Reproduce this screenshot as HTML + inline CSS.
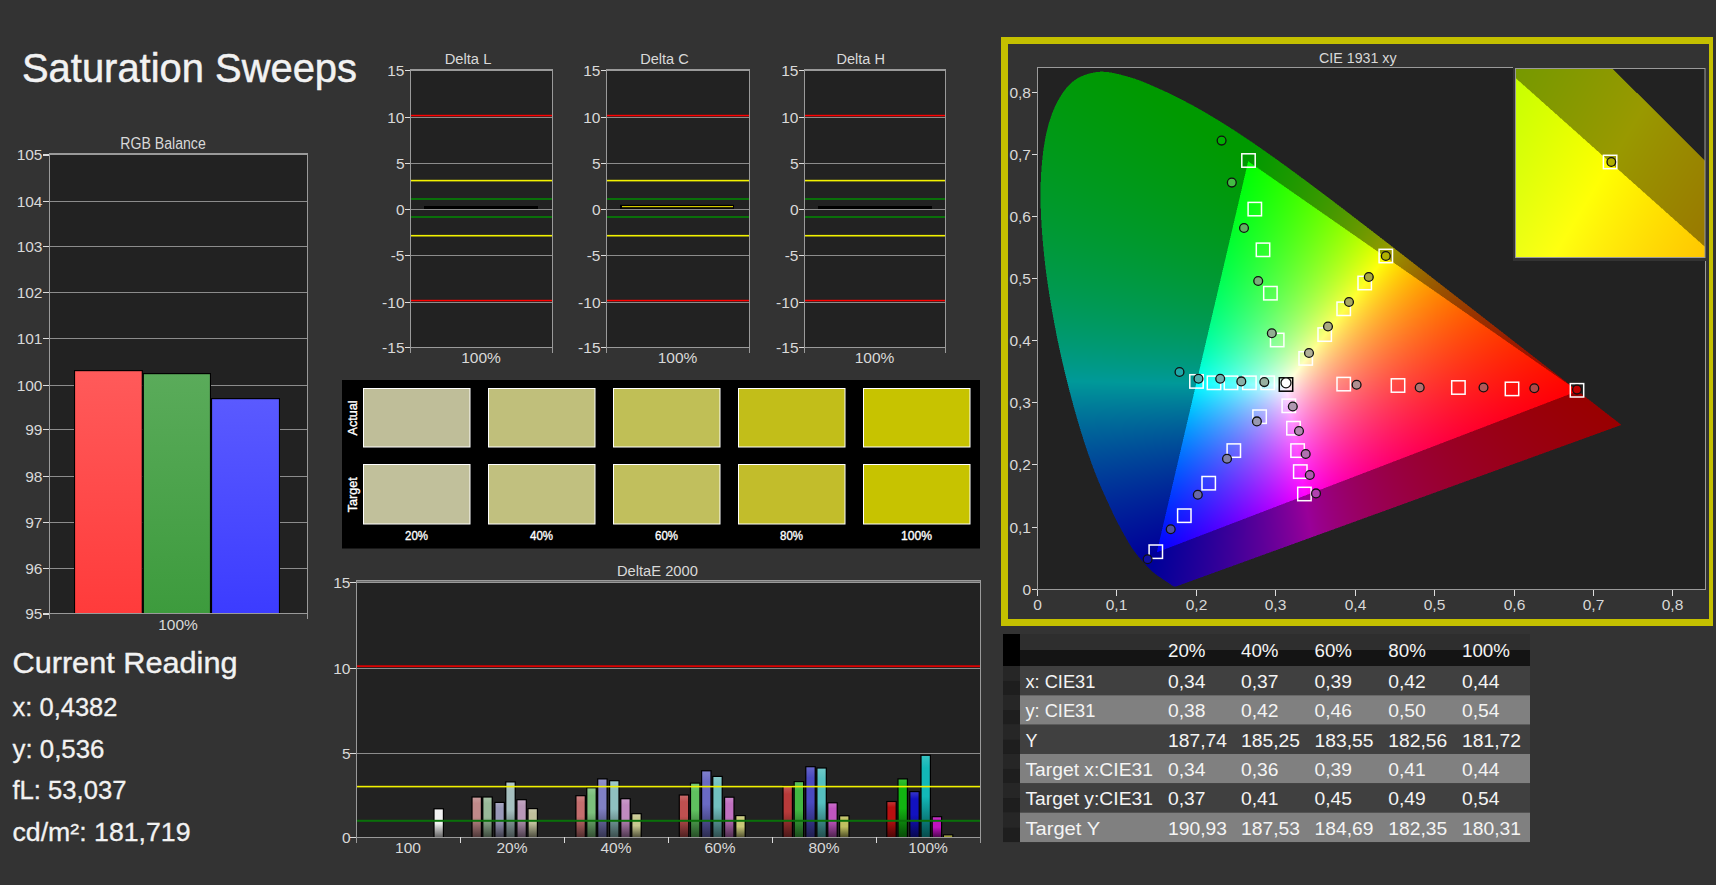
<!DOCTYPE html>
<html><head><meta charset="utf-8"><title>Saturation Sweeps</title>
<style>
html,body{margin:0;padding:0;background:#333333;}
#wrap{position:relative;width:1716px;height:885px;overflow:hidden;background:#333333;font-family:"Liberation Sans",sans-serif;}
svg{position:absolute;left:0;top:0;font-family:"Liberation Sans",sans-serif;}
#cie{position:absolute;left:1038px;top:68px;}
</style></head><body><div id="wrap">
<svg width="1716" height="885" viewBox="0 0 1716 885">
<text x="22" y="82" font-size="41" fill="#f2f2f2" text-anchor="start" textLength="335" lengthAdjust="spacingAndGlyphs" stroke="#f2f2f2" stroke-width="0.5">Saturation Sweeps</text>
<text x="163" y="148.5" font-size="16" fill="#d9d9d9" text-anchor="middle" textLength="85.5" lengthAdjust="spacingAndGlyphs" >RGB Balance</text>
<rect x="49" y="154" width="258" height="459" fill="#222222" />
<rect x="49" y="568" width="258" height="1" fill="#8c8c8c"/>
<rect x="49" y="522" width="258" height="1" fill="#8c8c8c"/>
<rect x="49" y="476" width="258" height="1" fill="#8c8c8c"/>
<rect x="49" y="429" width="258" height="1" fill="#8c8c8c"/>
<rect x="49" y="385" width="258" height="1" fill="#8c8c8c"/>
<rect x="49" y="338" width="258" height="1" fill="#8c8c8c"/>
<rect x="49" y="292" width="258" height="1" fill="#8c8c8c"/>
<rect x="49" y="246" width="258" height="1" fill="#8c8c8c"/>
<rect x="49" y="201" width="258" height="1" fill="#8c8c8c"/>
<defs>
<linearGradient id="gr" x1="0" y1="0" x2="0" y2="1"><stop offset="0" stop-color="#ff5a5a"/><stop offset="1" stop-color="#ff3b3b"/></linearGradient>
<linearGradient id="gg" x1="0" y1="0" x2="0" y2="1"><stop offset="0" stop-color="#5aab5a"/><stop offset="1" stop-color="#3d9b3d"/></linearGradient>
<linearGradient id="gb" x1="0" y1="0" x2="0" y2="1"><stop offset="0" stop-color="#5a5aff"/><stop offset="1" stop-color="#3c3cff"/></linearGradient>
</defs>
<rect x="74" y="370" width="68.80000000000001" height="243" fill="#000" />
<rect x="75.1" y="371.2" width="66.60000000000001" height="241.8" fill="url(#gr)" />
<rect x="142.8" y="373" width="68.19999999999999" height="240" fill="#000" />
<rect x="143.9" y="374.2" width="65.99999999999999" height="238.8" fill="url(#gg)" />
<rect x="211" y="398" width="69" height="215" fill="#000" />
<rect x="212.1" y="399.2" width="66.8" height="213.8" fill="url(#gb)" />
<rect x="49" y="154" width="1" height="465" fill="#9a9a9a"/>
<rect x="307" y="154" width="1" height="465" fill="#9a9a9a"/>
<rect x="49" y="153" width="259" height="2" fill="#9a9a9a"/>
<rect x="49" y="613" width="259" height="1" fill="#9a9a9a"/>
<rect x="43" y="613" width="6" height="2" fill="#dddddd"/>
<text x="42.5" y="618.5" font-size="15.5" fill="#d9d9d9" text-anchor="end" >95</text>
<rect x="43" y="568" width="6" height="1" fill="#dddddd"/>
<text x="42.5" y="573.5" font-size="15.5" fill="#d9d9d9" text-anchor="end" >96</text>
<rect x="43" y="522" width="6" height="1" fill="#dddddd"/>
<text x="42.5" y="527.5" font-size="15.5" fill="#d9d9d9" text-anchor="end" >97</text>
<rect x="43" y="476" width="6" height="1" fill="#dddddd"/>
<text x="42.5" y="481.5" font-size="15.5" fill="#d9d9d9" text-anchor="end" >98</text>
<rect x="43" y="429" width="6" height="1" fill="#dddddd"/>
<text x="42.5" y="434.5" font-size="15.5" fill="#d9d9d9" text-anchor="end" >99</text>
<rect x="43" y="385" width="6" height="1" fill="#dddddd"/>
<text x="42.5" y="390.5" font-size="15.5" fill="#d9d9d9" text-anchor="end" >100</text>
<rect x="43" y="338" width="6" height="1" fill="#dddddd"/>
<text x="42.5" y="343.5" font-size="15.5" fill="#d9d9d9" text-anchor="end" >101</text>
<rect x="43" y="292" width="6" height="1" fill="#dddddd"/>
<text x="42.5" y="297.5" font-size="15.5" fill="#d9d9d9" text-anchor="end" >102</text>
<rect x="43" y="246" width="6" height="1" fill="#dddddd"/>
<text x="42.5" y="251.5" font-size="15.5" fill="#d9d9d9" text-anchor="end" >103</text>
<rect x="43" y="201" width="6" height="1" fill="#dddddd"/>
<text x="42.5" y="206.5" font-size="15.5" fill="#d9d9d9" text-anchor="end" >104</text>
<rect x="43" y="154" width="6" height="2" fill="#dddddd"/>
<text x="42.5" y="159.5" font-size="15.5" fill="#d9d9d9" text-anchor="end" >105</text>
<text x="178" y="630" font-size="15.5" fill="#d9d9d9" text-anchor="middle" >100%</text>
<text x="12.5" y="673.2" font-size="30" fill="#f2f2f2" text-anchor="start" textLength="225" lengthAdjust="spacingAndGlyphs" stroke="#f2f2f2" stroke-width="0.4">Current Reading</text>
<text x="12.5" y="715.8" font-size="25" fill="#f2f2f2" text-anchor="start" textLength="105" lengthAdjust="spacingAndGlyphs" stroke="#f2f2f2" stroke-width="0.3">x: 0,4382</text>
<text x="12.5" y="757.5999999999999" font-size="25" fill="#f2f2f2" text-anchor="start" textLength="92" lengthAdjust="spacingAndGlyphs" stroke="#f2f2f2" stroke-width="0.3">y: 0,536</text>
<text x="12.5" y="799.4" font-size="25" fill="#f2f2f2" text-anchor="start" textLength="114" lengthAdjust="spacingAndGlyphs" stroke="#f2f2f2" stroke-width="0.3">fL: 53,037</text>
<text x="12.5" y="841.1999999999999" font-size="25" fill="#f2f2f2" text-anchor="start" textLength="178" lengthAdjust="spacingAndGlyphs" stroke="#f2f2f2" stroke-width="0.3">cd/m²: 181,719</text>
<rect x="410" y="70" width="142" height="277" fill="#222222" />
<text x="468" y="64" font-size="15.5" fill="#d9d9d9" text-anchor="middle" textLength="46.7" lengthAdjust="spacingAndGlyphs" >Delta L</text>
<rect x="410" y="117" width="142" height="1" fill="#8c8c8c"/>
<rect x="410" y="163" width="142" height="1" fill="#8c8c8c"/>
<rect x="410" y="209" width="142" height="1" fill="#8c8c8c"/>
<rect x="410" y="255" width="142" height="1" fill="#8c8c8c"/>
<rect x="410" y="302" width="142" height="1" fill="#8c8c8c"/>
<rect x="410" y="114.8" width="143" height="1.5" fill="#ff0000"/>
<rect x="410" y="299.8" width="143" height="1.5" fill="#ff0000"/>
<rect x="410" y="179.8" width="143" height="1.6" fill="#f2f200"/>
<rect x="410" y="234.9" width="143" height="1.6" fill="#f2f200"/>
<rect x="410" y="198" width="143" height="2" fill="#0a700a"/>
<rect x="410" y="216" width="143" height="2" fill="#0a700a"/>
<rect x="424" y="206" width="114" height="3" fill="#000" />
<rect x="410" y="70" width="1" height="283" fill="#9a9a9a"/>
<rect x="552" y="70" width="1" height="283" fill="#9a9a9a"/>
<rect x="410" y="69" width="143" height="2" fill="#9a9a9a"/>
<rect x="410" y="347" width="143" height="1" fill="#9a9a9a"/>
<rect x="405" y="70" width="5" height="1" fill="#dddddd"/>
<text x="404.5" y="75.5" font-size="15.5" fill="#d9d9d9" text-anchor="end" >15</text>
<rect x="405" y="117" width="5" height="1" fill="#dddddd"/>
<text x="404.5" y="122.5" font-size="15.5" fill="#d9d9d9" text-anchor="end" >10</text>
<rect x="405" y="163" width="5" height="1" fill="#dddddd"/>
<text x="404.5" y="168.5" font-size="15.5" fill="#d9d9d9" text-anchor="end" >5</text>
<rect x="405" y="209" width="5" height="1" fill="#dddddd"/>
<text x="404.5" y="214.5" font-size="15.5" fill="#d9d9d9" text-anchor="end" >0</text>
<rect x="405" y="255" width="5" height="1" fill="#dddddd"/>
<text x="404.5" y="260.5" font-size="15.5" fill="#d9d9d9" text-anchor="end" >-5</text>
<rect x="405" y="302" width="5" height="1" fill="#dddddd"/>
<text x="404.5" y="307.5" font-size="15.5" fill="#d9d9d9" text-anchor="end" >-10</text>
<rect x="405" y="347" width="5" height="1" fill="#dddddd"/>
<text x="404.5" y="352.5" font-size="15.5" fill="#d9d9d9" text-anchor="end" >-15</text>
<text x="481.0" y="363" font-size="15.5" fill="#d9d9d9" text-anchor="middle" >100%</text>
<rect x="606" y="70" width="143" height="277" fill="#222222" />
<text x="664.5" y="64" font-size="15.5" fill="#d9d9d9" text-anchor="middle" textLength="48.5" lengthAdjust="spacingAndGlyphs" >Delta C</text>
<rect x="606" y="117" width="143" height="1" fill="#8c8c8c"/>
<rect x="606" y="163" width="143" height="1" fill="#8c8c8c"/>
<rect x="606" y="209" width="143" height="1" fill="#8c8c8c"/>
<rect x="606" y="255" width="143" height="1" fill="#8c8c8c"/>
<rect x="606" y="302" width="143" height="1" fill="#8c8c8c"/>
<rect x="606" y="114.8" width="144" height="1.5" fill="#ff0000"/>
<rect x="606" y="299.8" width="144" height="1.5" fill="#ff0000"/>
<rect x="606" y="179.8" width="144" height="1.6" fill="#f2f200"/>
<rect x="606" y="234.9" width="144" height="1.6" fill="#f2f200"/>
<rect x="606" y="198" width="144" height="2" fill="#0a700a"/>
<rect x="606" y="216" width="144" height="2" fill="#0a700a"/>
<rect x="620" y="204.8" width="114" height="4" fill="#000" />
<rect x="622" y="206" width="111" height="1.2" fill="#d2c800" />
<rect x="606" y="70" width="1" height="283" fill="#9a9a9a"/>
<rect x="749" y="70" width="1" height="283" fill="#9a9a9a"/>
<rect x="606" y="69" width="144" height="2" fill="#9a9a9a"/>
<rect x="606" y="347" width="144" height="1" fill="#9a9a9a"/>
<rect x="601" y="70" width="5" height="1" fill="#dddddd"/>
<text x="600.5" y="75.5" font-size="15.5" fill="#d9d9d9" text-anchor="end" >15</text>
<rect x="601" y="117" width="5" height="1" fill="#dddddd"/>
<text x="600.5" y="122.5" font-size="15.5" fill="#d9d9d9" text-anchor="end" >10</text>
<rect x="601" y="163" width="5" height="1" fill="#dddddd"/>
<text x="600.5" y="168.5" font-size="15.5" fill="#d9d9d9" text-anchor="end" >5</text>
<rect x="601" y="209" width="5" height="1" fill="#dddddd"/>
<text x="600.5" y="214.5" font-size="15.5" fill="#d9d9d9" text-anchor="end" >0</text>
<rect x="601" y="255" width="5" height="1" fill="#dddddd"/>
<text x="600.5" y="260.5" font-size="15.5" fill="#d9d9d9" text-anchor="end" >-5</text>
<rect x="601" y="302" width="5" height="1" fill="#dddddd"/>
<text x="600.5" y="307.5" font-size="15.5" fill="#d9d9d9" text-anchor="end" >-10</text>
<rect x="601" y="347" width="5" height="1" fill="#dddddd"/>
<text x="600.5" y="352.5" font-size="15.5" fill="#d9d9d9" text-anchor="end" >-15</text>
<text x="677.5" y="363" font-size="15.5" fill="#d9d9d9" text-anchor="middle" >100%</text>
<rect x="804" y="70" width="141" height="277" fill="#222222" />
<text x="860.7" y="64" font-size="15.5" fill="#d9d9d9" text-anchor="middle" textLength="48.5" lengthAdjust="spacingAndGlyphs" >Delta H</text>
<rect x="804" y="117" width="141" height="1" fill="#8c8c8c"/>
<rect x="804" y="163" width="141" height="1" fill="#8c8c8c"/>
<rect x="804" y="209" width="141" height="1" fill="#8c8c8c"/>
<rect x="804" y="255" width="141" height="1" fill="#8c8c8c"/>
<rect x="804" y="302" width="141" height="1" fill="#8c8c8c"/>
<rect x="804" y="114.8" width="142" height="1.5" fill="#ff0000"/>
<rect x="804" y="299.8" width="142" height="1.5" fill="#ff0000"/>
<rect x="804" y="179.8" width="142" height="1.6" fill="#f2f200"/>
<rect x="804" y="234.9" width="142" height="1.6" fill="#f2f200"/>
<rect x="804" y="198" width="142" height="2" fill="#0a700a"/>
<rect x="804" y="216" width="142" height="2" fill="#0a700a"/>
<rect x="818" y="206" width="114" height="3" fill="#000" />
<rect x="804" y="70" width="1" height="283" fill="#9a9a9a"/>
<rect x="945" y="70" width="1" height="283" fill="#9a9a9a"/>
<rect x="804" y="69" width="142" height="2" fill="#9a9a9a"/>
<rect x="804" y="347" width="142" height="1" fill="#9a9a9a"/>
<rect x="799" y="70" width="5" height="1" fill="#dddddd"/>
<text x="798.5" y="75.5" font-size="15.5" fill="#d9d9d9" text-anchor="end" >15</text>
<rect x="799" y="117" width="5" height="1" fill="#dddddd"/>
<text x="798.5" y="122.5" font-size="15.5" fill="#d9d9d9" text-anchor="end" >10</text>
<rect x="799" y="163" width="5" height="1" fill="#dddddd"/>
<text x="798.5" y="168.5" font-size="15.5" fill="#d9d9d9" text-anchor="end" >5</text>
<rect x="799" y="209" width="5" height="1" fill="#dddddd"/>
<text x="798.5" y="214.5" font-size="15.5" fill="#d9d9d9" text-anchor="end" >0</text>
<rect x="799" y="255" width="5" height="1" fill="#dddddd"/>
<text x="798.5" y="260.5" font-size="15.5" fill="#d9d9d9" text-anchor="end" >-5</text>
<rect x="799" y="302" width="5" height="1" fill="#dddddd"/>
<text x="798.5" y="307.5" font-size="15.5" fill="#d9d9d9" text-anchor="end" >-10</text>
<rect x="799" y="347" width="5" height="1" fill="#dddddd"/>
<text x="798.5" y="352.5" font-size="15.5" fill="#d9d9d9" text-anchor="end" >-15</text>
<text x="874.5" y="363" font-size="15.5" fill="#d9d9d9" text-anchor="middle" >100%</text>
<rect x="342" y="380" width="638" height="168.5" fill="#000" />
<rect x="363.5" y="388.5" width="106.5" height="58.5" fill="#bfbe99" stroke="#ffffff" stroke-width="1"/>
<rect x="363.5" y="464.5" width="106.5" height="59.5" fill="#c1c09b" stroke="#ffffff" stroke-width="1"/>
<text x="416.5" y="539.8" font-size="12.5" fill="#ffffff" text-anchor="middle" textLength="23" lengthAdjust="spacingAndGlyphs" stroke="#ffffff" stroke-width="0.35">20%</text>
<rect x="488.5" y="388.5" width="106.5" height="58.5" fill="#c0bf7b" stroke="#ffffff" stroke-width="1"/>
<rect x="488.5" y="464.5" width="106.5" height="59.5" fill="#c1c07f" stroke="#ffffff" stroke-width="1"/>
<text x="541.5" y="539.8" font-size="12.5" fill="#ffffff" text-anchor="middle" textLength="23" lengthAdjust="spacingAndGlyphs" stroke="#ffffff" stroke-width="0.35">40%</text>
<rect x="613.5" y="388.5" width="106.5" height="58.5" fill="#c0bf56" stroke="#ffffff" stroke-width="1"/>
<rect x="613.5" y="464.5" width="106.5" height="59.5" fill="#c1bf5d" stroke="#ffffff" stroke-width="1"/>
<text x="666.5" y="539.8" font-size="12.5" fill="#ffffff" text-anchor="middle" textLength="23" lengthAdjust="spacingAndGlyphs" stroke="#ffffff" stroke-width="0.35">60%</text>
<rect x="738.5" y="388.5" width="106.5" height="58.5" fill="#c2be19" stroke="#ffffff" stroke-width="1"/>
<rect x="738.5" y="464.5" width="106.5" height="59.5" fill="#c2bd2b" stroke="#ffffff" stroke-width="1"/>
<text x="791.5" y="539.8" font-size="12.5" fill="#ffffff" text-anchor="middle" textLength="23" lengthAdjust="spacingAndGlyphs" stroke="#ffffff" stroke-width="0.35">80%</text>
<rect x="863.5" y="388.5" width="106.5" height="58.5" fill="#c7c300" stroke="#ffffff" stroke-width="1"/>
<rect x="863.5" y="464.5" width="106.5" height="59.5" fill="#c7c300" stroke="#ffffff" stroke-width="1"/>
<text x="916.5" y="539.8" font-size="12.5" fill="#ffffff" text-anchor="middle" textLength="31" lengthAdjust="spacingAndGlyphs" stroke="#ffffff" stroke-width="0.35">100%</text>
<text x="0" y="0" font-size="13" fill="#fff" stroke="#fff" stroke-width="0.35" text-anchor="middle" textLength="35" lengthAdjust="spacingAndGlyphs" transform="translate(356.5,418) rotate(-90)">Actual</text>
<text x="0" y="0" font-size="13" fill="#fff" stroke="#fff" stroke-width="0.35" text-anchor="middle" textLength="35" lengthAdjust="spacingAndGlyphs" transform="translate(356.5,494.8) rotate(-90)">Target</text>
<rect x="356" y="581" width="624" height="256" fill="#222222" />
<text x="657.4" y="576" font-size="15.5" fill="#d9d9d9" text-anchor="middle" textLength="81" lengthAdjust="spacingAndGlyphs" >DeltaE 2000</text>
<rect x="356" y="753" width="624" height="1" fill="#8c8c8c"/>
<rect x="356" y="668" width="624" height="1" fill="#8c8c8c"/>
<defs>
<linearGradient id="de0" x1="0" y1="0" x2="0" y2="1"><stop offset="0" stop-color="#f3f3f3"/><stop offset="0.15" stop-color="#f2f2f2"/><stop offset="0.5" stop-color="#f2f2f2"/><stop offset="1" stop-color="#656565"/></linearGradient>
<linearGradient id="de1" x1="0" y1="0" x2="0" y2="1"><stop offset="0" stop-color="#c99b9b"/><stop offset="0.15" stop-color="#c08a8a"/><stop offset="0.5" stop-color="#c08a8a"/><stop offset="1" stop-color="#503939"/></linearGradient>
<linearGradient id="de2" x1="0" y1="0" x2="0" y2="1"><stop offset="0" stop-color="#a7c2a7"/><stop offset="0.15" stop-color="#98b898"/><stop offset="0.5" stop-color="#98b898"/><stop offset="1" stop-color="#3f4d3f"/></linearGradient>
<linearGradient id="de3" x1="0" y1="0" x2="0" y2="1"><stop offset="0" stop-color="#a7a7c2"/><stop offset="0.15" stop-color="#9898b8"/><stop offset="0.5" stop-color="#9898b8"/><stop offset="1" stop-color="#3f3f4d"/></linearGradient>
<linearGradient id="de4" x1="0" y1="0" x2="0" y2="1"><stop offset="0" stop-color="#b3c9c9"/><stop offset="0.15" stop-color="#a6c0c0"/><stop offset="0.5" stop-color="#a6c0c0"/><stop offset="1" stop-color="#455050"/></linearGradient>
<linearGradient id="de5" x1="0" y1="0" x2="0" y2="1"><stop offset="0" stop-color="#c2a7c2"/><stop offset="0.15" stop-color="#b898b8"/><stop offset="0.5" stop-color="#b898b8"/><stop offset="1" stop-color="#4d3f4d"/></linearGradient>
<linearGradient id="de6" x1="0" y1="0" x2="0" y2="1"><stop offset="0" stop-color="#c9c9aa"/><stop offset="0.15" stop-color="#c0c09c"/><stop offset="0.5" stop-color="#c0c09c"/><stop offset="1" stop-color="#505041"/></linearGradient>
<linearGradient id="de7" x1="0" y1="0" x2="0" y2="1"><stop offset="0" stop-color="#cc8383"/><stop offset="0.15" stop-color="#c46e6e"/><stop offset="0.5" stop-color="#c46e6e"/><stop offset="1" stop-color="#522e2e"/></linearGradient>
<linearGradient id="de8" x1="0" y1="0" x2="0" y2="1"><stop offset="0" stop-color="#8fc98f"/><stop offset="0.15" stop-color="#7cc07c"/><stop offset="0.5" stop-color="#7cc07c"/><stop offset="1" stop-color="#345034"/></linearGradient>
<linearGradient id="de9" x1="0" y1="0" x2="0" y2="1"><stop offset="0" stop-color="#9393cc"/><stop offset="0.15" stop-color="#8080c4"/><stop offset="0.5" stop-color="#8080c4"/><stop offset="1" stop-color="#353552"/></linearGradient>
<linearGradient id="de10" x1="0" y1="0" x2="0" y2="1"><stop offset="0" stop-color="#9fc9c9"/><stop offset="0.15" stop-color="#8fc0c0"/><stop offset="0.5" stop-color="#8fc0c0"/><stop offset="1" stop-color="#3c5050"/></linearGradient>
<linearGradient id="de11" x1="0" y1="0" x2="0" y2="1"><stop offset="0" stop-color="#c99bc9"/><stop offset="0.15" stop-color="#c08ac0"/><stop offset="0.5" stop-color="#c08ac0"/><stop offset="1" stop-color="#503950"/></linearGradient>
<linearGradient id="de12" x1="0" y1="0" x2="0" y2="1"><stop offset="0" stop-color="#d0d0a0"/><stop offset="0.15" stop-color="#c8c890"/><stop offset="0.5" stop-color="#c8c890"/><stop offset="1" stop-color="#54543c"/></linearGradient>
<linearGradient id="de13" x1="0" y1="0" x2="0" y2="1"><stop offset="0" stop-color="#c86a6a"/><stop offset="0.15" stop-color="#bf5050"/><stop offset="0.5" stop-color="#bf5050"/><stop offset="1" stop-color="#502121"/></linearGradient>
<linearGradient id="de14" x1="0" y1="0" x2="0" y2="1"><stop offset="0" stop-color="#76c976"/><stop offset="0.15" stop-color="#5fc05f"/><stop offset="0.5" stop-color="#5fc05f"/><stop offset="1" stop-color="#275027"/></linearGradient>
<linearGradient id="de15" x1="0" y1="0" x2="0" y2="1"><stop offset="0" stop-color="#8080cc"/><stop offset="0.15" stop-color="#6a6ac4"/><stop offset="0.5" stop-color="#6a6ac4"/><stop offset="1" stop-color="#2c2c52"/></linearGradient>
<linearGradient id="de16" x1="0" y1="0" x2="0" y2="1"><stop offset="0" stop-color="#87c9c9"/><stop offset="0.15" stop-color="#72c0c0"/><stop offset="0.5" stop-color="#72c0c0"/><stop offset="1" stop-color="#2f5050"/></linearGradient>
<linearGradient id="de17" x1="0" y1="0" x2="0" y2="1"><stop offset="0" stop-color="#c985c9"/><stop offset="0.15" stop-color="#c070c0"/><stop offset="0.5" stop-color="#c070c0"/><stop offset="1" stop-color="#502f50"/></linearGradient>
<linearGradient id="de18" x1="0" y1="0" x2="0" y2="1"><stop offset="0" stop-color="#d0d08c"/><stop offset="0.15" stop-color="#c8c878"/><stop offset="0.5" stop-color="#c8c878"/><stop offset="1" stop-color="#545432"/></linearGradient>
<linearGradient id="de19" x1="0" y1="0" x2="0" y2="1"><stop offset="0" stop-color="#c25757"/><stop offset="0.15" stop-color="#b83a3a"/><stop offset="0.5" stop-color="#b83a3a"/><stop offset="1" stop-color="#4d1818"/></linearGradient>
<linearGradient id="de20" x1="0" y1="0" x2="0" y2="1"><stop offset="0" stop-color="#5ec25e"/><stop offset="0.15" stop-color="#42b842"/><stop offset="0.5" stop-color="#42b842"/><stop offset="1" stop-color="#1b4d1b"/></linearGradient>
<linearGradient id="de21" x1="0" y1="0" x2="0" y2="1"><stop offset="0" stop-color="#6565c9"/><stop offset="0.15" stop-color="#4a4ac0"/><stop offset="0.5" stop-color="#4a4ac0"/><stop offset="1" stop-color="#1f1f50"/></linearGradient>
<linearGradient id="de22" x1="0" y1="0" x2="0" y2="1"><stop offset="0" stop-color="#6ec9c9"/><stop offset="0.15" stop-color="#55c0c0"/><stop offset="0.5" stop-color="#55c0c0"/><stop offset="1" stop-color="#235050"/></linearGradient>
<linearGradient id="de23" x1="0" y1="0" x2="0" y2="1"><stop offset="0" stop-color="#c96ec9"/><stop offset="0.15" stop-color="#c055c0"/><stop offset="0.5" stop-color="#c055c0"/><stop offset="1" stop-color="#502350"/></linearGradient>
<linearGradient id="de24" x1="0" y1="0" x2="0" y2="1"><stop offset="0" stop-color="#c9c977"/><stop offset="0.15" stop-color="#c0c060"/><stop offset="0.5" stop-color="#c0c060"/><stop offset="1" stop-color="#505028"/></linearGradient>
<linearGradient id="de25" x1="0" y1="0" x2="0" y2="1"><stop offset="0" stop-color="#c23333"/><stop offset="0.15" stop-color="#b81010"/><stop offset="0.5" stop-color="#b81010"/><stop offset="1" stop-color="#4d0606"/></linearGradient>
<linearGradient id="de26" x1="0" y1="0" x2="0" y2="1"><stop offset="0" stop-color="#35bf35"/><stop offset="0.15" stop-color="#12b412"/><stop offset="0.5" stop-color="#12b412"/><stop offset="1" stop-color="#074b07"/></linearGradient>
<linearGradient id="de27" x1="0" y1="0" x2="0" y2="1"><stop offset="0" stop-color="#3535c9"/><stop offset="0.15" stop-color="#1212c0"/><stop offset="0.5" stop-color="#1212c0"/><stop offset="1" stop-color="#070750"/></linearGradient>
<linearGradient id="de28" x1="0" y1="0" x2="0" y2="1"><stop offset="0" stop-color="#35c2c2"/><stop offset="0.15" stop-color="#12b8b8"/><stop offset="0.5" stop-color="#12b8b8"/><stop offset="1" stop-color="#074d4d"/></linearGradient>
<linearGradient id="de29" x1="0" y1="0" x2="0" y2="1"><stop offset="0" stop-color="#c935c9"/><stop offset="0.15" stop-color="#c012c0"/><stop offset="0.5" stop-color="#c012c0"/><stop offset="1" stop-color="#500750"/></linearGradient>
<linearGradient id="de30" x1="0" y1="0" x2="0" y2="1"><stop offset="0" stop-color="#c9c95c"/><stop offset="0.15" stop-color="#c0c040"/><stop offset="0.5" stop-color="#c0c040"/><stop offset="1" stop-color="#50501a"/></linearGradient>
</defs>
<rect x="433.4" y="808.2" width="10.6" height="28.799999999999955" fill="#000" />
<rect x="434.59999999999997" y="809.4000000000001" width="8.2" height="27.599999999999955" fill="url(#de0)" />
<rect x="471.4" y="796.4" width="10.6" height="40.60000000000002" fill="#000" />
<rect x="472.59999999999997" y="797.6" width="8.2" height="39.40000000000002" fill="url(#de1)" />
<rect x="482.2" y="796.4" width="10.6" height="40.60000000000002" fill="#000" />
<rect x="483.4" y="797.6" width="8.2" height="39.40000000000002" fill="url(#de2)" />
<rect x="494.3" y="801.8" width="10.6" height="35.200000000000045" fill="#000" />
<rect x="495.5" y="803.0" width="8.2" height="34.00000000000004" fill="url(#de3)" />
<rect x="505.2" y="781.3" width="10.6" height="55.700000000000045" fill="#000" />
<rect x="506.4" y="782.5" width="8.2" height="54.50000000000004" fill="url(#de4)" />
<rect x="516.3" y="799.1" width="10.6" height="37.89999999999998" fill="#000" />
<rect x="517.5" y="800.3000000000001" width="8.2" height="36.699999999999974" fill="url(#de5)" />
<rect x="527.4" y="808" width="10.6" height="29" fill="#000" />
<rect x="528.6" y="809.2" width="8.2" height="27.8" fill="url(#de6)" />
<rect x="575.3" y="795.1" width="10.6" height="41.89999999999998" fill="#000" />
<rect x="576.5" y="796.3000000000001" width="8.2" height="40.699999999999974" fill="url(#de7)" />
<rect x="586.2" y="787.2" width="10.6" height="49.799999999999955" fill="#000" />
<rect x="587.4000000000001" y="788.4000000000001" width="8.2" height="48.59999999999995" fill="url(#de8)" />
<rect x="597.1" y="778.3" width="10.6" height="58.700000000000045" fill="#000" />
<rect x="598.3000000000001" y="779.5" width="8.2" height="57.50000000000004" fill="url(#de9)" />
<rect x="609" y="780.1" width="10.6" height="56.89999999999998" fill="#000" />
<rect x="610.2" y="781.3000000000001" width="8.2" height="55.699999999999974" fill="url(#de10)" />
<rect x="620.2" y="798.1" width="10.6" height="38.89999999999998" fill="#000" />
<rect x="621.4000000000001" y="799.3000000000001" width="8.2" height="37.699999999999974" fill="url(#de11)" />
<rect x="631.2" y="813.1" width="10.6" height="23.899999999999977" fill="#000" />
<rect x="632.4000000000001" y="814.3000000000001" width="8.2" height="22.699999999999978" fill="url(#de12)" />
<rect x="678.7" y="794.4" width="10.6" height="42.60000000000002" fill="#000" />
<rect x="679.9000000000001" y="795.6" width="8.2" height="41.40000000000002" fill="url(#de13)" />
<rect x="689.9" y="782.5" width="10.6" height="54.5" fill="#000" />
<rect x="691.1" y="783.7" width="8.2" height="53.3" fill="url(#de14)" />
<rect x="701" y="770.2" width="10.6" height="66.79999999999995" fill="#000" />
<rect x="702.2" y="771.4000000000001" width="8.2" height="65.59999999999995" fill="url(#de15)" />
<rect x="712.2" y="775.8" width="10.6" height="61.200000000000045" fill="#000" />
<rect x="713.4000000000001" y="777.0" width="8.2" height="60.00000000000004" fill="url(#de16)" />
<rect x="724" y="796.6" width="10.6" height="40.39999999999998" fill="#000" />
<rect x="725.2" y="797.8000000000001" width="8.2" height="39.199999999999974" fill="url(#de17)" />
<rect x="735.2" y="815" width="10.6" height="22" fill="#000" />
<rect x="736.4000000000001" y="816.2" width="8.2" height="20.8" fill="url(#de18)" />
<rect x="782.4" y="785.4" width="10.6" height="51.60000000000002" fill="#000" />
<rect x="783.6" y="786.6" width="8.2" height="50.40000000000002" fill="url(#de19)" />
<rect x="793.6" y="781" width="10.6" height="56" fill="#000" />
<rect x="794.8000000000001" y="782.2" width="8.2" height="54.8" fill="url(#de20)" />
<rect x="805.2" y="766.1" width="10.6" height="70.89999999999998" fill="#000" />
<rect x="806.4000000000001" y="767.3000000000001" width="8.2" height="69.69999999999997" fill="url(#de21)" />
<rect x="816.3" y="767.4" width="10.6" height="69.60000000000002" fill="#000" />
<rect x="817.5" y="768.6" width="8.2" height="68.40000000000002" fill="url(#de22)" />
<rect x="827.2" y="802.2" width="10.6" height="34.799999999999955" fill="#000" />
<rect x="828.4000000000001" y="803.4000000000001" width="8.2" height="33.59999999999995" fill="url(#de23)" />
<rect x="839" y="815.2" width="10.6" height="21.799999999999955" fill="#000" />
<rect x="840.2" y="816.4000000000001" width="8.2" height="20.599999999999955" fill="url(#de24)" />
<rect x="886.2" y="800.9" width="10.6" height="36.10000000000002" fill="#000" />
<rect x="887.4000000000001" y="802.1" width="8.2" height="34.90000000000002" fill="url(#de25)" />
<rect x="897.4" y="778.3" width="10.6" height="58.700000000000045" fill="#000" />
<rect x="898.6" y="779.5" width="8.2" height="57.50000000000004" fill="url(#de26)" />
<rect x="909.2" y="791" width="10.6" height="46" fill="#000" />
<rect x="910.4000000000001" y="792.2" width="8.2" height="44.8" fill="url(#de27)" />
<rect x="920.4" y="754.7" width="10.6" height="82.29999999999995" fill="#000" />
<rect x="921.6" y="755.9000000000001" width="8.2" height="81.09999999999995" fill="url(#de28)" />
<rect x="931.6" y="816.1" width="10.6" height="20.899999999999977" fill="#000" />
<rect x="932.8000000000001" y="817.3000000000001" width="8.2" height="19.699999999999978" fill="url(#de29)" />
<rect x="942.8" y="834.3" width="10.6" height="2.7000000000000455" fill="#000" />
<rect x="944.0" y="835.5" width="8.2" height="1.5000000000000455" fill="url(#de30)" />
<rect x="356" y="665.3" width="625" height="1.8" fill="#e00000"/>
<rect x="356" y="785.8" width="625" height="1.6" fill="#f2f200"/>
<rect x="356" y="819.8" width="625" height="2" fill="#0a700a"/>
<rect x="356" y="580" width="1" height="263" fill="#9a9a9a"/>
<rect x="980" y="580" width="1" height="263" fill="#9a9a9a"/>
<rect x="356" y="580" width="625" height="3" fill="#9a9a9a"/>
<rect x="357" y="581" width="623" height="1" fill="#6e6e6e"/>
<rect x="356" y="837" width="625" height="1" fill="#999999"/>
<rect x="460" y="837" width="1" height="6" fill="#dddddd"/>
<rect x="564" y="837" width="1" height="6" fill="#dddddd"/>
<rect x="668" y="837" width="1" height="6" fill="#dddddd"/>
<rect x="772" y="837" width="1" height="6" fill="#dddddd"/>
<rect x="876" y="837" width="1" height="6" fill="#dddddd"/>
<rect x="350" y="582" width="6" height="1" fill="#dddddd"/>
<text x="350.5" y="587.5" font-size="15.5" fill="#d9d9d9" text-anchor="end" >15</text>
<rect x="350" y="668" width="6" height="1" fill="#dddddd"/>
<text x="350.5" y="673.5" font-size="15.5" fill="#d9d9d9" text-anchor="end" >10</text>
<rect x="350" y="753" width="6" height="1" fill="#dddddd"/>
<text x="350.5" y="758.5" font-size="15.5" fill="#d9d9d9" text-anchor="end" >5</text>
<rect x="350" y="837" width="6" height="1" fill="#dddddd"/>
<text x="350.5" y="842.5" font-size="15.5" fill="#d9d9d9" text-anchor="end" >0</text>
<text x="408" y="853.3" font-size="15.5" fill="#d9d9d9" text-anchor="middle" >100</text>
<text x="512" y="853.3" font-size="15.5" fill="#d9d9d9" text-anchor="middle" >20%</text>
<text x="616" y="853.3" font-size="15.5" fill="#d9d9d9" text-anchor="middle" >40%</text>
<text x="720" y="853.3" font-size="15.5" fill="#d9d9d9" text-anchor="middle" >60%</text>
<text x="824" y="853.3" font-size="15.5" fill="#d9d9d9" text-anchor="middle" >80%</text>
<text x="928" y="853.3" font-size="15.5" fill="#d9d9d9" text-anchor="middle" >100%</text>
<path d="M1001,37 H1713 V626 H1001 Z M1008,44 V619 H1709 V44 Z" fill="#c4c000" fill-rule="evenodd"/>
<rect x="1038" y="68" width="667" height="521" fill="#222222" />
<text x="1357.8" y="62.6" font-size="15.5" fill="#d9d9d9" text-anchor="middle" textLength="77.6" lengthAdjust="spacingAndGlyphs" >CIE 1931 xy</text>
<rect x="1037" y="589" width="1" height="7" fill="#dddddd"/>
<text x="1037.5" y="610" font-size="15.5" fill="#d9d9d9" text-anchor="middle" >0</text>
<rect x="1032" y="589" width="6" height="1" fill="#dddddd"/>
<text x="1031" y="594.5" font-size="15.5" fill="#d9d9d9" text-anchor="end" >0</text>
<rect x="1116" y="589" width="1" height="7" fill="#dddddd"/>
<text x="1116.5" y="610" font-size="15.5" fill="#d9d9d9" text-anchor="middle" >0,1</text>
<rect x="1032" y="527" width="6" height="1" fill="#dddddd"/>
<text x="1031" y="532.5" font-size="15.5" fill="#d9d9d9" text-anchor="end" >0,1</text>
<rect x="1196" y="589" width="1" height="7" fill="#dddddd"/>
<text x="1196.5" y="610" font-size="15.5" fill="#d9d9d9" text-anchor="middle" >0,2</text>
<rect x="1032" y="464" width="6" height="1" fill="#dddddd"/>
<text x="1031" y="469.5" font-size="15.5" fill="#d9d9d9" text-anchor="end" >0,2</text>
<rect x="1275" y="589" width="1" height="7" fill="#dddddd"/>
<text x="1275.5" y="610" font-size="15.5" fill="#d9d9d9" text-anchor="middle" >0,3</text>
<rect x="1032" y="402" width="6" height="1" fill="#dddddd"/>
<text x="1031" y="407.5" font-size="15.5" fill="#d9d9d9" text-anchor="end" >0,3</text>
<rect x="1355" y="589" width="1" height="7" fill="#dddddd"/>
<text x="1355.5" y="610" font-size="15.5" fill="#d9d9d9" text-anchor="middle" >0,4</text>
<rect x="1032" y="340" width="6" height="1" fill="#dddddd"/>
<text x="1031" y="345.5" font-size="15.5" fill="#d9d9d9" text-anchor="end" >0,4</text>
<rect x="1434" y="589" width="1" height="7" fill="#dddddd"/>
<text x="1434.5" y="610" font-size="15.5" fill="#d9d9d9" text-anchor="middle" >0,5</text>
<rect x="1032" y="278" width="6" height="1" fill="#dddddd"/>
<text x="1031" y="283.5" font-size="15.5" fill="#d9d9d9" text-anchor="end" >0,5</text>
<rect x="1514" y="589" width="1" height="7" fill="#dddddd"/>
<text x="1514.5" y="610" font-size="15.5" fill="#d9d9d9" text-anchor="middle" >0,6</text>
<rect x="1032" y="216" width="6" height="1" fill="#dddddd"/>
<text x="1031" y="221.5" font-size="15.5" fill="#d9d9d9" text-anchor="end" >0,6</text>
<rect x="1593" y="589" width="1" height="7" fill="#dddddd"/>
<text x="1593.5" y="610" font-size="15.5" fill="#d9d9d9" text-anchor="middle" >0,7</text>
<rect x="1032" y="154" width="6" height="1" fill="#dddddd"/>
<text x="1031" y="159.5" font-size="15.5" fill="#d9d9d9" text-anchor="end" >0,7</text>
<rect x="1672" y="589" width="1" height="7" fill="#dddddd"/>
<text x="1672.5" y="610" font-size="15.5" fill="#d9d9d9" text-anchor="middle" >0,8</text>
<rect x="1032" y="92" width="6" height="1" fill="#dddddd"/>
<text x="1031" y="97.5" font-size="15.5" fill="#d9d9d9" text-anchor="end" >0,8</text>
<rect x="1037" y="67" width="2" height="523" fill="#9a9a9a"/>
<rect x="1037" y="67" width="476" height="1.5" fill="#9a9a9a"/>
<rect x="1704.5" y="261" width="1.5" height="329" fill="#9a9a9a"/>
<rect x="1037" y="589" width="669" height="1" fill="#9a9a9a"/>
<rect x="1003" y="634" width="527" height="16" fill="#2e2e2e" />
<rect x="1003" y="650" width="527" height="16" fill="#141414" />
<rect x="1003" y="634" width="17" height="32" fill="#000000" />
<text x="1168" y="657" font-size="17.5" fill="#f4f4f4" text-anchor="start" textLength="37.5" lengthAdjust="spacingAndGlyphs" >20%</text>
<text x="1241" y="657" font-size="17.5" fill="#f4f4f4" text-anchor="start" textLength="37.5" lengthAdjust="spacingAndGlyphs" >40%</text>
<text x="1314.5" y="657" font-size="17.5" fill="#f4f4f4" text-anchor="start" textLength="37.5" lengthAdjust="spacingAndGlyphs" >60%</text>
<text x="1388.3" y="657" font-size="17.5" fill="#f4f4f4" text-anchor="start" textLength="37.5" lengthAdjust="spacingAndGlyphs" >80%</text>
<text x="1462" y="657" font-size="17.5" fill="#f4f4f4" text-anchor="start" textLength="47.9" lengthAdjust="spacingAndGlyphs" >100%</text>
<rect x="1020" y="666.0" width="510" height="29.4" fill="#404040" />
<rect x="1003" y="666.0" width="17" height="14.7" fill="#262626" />
<rect x="1003" y="680.7" width="17" height="14.7" fill="#1e1e1e" />
<text x="1025.4" y="688.0" font-size="18" fill="#f4f4f4" text-anchor="start" textLength="70" lengthAdjust="spacingAndGlyphs" >x: CIE31</text>
<text x="1168" y="688.0" font-size="18" fill="#f4f4f4" text-anchor="start" textLength="37.5" lengthAdjust="spacingAndGlyphs" >0,34</text>
<text x="1241" y="688.0" font-size="18" fill="#f4f4f4" text-anchor="start" textLength="37.5" lengthAdjust="spacingAndGlyphs" >0,37</text>
<text x="1314.5" y="688.0" font-size="18" fill="#f4f4f4" text-anchor="start" textLength="37.5" lengthAdjust="spacingAndGlyphs" >0,39</text>
<text x="1388.3" y="688.0" font-size="18" fill="#f4f4f4" text-anchor="start" textLength="37.5" lengthAdjust="spacingAndGlyphs" >0,42</text>
<text x="1462" y="688.0" font-size="18" fill="#f4f4f4" text-anchor="start" textLength="37.5" lengthAdjust="spacingAndGlyphs" >0,44</text>
<rect x="1020" y="695.33" width="510" height="29.4" fill="#808080" />
<rect x="1003" y="695.33" width="17" height="14.7" fill="#262626" />
<rect x="1003" y="710.0300000000001" width="17" height="14.7" fill="#1e1e1e" />
<text x="1025.4" y="717.33" font-size="18" fill="#f4f4f4" text-anchor="start" textLength="70" lengthAdjust="spacingAndGlyphs" >y: CIE31</text>
<text x="1168" y="717.33" font-size="18" fill="#f4f4f4" text-anchor="start" textLength="37.5" lengthAdjust="spacingAndGlyphs" >0,38</text>
<text x="1241" y="717.33" font-size="18" fill="#f4f4f4" text-anchor="start" textLength="37.5" lengthAdjust="spacingAndGlyphs" >0,42</text>
<text x="1314.5" y="717.33" font-size="18" fill="#f4f4f4" text-anchor="start" textLength="37.5" lengthAdjust="spacingAndGlyphs" >0,46</text>
<text x="1388.3" y="717.33" font-size="18" fill="#f4f4f4" text-anchor="start" textLength="37.5" lengthAdjust="spacingAndGlyphs" >0,50</text>
<text x="1462" y="717.33" font-size="18" fill="#f4f4f4" text-anchor="start" textLength="37.5" lengthAdjust="spacingAndGlyphs" >0,54</text>
<rect x="1020" y="724.66" width="510" height="29.4" fill="#404040" />
<rect x="1003" y="724.66" width="17" height="14.7" fill="#262626" />
<rect x="1003" y="739.36" width="17" height="14.7" fill="#1e1e1e" />
<text x="1025.4" y="746.66" font-size="18" fill="#f4f4f4" text-anchor="start" textLength="12" lengthAdjust="spacingAndGlyphs" >Y</text>
<text x="1168" y="746.66" font-size="18" fill="#f4f4f4" text-anchor="start" textLength="58.9" lengthAdjust="spacingAndGlyphs" >187,74</text>
<text x="1241" y="746.66" font-size="18" fill="#f4f4f4" text-anchor="start" textLength="58.9" lengthAdjust="spacingAndGlyphs" >185,25</text>
<text x="1314.5" y="746.66" font-size="18" fill="#f4f4f4" text-anchor="start" textLength="58.9" lengthAdjust="spacingAndGlyphs" >183,55</text>
<text x="1388.3" y="746.66" font-size="18" fill="#f4f4f4" text-anchor="start" textLength="58.9" lengthAdjust="spacingAndGlyphs" >182,56</text>
<text x="1462" y="746.66" font-size="18" fill="#f4f4f4" text-anchor="start" textLength="58.9" lengthAdjust="spacingAndGlyphs" >181,72</text>
<rect x="1020" y="753.99" width="510" height="29.4" fill="#808080" />
<rect x="1003" y="753.99" width="17" height="14.7" fill="#262626" />
<rect x="1003" y="768.69" width="17" height="14.7" fill="#1e1e1e" />
<text x="1025.4" y="775.99" font-size="18" fill="#f4f4f4" text-anchor="start" textLength="127.6" lengthAdjust="spacingAndGlyphs" >Target x:CIE31</text>
<text x="1168" y="775.99" font-size="18" fill="#f4f4f4" text-anchor="start" textLength="37.5" lengthAdjust="spacingAndGlyphs" >0,34</text>
<text x="1241" y="775.99" font-size="18" fill="#f4f4f4" text-anchor="start" textLength="37.5" lengthAdjust="spacingAndGlyphs" >0,36</text>
<text x="1314.5" y="775.99" font-size="18" fill="#f4f4f4" text-anchor="start" textLength="37.5" lengthAdjust="spacingAndGlyphs" >0,39</text>
<text x="1388.3" y="775.99" font-size="18" fill="#f4f4f4" text-anchor="start" textLength="37.5" lengthAdjust="spacingAndGlyphs" >0,41</text>
<text x="1462" y="775.99" font-size="18" fill="#f4f4f4" text-anchor="start" textLength="37.5" lengthAdjust="spacingAndGlyphs" >0,44</text>
<rect x="1020" y="783.3199999999999" width="510" height="29.4" fill="#404040" />
<rect x="1003" y="783.3199999999999" width="17" height="14.7" fill="#262626" />
<rect x="1003" y="798.02" width="17" height="14.7" fill="#1e1e1e" />
<text x="1025.4" y="805.3199999999999" font-size="18" fill="#f4f4f4" text-anchor="start" textLength="127.6" lengthAdjust="spacingAndGlyphs" >Target y:CIE31</text>
<text x="1168" y="805.3199999999999" font-size="18" fill="#f4f4f4" text-anchor="start" textLength="37.5" lengthAdjust="spacingAndGlyphs" >0,37</text>
<text x="1241" y="805.3199999999999" font-size="18" fill="#f4f4f4" text-anchor="start" textLength="37.5" lengthAdjust="spacingAndGlyphs" >0,41</text>
<text x="1314.5" y="805.3199999999999" font-size="18" fill="#f4f4f4" text-anchor="start" textLength="37.5" lengthAdjust="spacingAndGlyphs" >0,45</text>
<text x="1388.3" y="805.3199999999999" font-size="18" fill="#f4f4f4" text-anchor="start" textLength="37.5" lengthAdjust="spacingAndGlyphs" >0,49</text>
<text x="1462" y="805.3199999999999" font-size="18" fill="#f4f4f4" text-anchor="start" textLength="37.5" lengthAdjust="spacingAndGlyphs" >0,54</text>
<rect x="1020" y="812.65" width="510" height="29.4" fill="#808080" />
<rect x="1003" y="812.65" width="17" height="14.7" fill="#262626" />
<rect x="1003" y="827.35" width="17" height="14.7" fill="#1e1e1e" />
<text x="1025.4" y="834.65" font-size="18" fill="#f4f4f4" text-anchor="start" textLength="74.7" lengthAdjust="spacingAndGlyphs" >Target Y</text>
<text x="1168" y="834.65" font-size="18" fill="#f4f4f4" text-anchor="start" textLength="58.9" lengthAdjust="spacingAndGlyphs" >190,93</text>
<text x="1241" y="834.65" font-size="18" fill="#f4f4f4" text-anchor="start" textLength="58.9" lengthAdjust="spacingAndGlyphs" >187,53</text>
<text x="1314.5" y="834.65" font-size="18" fill="#f4f4f4" text-anchor="start" textLength="58.9" lengthAdjust="spacingAndGlyphs" >184,69</text>
<text x="1388.3" y="834.65" font-size="18" fill="#f4f4f4" text-anchor="start" textLength="58.9" lengthAdjust="spacingAndGlyphs" >182,35</text>
<text x="1462" y="834.65" font-size="18" fill="#f4f4f4" text-anchor="start" textLength="58.9" lengthAdjust="spacingAndGlyphs" >180,31</text>
</svg>
<svg width="1716" height="885" viewBox="0 0 1716 885">
<defs><clipPath id="fbloc"><path d="M1175.9,586.5 L1175.9,586.5 L1175.8,586.5 L1175.8,586.5 L1175.7,586.6 L1175.6,586.6 L1175.5,586.6 L1175.4,586.6 L1175.3,586.6 L1175.2,586.6 L1175.1,586.6 L1174.9,586.6 L1174.7,586.6 L1174.6,586.6 L1174.4,586.6 L1174.1,586.6 L1173.8,586.4 L1173.4,586.3 L1173.0,586.0 L1172.4,585.7 L1171.8,585.3 L1171.1,584.8 L1170.3,584.3 L1169.3,583.6 L1168.2,582.8 L1167.0,582.0 L1165.5,581.0 L1163.9,579.9 L1162.0,578.6 L1159.9,577.2 L1157.6,575.7 L1155.0,573.8 L1152.0,571.2 L1148.4,567.5 L1144.2,563.1 L1140.0,558.4 L1136.2,553.7 L1133.1,549.5 L1130.4,545.4 L1127.7,541.0 L1124.7,535.7 L1121.3,529.7 L1117.8,523.0 L1114.1,515.6 L1110.1,507.2 L1105.9,498.0 L1101.4,488.0 L1096.8,477.0 L1092.2,465.0 L1087.6,451.9 L1082.9,437.7 L1078.2,422.5 L1073.7,406.5 L1069.1,389.4 L1064.6,371.2 L1060.2,352.4 L1056.3,333.4 L1052.7,314.1 L1049.3,294.4 L1046.4,274.6 L1044.1,255.4 L1042.4,236.6 L1041.2,218.1 L1040.5,200.2 L1040.7,183.2 L1041.6,167.0 L1043.2,151.4 L1045.6,137.0 L1048.6,124.0 L1052.6,112.3 L1057.3,101.9 L1062.7,92.9 L1068.5,85.6 L1074.9,80.0 L1081.8,76.1 L1089.2,73.6 L1096.6,72.1 L1104.3,71.8 L1112.2,72.8 L1120.3,74.6 L1128.3,76.8 L1136.4,79.3 L1144.5,82.4 L1152.6,85.9 L1160.5,89.4 L1168.3,92.9 L1175.9,96.6 L1183.4,100.5 L1190.9,104.5 L1198.3,108.5 L1205.6,112.7 L1212.8,117.0 L1220.0,121.4 L1227.3,125.9 L1234.5,130.5 L1241.6,135.2 L1248.8,140.0 L1255.9,144.9 L1263.1,149.8 L1270.2,154.8 L1277.3,159.9 L1284.3,165.0 L1291.4,170.2 L1298.5,175.4 L1305.6,180.6 L1312.7,185.9 L1319.8,191.2 L1327.0,196.6 L1334.1,202.0 L1341.2,207.4 L1348.2,212.8 L1355.3,218.2 L1362.4,223.6 L1369.4,229.1 L1376.5,234.5 L1383.5,239.9 L1390.5,245.3 L1397.4,250.7 L1404.4,256.1 L1411.2,261.4 L1418.1,266.7 L1424.8,272.0 L1431.6,277.2 L1438.2,282.4 L1444.8,287.6 L1451.4,292.7 L1457.8,297.7 L1464.2,302.7 L1470.5,307.6 L1476.7,312.4 L1482.8,317.1 L1488.8,321.8 L1494.7,326.3 L1500.4,330.8 L1506.0,335.1 L1511.4,339.4 L1516.7,343.5 L1521.7,347.4 L1526.6,351.2 L1531.3,354.8 L1535.8,358.4 L1540.3,361.8 L1544.6,365.2 L1548.7,368.4 L1552.7,371.5 L1556.4,374.4 L1560.0,377.1 L1563.4,379.8 L1566.6,382.3 L1569.7,384.7 L1572.6,387.0 L1575.4,389.1 L1578.0,391.2 L1580.5,393.1 L1582.8,394.9 L1585.0,396.6 L1587.1,398.2 L1589.0,399.8 L1590.9,401.2 L1592.6,402.5 L1594.3,403.8 L1595.9,405.0 L1597.3,406.2 L1598.7,407.3 L1600.1,408.4 L1601.4,409.4 L1602.6,410.3 L1603.8,411.3 L1604.9,412.1 L1606.0,412.9 L1606.9,413.7 L1607.8,414.4 L1608.9,415.2 L1610.3,416.3 L1611.7,417.4 L1613.2,418.6 L1614.5,419.5 L1615.4,420.3 L1616.2,420.9 L1616.9,421.4 L1617.7,422.0 L1618.6,422.8 L1619.7,423.6 L1620.7,424.4 L1621.4,424.9Z"/></clipPath><clipPath id="fbtri"><path d="M1577.9,391.0 L1248.2,161.3 L1156.8,552.4Z"/></clipPath><clipPath id="fbins"><rect x="1516" y="69" width="189" height="188"/></clipPath></defs>
<g clip-path="url(#fbloc)">
<path fill="#090" d="M1074 68h12v12h-12zM1086 68h12v12h-12zM1098 68h12v12h-12zM1110 68h12v12h-12zM1122 68h12v12h-12zM1134 68h12v12h-12zM1074 80h12v12h-12zM1086 80h12v12h-12zM1098 80h12v12h-12zM1110 80h12v12h-12zM1122 80h12v12h-12zM1134 80h12v12h-12zM1146 80h12v12h-12zM1158 80h12v12h-12zM1098 92h12v12h-12zM1110 92h12v12h-12zM1122 92h12v12h-12zM1134 92h12v12h-12zM1146 92h12v12h-12zM1158 92h12v12h-12zM1170 92h12v12h-12zM1182 92h12v12h-12zM1110 104h12v12h-12zM1122 104h12v12h-12zM1134 104h12v12h-12zM1146 104h12v12h-12zM1158 104h12v12h-12zM1170 104h12v12h-12zM1182 104h12v12h-12zM1194 104h12v12h-12zM1206 104h12v12h-12zM1134 116h12v12h-12zM1146 116h12v12h-12zM1158 116h12v12h-12zM1170 116h12v12h-12zM1182 116h12v12h-12zM1194 116h12v12h-12zM1206 116h12v12h-12zM1218 116h12v12h-12zM1230 116h12v12h-12zM1158 128h12v12h-12zM1170 128h12v12h-12zM1182 128h12v12h-12zM1194 128h12v12h-12zM1206 128h12v12h-12zM1218 128h12v12h-12zM1230 128h12v12h-12zM1242 128h12v12h-12zM1170 140h12v12h-12zM1182 140h12v12h-12zM1194 140h12v12h-12zM1206 140h12v12h-12zM1218 140h12v12h-12zM1230 140h12v12h-12zM1242 140h12v12h-12zM1254 140h12v12h-12zM1194 152h12v12h-12zM1206 152h12v12h-12zM1218 152h12v12h-12zM1230 152h12v12h-12zM1242 152h12v12h-12zM1254 152h12v12h-12zM1218 164h12v12h-12zM1230 164h12v12h-12zM1242 164h12v12h-12zM1254 164h12v12h-12zM1230 176h12v12h-12zM1242 176h12v12h-12z"/>
<path fill="#091" d="M1062 80h12v12h-12zM1050 92h12v12h-12zM1062 92h12v12h-12zM1074 92h12v12h-12zM1086 92h12v12h-12zM1050 104h12v12h-12zM1062 104h12v12h-12zM1074 104h12v12h-12zM1086 104h12v12h-12zM1098 104h12v12h-12zM1038 116h12v12h-12zM1050 116h12v12h-12zM1062 116h12v12h-12zM1074 116h12v12h-12zM1086 116h12v12h-12zM1098 116h12v12h-12zM1110 116h12v12h-12zM1122 116h12v12h-12zM1038 128h12v12h-12zM1050 128h12v12h-12zM1062 128h12v12h-12zM1074 128h12v12h-12zM1086 128h12v12h-12zM1098 128h12v12h-12zM1110 128h12v12h-12zM1122 128h12v12h-12zM1134 128h12v12h-12zM1146 128h12v12h-12zM1050 140h12v12h-12zM1062 140h12v12h-12zM1074 140h12v12h-12zM1086 140h12v12h-12zM1098 140h12v12h-12zM1110 140h12v12h-12zM1122 140h12v12h-12zM1134 140h12v12h-12zM1146 140h12v12h-12zM1158 140h12v12h-12zM1074 152h12v12h-12zM1086 152h12v12h-12zM1098 152h12v12h-12zM1110 152h12v12h-12zM1122 152h12v12h-12zM1134 152h12v12h-12zM1146 152h12v12h-12zM1158 152h12v12h-12zM1170 152h12v12h-12zM1182 152h12v12h-12zM1098 164h12v12h-12zM1110 164h12v12h-12zM1122 164h12v12h-12zM1134 164h12v12h-12zM1146 164h12v12h-12zM1158 164h12v12h-12zM1170 164h12v12h-12zM1182 164h12v12h-12zM1194 164h12v12h-12zM1206 164h12v12h-12zM1122 176h12v12h-12zM1134 176h12v12h-12zM1146 176h12v12h-12zM1158 176h12v12h-12zM1170 176h12v12h-12zM1182 176h12v12h-12zM1194 176h12v12h-12zM1206 176h12v12h-12zM1218 176h12v12h-12zM1146 188h12v12h-12zM1158 188h12v12h-12zM1170 188h12v12h-12zM1182 188h12v12h-12zM1194 188h12v12h-12zM1206 188h12v12h-12zM1218 188h12v12h-12zM1230 188h12v12h-12zM1242 188h12v12h-12zM1170 200h12v12h-12zM1182 200h12v12h-12zM1194 200h12v12h-12zM1206 200h12v12h-12zM1218 200h12v12h-12zM1230 200h12v12h-12zM1242 200h12v12h-12zM1206 212h12v12h-12zM1218 212h12v12h-12zM1230 212h12v12h-12zM1230 224h12v12h-12z"/>
<path fill="#092" d="M1038 140h12v12h-12zM1038 152h12v12h-12zM1050 152h12v12h-12zM1062 152h12v12h-12zM1038 164h12v12h-12zM1050 164h12v12h-12zM1062 164h12v12h-12zM1074 164h12v12h-12zM1086 164h12v12h-12zM1038 176h12v12h-12zM1050 176h12v12h-12zM1062 176h12v12h-12zM1074 176h12v12h-12zM1086 176h12v12h-12zM1098 176h12v12h-12zM1110 176h12v12h-12zM1038 188h12v12h-12zM1050 188h12v12h-12zM1062 188h12v12h-12zM1074 188h12v12h-12zM1086 188h12v12h-12zM1098 188h12v12h-12zM1110 188h12v12h-12zM1122 188h12v12h-12zM1134 188h12v12h-12zM1050 200h12v12h-12zM1062 200h12v12h-12zM1074 200h12v12h-12zM1086 200h12v12h-12zM1098 200h12v12h-12zM1110 200h12v12h-12zM1122 200h12v12h-12zM1134 200h12v12h-12zM1146 200h12v12h-12zM1158 200h12v12h-12zM1086 212h12v12h-12zM1098 212h12v12h-12zM1110 212h12v12h-12zM1122 212h12v12h-12zM1134 212h12v12h-12zM1146 212h12v12h-12zM1158 212h12v12h-12zM1170 212h12v12h-12zM1182 212h12v12h-12zM1194 212h12v12h-12zM1122 224h12v12h-12zM1134 224h12v12h-12zM1146 224h12v12h-12zM1158 224h12v12h-12zM1170 224h12v12h-12zM1182 224h12v12h-12zM1194 224h12v12h-12zM1206 224h12v12h-12zM1218 224h12v12h-12zM1158 236h12v12h-12zM1170 236h12v12h-12zM1182 236h12v12h-12zM1194 236h12v12h-12zM1206 236h12v12h-12zM1218 236h12v12h-12zM1230 236h12v12h-12zM1194 248h12v12h-12zM1206 248h12v12h-12zM1218 248h12v12h-12zM1230 248h12v12h-12zM1218 260h12v12h-12z"/>
<path fill="#190" d="M1266 140h12v12h-12zM1266 152h12v12h-12zM1278 152h12v12h-12zM1266 164h12v12h-12zM1278 164h12v12h-12zM1254 176h12v12h-12zM1266 176h12v12h-12zM1278 176h12v12h-12zM1254 188h12v12h-12zM1266 188h12v12h-12zM1266 200h12v12h-12z"/>
<path fill="#290" d="M1290 164h12v12h-12zM1290 176h12v12h-12zM1302 176h12v12h-12zM1278 188h12v12h-12zM1290 188h12v12h-12zM1278 200h12v12h-12zM1290 200h12v12h-12z"/>
<path fill="#390" d="M1314 176h12v12h-12zM1302 188h12v12h-12zM1314 188h12v12h-12zM1302 200h12v12h-12zM1314 200h12v12h-12zM1290 212h12v12h-12zM1302 212h12v12h-12z"/>
<path fill="#490" d="M1326 188h12v12h-12zM1326 200h12v12h-12zM1314 212h12v12h-12zM1326 212h12v12h-12zM1314 224h12v12h-12z"/>
<path fill="#093" d="M1038 200h12v12h-12zM1038 212h12v12h-12zM1050 212h12v12h-12zM1062 212h12v12h-12zM1074 212h12v12h-12zM1038 224h12v12h-12zM1050 224h12v12h-12zM1062 224h12v12h-12zM1074 224h12v12h-12zM1086 224h12v12h-12zM1098 224h12v12h-12zM1110 224h12v12h-12zM1038 236h12v12h-12zM1050 236h12v12h-12zM1062 236h12v12h-12zM1074 236h12v12h-12zM1086 236h12v12h-12zM1098 236h12v12h-12zM1110 236h12v12h-12zM1122 236h12v12h-12zM1134 236h12v12h-12zM1146 236h12v12h-12zM1074 248h12v12h-12zM1086 248h12v12h-12zM1098 248h12v12h-12zM1110 248h12v12h-12zM1122 248h12v12h-12zM1134 248h12v12h-12zM1146 248h12v12h-12zM1158 248h12v12h-12zM1170 248h12v12h-12zM1182 248h12v12h-12zM1110 260h12v12h-12zM1122 260h12v12h-12zM1134 260h12v12h-12zM1146 260h12v12h-12zM1158 260h12v12h-12zM1170 260h12v12h-12zM1182 260h12v12h-12zM1194 260h12v12h-12zM1206 260h12v12h-12zM1158 272h12v12h-12zM1170 272h12v12h-12zM1182 272h12v12h-12zM1194 272h12v12h-12zM1206 272h12v12h-12zM1218 272h12v12h-12zM1206 284h12v12h-12zM1218 284h12v12h-12z"/>
<path fill="#191" d="M1254 200h12v12h-12zM1242 212h12v12h-12zM1254 212h12v12h-12zM1266 212h12v12h-12zM1242 224h12v12h-12zM1254 224h12v12h-12zM1254 236h12v12h-12z"/>
<path fill="#590" d="M1338 200h12v12h-12zM1338 212h12v12h-12zM1350 212h12v12h-12zM1326 224h12v12h-12zM1338 224h12v12h-12zM1326 236h12v12h-12z"/>
<path fill="#291" d="M1278 212h12v12h-12zM1266 224h12v12h-12zM1278 224h12v12h-12zM1266 236h12v12h-12zM1278 236h12v12h-12z"/>
<path fill="#690" d="M1362 212h12v12h-12zM1350 224h12v12h-12zM1338 236h12v12h-12zM1350 236h12v12h-12z"/>
<path fill="#391" d="M1290 224h12v12h-12zM1302 224h12v12h-12zM1290 236h12v12h-12zM1278 248h12v12h-12zM1290 248h12v12h-12z"/>
<path fill="#790" d="M1362 224h12v12h-12zM1374 224h12v12h-12zM1362 236h12v12h-12zM1350 248h12v12h-12z"/>
<path fill="#192" d="M1242 236h12v12h-12zM1242 248h12v12h-12zM1230 260h12v12h-12zM1242 260h12v12h-12z"/>
<path fill="#491" d="M1302 236h12v12h-12zM1314 236h12v12h-12zM1302 248h12v12h-12zM1302 260h12v12h-12z"/>
<path fill="#890" d="M1374 236h12v12h-12zM1362 248h12v12h-12zM1374 248h12v12h-12z"/>
<path fill="#990" d="M1386 236h12v12h-12zM1386 248h12v12h-12zM1374 260h12v12h-12z"/>
<path fill="#094" d="M1038 248h12v12h-12zM1050 248h12v12h-12zM1062 248h12v12h-12zM1038 260h12v12h-12zM1050 260h12v12h-12zM1062 260h12v12h-12zM1074 260h12v12h-12zM1086 260h12v12h-12zM1098 260h12v12h-12zM1038 272h12v12h-12zM1050 272h12v12h-12zM1062 272h12v12h-12zM1074 272h12v12h-12zM1086 272h12v12h-12zM1098 272h12v12h-12zM1110 272h12v12h-12zM1122 272h12v12h-12zM1134 272h12v12h-12zM1146 272h12v12h-12zM1086 284h12v12h-12zM1098 284h12v12h-12zM1110 284h12v12h-12zM1122 284h12v12h-12zM1134 284h12v12h-12zM1146 284h12v12h-12zM1158 284h12v12h-12zM1170 284h12v12h-12zM1182 284h12v12h-12zM1194 284h12v12h-12zM1134 296h12v12h-12zM1146 296h12v12h-12zM1158 296h12v12h-12zM1170 296h12v12h-12zM1182 296h12v12h-12zM1194 296h12v12h-12zM1206 296h12v12h-12zM1218 296h12v12h-12zM1194 308h12v12h-12zM1206 308h12v12h-12z"/>
<path fill="#292" d="M1254 248h12v12h-12zM1266 248h12v12h-12zM1254 260h12v12h-12zM1266 260h12v12h-12zM1254 272h12v12h-12z"/>
<path fill="#591" d="M1314 248h12v12h-12zM1326 248h12v12h-12zM1314 260h12v12h-12z"/>
<path fill="#691" d="M1338 248h12v12h-12zM1326 260h12v12h-12z"/>
<path fill="#980" d="M1398 248h12v12h-12zM1386 260h12v12h-12z"/>
<path fill="#392" d="M1278 260h12v12h-12zM1266 272h12v12h-12zM1278 272h12v12h-12z"/>
<path fill="#492" d="M1290 260h12v12h-12zM1290 272h12v12h-12zM1290 284h12v12h-12z"/>
<path fill="#791" d="M1338 260h12v12h-12zM1350 260h12v12h-12zM1338 272h12v12h-12z"/>
<path fill="#891" d="M1362 260h12v12h-12zM1350 272h12v12h-12z"/>
<path fill="#970" d="M1398 260h12v12h-12zM1410 260h12v12h-12zM1386 272h12v12h-12zM1398 272h12v12h-12z"/>
<path fill="#960" d="M1422 260h12v12h-12zM1410 272h12v12h-12zM1422 272h12v12h-12zM1398 284h12v12h-12zM1410 284h12v12h-12z"/>
<path fill="#193" d="M1230 272h12v12h-12zM1242 272h12v12h-12zM1230 284h12v12h-12z"/>
<path fill="#592" d="M1302 272h12v12h-12zM1314 272h12v12h-12zM1302 284h12v12h-12z"/>
<path fill="#692" d="M1326 272h12v12h-12zM1314 284h12v12h-12z"/>
<path fill="#991" d="M1362 272h12v12h-12z"/>
<path fill="#981" d="M1374 272h12v12h-12zM1362 284h12v12h-12zM1374 284h12v12h-12z"/>
<path fill="#950" d="M1434 272h12v12h-12zM1422 284h12v12h-12zM1434 284h12v12h-12zM1410 296h12v12h-12zM1422 296h12v12h-12z"/>
<path fill="#095" d="M1038 284h12v12h-12zM1050 284h12v12h-12zM1062 284h12v12h-12zM1074 284h12v12h-12zM1038 296h12v12h-12zM1050 296h12v12h-12zM1062 296h12v12h-12zM1074 296h12v12h-12zM1086 296h12v12h-12zM1098 296h12v12h-12zM1110 296h12v12h-12zM1122 296h12v12h-12zM1062 308h12v12h-12zM1074 308h12v12h-12zM1086 308h12v12h-12zM1098 308h12v12h-12zM1110 308h12v12h-12zM1122 308h12v12h-12zM1134 308h12v12h-12zM1146 308h12v12h-12zM1158 308h12v12h-12zM1170 308h12v12h-12zM1182 308h12v12h-12zM1146 320h12v12h-12zM1158 320h12v12h-12zM1170 320h12v12h-12zM1182 320h12v12h-12zM1194 320h12v12h-12zM1206 320h12v12h-12z"/>
<path fill="#293" d="M1242 284h12v12h-12zM1254 284h12v12h-12zM1242 296h12v12h-12zM1254 296h12v12h-12z"/>
<path fill="#393" d="M1266 284h12v12h-12zM1266 296h12v12h-12z"/>
<path fill="#493" d="M1278 284h12v12h-12zM1278 296h12v12h-12z"/>
<path fill="#792" d="M1326 284h12v12h-12zM1326 296h12v12h-12z"/>
<path fill="#892" d="M1338 284h12v12h-12zM1338 296h12v12h-12z"/>
<path fill="#992" d="M1350 284h12v12h-12zM1350 296h12v12h-12z"/>
<path fill="#971" d="M1386 284h12v12h-12zM1374 296h12v12h-12z"/>
<path fill="#940" d="M1446 284h12v12h-12zM1434 296h12v12h-12zM1446 296h12v12h-12zM1458 296h12v12h-12zM1434 308h12v12h-12zM1446 308h12v12h-12z"/>
<path fill="#194" d="M1230 296h12v12h-12zM1218 308h12v12h-12zM1230 308h12v12h-12z"/>
<path fill="#593" d="M1290 296h12v12h-12zM1290 308h12v12h-12z"/>
<path fill="#693" d="M1302 296h12v12h-12zM1302 308h12v12h-12z"/>
<path fill="#793" d="M1314 296h12v12h-12zM1314 308h12v12h-12z"/>
<path fill="#982" d="M1362 296h12v12h-12zM1350 308h12v12h-12z"/>
<path fill="#961" d="M1386 296h12v12h-12zM1398 296h12v12h-12zM1374 308h12v12h-12zM1386 308h12v12h-12z"/>
<path fill="#930" d="M1470 296h12v12h-12zM1458 308h12v12h-12zM1470 308h12v12h-12zM1482 308h12v12h-12zM1446 320h12v12h-12zM1458 320h12v12h-12zM1470 320h12v12h-12zM1458 332h12v12h-12z"/>
<path fill="#096" d="M1050 308h12v12h-12zM1050 320h12v12h-12zM1062 320h12v12h-12zM1074 320h12v12h-12zM1086 320h12v12h-12zM1098 320h12v12h-12zM1110 320h12v12h-12zM1122 320h12v12h-12zM1134 320h12v12h-12zM1074 332h12v12h-12zM1086 332h12v12h-12zM1098 332h12v12h-12zM1110 332h12v12h-12zM1122 332h12v12h-12zM1134 332h12v12h-12zM1146 332h12v12h-12zM1158 332h12v12h-12zM1170 332h12v12h-12zM1182 332h12v12h-12zM1194 332h12v12h-12zM1206 332h12v12h-12zM1182 344h12v12h-12zM1194 344h12v12h-12z"/>
<path fill="#294" d="M1242 308h12v12h-12z"/>
<path fill="#394" d="M1254 308h12v12h-12zM1254 320h12v12h-12z"/>
<path fill="#494" d="M1266 308h12v12h-12zM1278 308h12v12h-12zM1266 320h12v12h-12z"/>
<path fill="#893" d="M1326 308h12v12h-12z"/>
<path fill="#993" d="M1338 308h12v12h-12z"/>
<path fill="#972" d="M1362 308h12v12h-12z"/>
<path fill="#951" d="M1398 308h12v12h-12zM1410 308h12v12h-12zM1386 320h12v12h-12zM1398 320h12v12h-12z"/>
<path fill="#941" d="M1422 308h12v12h-12zM1410 320h12v12h-12zM1422 320h12v12h-12zM1434 320h12v12h-12zM1398 332h12v12h-12zM1410 332h12v12h-12z"/>
<path fill="#195" d="M1218 320h12v12h-12zM1218 332h12v12h-12z"/>
<path fill="#295" d="M1230 320h12v12h-12zM1242 320h12v12h-12zM1230 332h12v12h-12z"/>
<path fill="#594" d="M1278 320h12v12h-12z"/>
<path fill="#694" d="M1290 320h12v12h-12z"/>
<path fill="#794" d="M1302 320h12v12h-12z"/>
<path fill="#894" d="M1314 320h12v12h-12z"/>
<path fill="#994" d="M1326 320h12v12h-12zM1314 332h12v12h-12z"/>
<path fill="#983" d="M1338 320h12v12h-12z"/>
<path fill="#973" d="M1350 320h12v12h-12zM1338 332h12v12h-12z"/>
<path fill="#962" d="M1362 320h12v12h-12zM1374 320h12v12h-12zM1362 332h12v12h-12z"/>
<path fill="#920" d="M1482 320h12v12h-12zM1494 320h12v12h-12zM1470 332h12v12h-12zM1482 332h12v12h-12zM1494 332h12v12h-12zM1506 332h12v12h-12zM1470 344h12v12h-12zM1482 344h12v12h-12zM1494 344h12v12h-12zM1482 356h12v12h-12z"/>
<path fill="#097" d="M1050 332h12v12h-12zM1062 332h12v12h-12zM1050 344h12v12h-12zM1062 344h12v12h-12zM1074 344h12v12h-12zM1086 344h12v12h-12zM1098 344h12v12h-12zM1110 344h12v12h-12zM1122 344h12v12h-12zM1134 344h12v12h-12zM1146 344h12v12h-12zM1158 344h12v12h-12zM1170 344h12v12h-12zM1134 356h12v12h-12zM1146 356h12v12h-12zM1158 356h12v12h-12zM1170 356h12v12h-12zM1182 356h12v12h-12zM1194 356h12v12h-12z"/>
<path fill="#395" d="M1242 332h12v12h-12z"/>
<path fill="#495" d="M1254 332h12v12h-12zM1266 332h12v12h-12z"/>
<path fill="#595" d="M1278 332h12v12h-12z"/>
<path fill="#695" d="M1290 332h12v12h-12z"/>
<path fill="#895" d="M1302 332h12v12h-12zM1302 344h12v12h-12z"/>
<path fill="#984" d="M1326 332h12v12h-12z"/>
<path fill="#963" d="M1350 332h12v12h-12zM1350 344h12v12h-12z"/>
<path fill="#952" d="M1374 332h12v12h-12zM1386 332h12v12h-12zM1374 344h12v12h-12z"/>
<path fill="#931" d="M1422 332h12v12h-12zM1434 332h12v12h-12zM1446 332h12v12h-12zM1410 344h12v12h-12zM1422 344h12v12h-12zM1434 344h12v12h-12zM1422 356h12v12h-12z"/>
<path fill="#196" d="M1206 344h12v12h-12zM1218 344h12v12h-12z"/>
<path fill="#296" d="M1230 344h12v12h-12z"/>
<path fill="#396" d="M1242 344h12v12h-12z"/>
<path fill="#496" d="M1254 344h12v12h-12z"/>
<path fill="#596" d="M1266 344h12v12h-12z"/>
<path fill="#696" d="M1278 344h12v12h-12z"/>
<path fill="#796" d="M1290 344h12v12h-12z"/>
<path fill="#985" d="M1314 344h12v12h-12z"/>
<path fill="#974" d="M1326 344h12v12h-12zM1326 356h12v12h-12z"/>
<path fill="#964" d="M1338 344h12v12h-12zM1338 356h12v12h-12z"/>
<path fill="#953" d="M1362 344h12v12h-12zM1350 356h12v12h-12zM1362 356h12v12h-12z"/>
<path fill="#942" d="M1386 344h12v12h-12zM1398 344h12v12h-12zM1386 356h12v12h-12z"/>
<path fill="#921" d="M1446 344h12v12h-12zM1458 344h12v12h-12zM1434 356h12v12h-12zM1446 356h12v12h-12zM1458 356h12v12h-12zM1470 356h12v12h-12zM1434 368h12v12h-12zM1446 368h12v12h-12zM1458 368h12v12h-12z"/>
<path fill="#910" d="M1506 344h12v12h-12zM1518 344h12v12h-12zM1530 344h12v12h-12zM1494 356h12v12h-12zM1506 356h12v12h-12zM1518 356h12v12h-12zM1530 356h12v12h-12zM1542 356h12v12h-12zM1506 368h12v12h-12zM1518 368h12v12h-12zM1530 368h12v12h-12zM1542 368h12v12h-12zM1518 380h12v12h-12z"/>
<path fill="#098" d="M1050 356h12v12h-12zM1062 356h12v12h-12zM1074 356h12v12h-12zM1086 356h12v12h-12zM1098 356h12v12h-12zM1110 356h12v12h-12zM1122 356h12v12h-12zM1074 368h12v12h-12zM1086 368h12v12h-12zM1098 368h12v12h-12zM1110 368h12v12h-12zM1122 368h12v12h-12zM1134 368h12v12h-12zM1146 368h12v12h-12zM1158 368h12v12h-12zM1170 368h12v12h-12zM1182 368h12v12h-12zM1194 368h12v12h-12z"/>
<path fill="#197" d="M1206 356h12v12h-12z"/>
<path fill="#297" d="M1218 356h12v12h-12z"/>
<path fill="#397" d="M1230 356h12v12h-12z"/>
<path fill="#497" d="M1242 356h12v12h-12z"/>
<path fill="#597" d="M1254 356h12v12h-12z"/>
<path fill="#697" d="M1266 356h12v12h-12z"/>
<path fill="#797" d="M1278 356h12v12h-12z"/>
<path fill="#897" d="M1290 356h12v12h-12z"/>
<path fill="#996" d="M1302 356h12v12h-12z"/>
<path fill="#975" d="M1314 356h12v12h-12z"/>
<path fill="#943" d="M1374 356h12v12h-12zM1362 368h12v12h-12zM1374 368h12v12h-12z"/>
<path fill="#932" d="M1398 356h12v12h-12zM1410 356h12v12h-12zM1386 368h12v12h-12zM1398 368h12v12h-12zM1410 368h12v12h-12z"/>
<path fill="#099" d="M1062 368h12v12h-12zM1062 380h12v12h-12zM1074 380h12v12h-12zM1086 380h12v12h-12zM1098 380h12v12h-12zM1110 380h12v12h-12zM1122 380h12v12h-12zM1134 380h12v12h-12zM1146 380h12v12h-12zM1158 380h12v12h-12zM1170 380h12v12h-12zM1182 380h12v12h-12zM1194 380h12v12h-12z"/>
<path fill="#198" d="M1206 368h12v12h-12z"/>
<path fill="#298" d="M1218 368h12v12h-12z"/>
<path fill="#398" d="M1230 368h12v12h-12z"/>
<path fill="#498" d="M1242 368h12v12h-12z"/>
<path fill="#598" d="M1254 368h12v12h-12z"/>
<path fill="#698" d="M1266 368h12v12h-12z"/>
<path fill="#898" d="M1278 368h12v12h-12z"/>
<path fill="#998" d="M1290 368h12v12h-12z"/>
<path fill="#986" d="M1302 368h12v12h-12z"/>
<path fill="#976" d="M1314 368h12v12h-12z"/>
<path fill="#965" d="M1326 368h12v12h-12z"/>
<path fill="#954" d="M1338 368h12v12h-12z"/>
<path fill="#944" d="M1350 368h12v12h-12zM1338 380h12v12h-12zM1350 380h12v12h-12z"/>
<path fill="#922" d="M1422 368h12v12h-12zM1398 380h12v12h-12zM1410 380h12v12h-12zM1422 380h12v12h-12zM1434 380h12v12h-12zM1398 392h12v12h-12zM1410 392h12v12h-12z"/>
<path fill="#911" d="M1470 368h12v12h-12zM1482 368h12v12h-12zM1494 368h12v12h-12zM1446 380h12v12h-12zM1458 380h12v12h-12zM1470 380h12v12h-12zM1482 380h12v12h-12zM1494 380h12v12h-12zM1506 380h12v12h-12zM1458 392h12v12h-12zM1470 392h12v12h-12zM1482 392h12v12h-12zM1494 392h12v12h-12zM1458 404h12v12h-12z"/>
<path fill="#900" d="M1554 368h12v12h-12zM1530 380h12v12h-12zM1542 380h12v12h-12zM1554 380h12v12h-12zM1566 380h12v12h-12zM1578 380h12v12h-12zM1530 392h12v12h-12zM1542 392h12v12h-12zM1554 392h12v12h-12zM1566 392h12v12h-12zM1578 392h12v12h-12zM1590 392h12v12h-12zM1542 404h12v12h-12zM1554 404h12v12h-12zM1566 404h12v12h-12zM1578 404h12v12h-12zM1590 404h12v12h-12zM1602 404h12v12h-12zM1554 416h12v12h-12zM1566 416h12v12h-12zM1578 416h12v12h-12zM1590 416h12v12h-12zM1602 416h12v12h-12zM1614 416h12v12h-12zM1578 428h12v12h-12zM1590 428h12v12h-12zM1602 428h12v12h-12z"/>
<path fill="#199" d="M1206 380h12v12h-12z"/>
<path fill="#299" d="M1218 380h12v12h-12z"/>
<path fill="#399" d="M1230 380h12v12h-12z"/>
<path fill="#599" d="M1242 380h12v12h-12z"/>
<path fill="#699" d="M1254 380h12v12h-12z"/>
<path fill="#799" d="M1266 380h12v12h-12z"/>
<path fill="#999" d="M1278 380h12v12h-12z"/>
<path fill="#988" d="M1290 380h12v12h-12z"/>
<path fill="#977" d="M1302 380h12v12h-12z"/>
<path fill="#966" d="M1314 380h12v12h-12z"/>
<path fill="#955" d="M1326 380h12v12h-12z"/>
<path fill="#933" d="M1362 380h12v12h-12zM1374 380h12v12h-12zM1386 380h12v12h-12zM1374 392h12v12h-12z"/>
<path fill="#089" d="M1062 392h12v12h-12zM1074 392h12v12h-12zM1086 392h12v12h-12zM1098 392h12v12h-12zM1110 392h12v12h-12zM1122 392h12v12h-12zM1134 392h12v12h-12zM1146 392h12v12h-12zM1158 392h12v12h-12zM1170 392h12v12h-12zM1182 392h12v12h-12z"/>
<path fill="#189" d="M1194 392h12v12h-12zM1206 392h12v12h-12z"/>
<path fill="#289" d="M1218 392h12v12h-12z"/>
<path fill="#389" d="M1230 392h12v12h-12z"/>
<path fill="#589" d="M1242 392h12v12h-12z"/>
<path fill="#689" d="M1254 392h12v12h-12z"/>
<path fill="#789" d="M1266 392h12v12h-12z"/>
<path fill="#889" d="M1278 392h12v12h-12z"/>
<path fill="#978" d="M1290 392h12v12h-12z"/>
<path fill="#967" d="M1302 392h12v12h-12z"/>
<path fill="#956" d="M1314 392h12v12h-12z"/>
<path fill="#945" d="M1326 392h12v12h-12zM1338 392h12v12h-12z"/>
<path fill="#934" d="M1350 392h12v12h-12zM1362 392h12v12h-12zM1350 404h12v12h-12z"/>
<path fill="#923" d="M1386 392h12v12h-12zM1374 404h12v12h-12zM1386 404h12v12h-12zM1398 404h12v12h-12z"/>
<path fill="#912" d="M1422 392h12v12h-12zM1434 392h12v12h-12zM1446 392h12v12h-12zM1410 404h12v12h-12zM1422 404h12v12h-12zM1434 404h12v12h-12zM1446 404h12v12h-12zM1422 416h12v12h-12zM1434 416h12v12h-12z"/>
<path fill="#901" d="M1506 392h12v12h-12zM1518 392h12v12h-12zM1470 404h12v12h-12zM1482 404h12v12h-12zM1494 404h12v12h-12zM1506 404h12v12h-12zM1518 404h12v12h-12zM1530 404h12v12h-12zM1470 416h12v12h-12zM1482 416h12v12h-12zM1494 416h12v12h-12zM1506 416h12v12h-12zM1518 416h12v12h-12zM1530 416h12v12h-12zM1542 416h12v12h-12zM1482 428h12v12h-12zM1494 428h12v12h-12zM1506 428h12v12h-12zM1518 428h12v12h-12zM1530 428h12v12h-12zM1542 428h12v12h-12zM1554 428h12v12h-12zM1566 428h12v12h-12zM1494 440h12v12h-12zM1506 440h12v12h-12zM1518 440h12v12h-12zM1530 440h12v12h-12zM1542 440h12v12h-12zM1554 440h12v12h-12zM1566 440h12v12h-12zM1578 440h12v12h-12zM1506 452h12v12h-12zM1518 452h12v12h-12zM1530 452h12v12h-12zM1542 452h12v12h-12z"/>
<path fill="#079" d="M1062 404h12v12h-12zM1074 404h12v12h-12zM1086 404h12v12h-12zM1098 404h12v12h-12zM1110 404h12v12h-12zM1122 404h12v12h-12zM1134 404h12v12h-12zM1146 404h12v12h-12zM1158 404h12v12h-12zM1170 404h12v12h-12zM1182 404h12v12h-12z"/>
<path fill="#179" d="M1194 404h12v12h-12z"/>
<path fill="#279" d="M1206 404h12v12h-12z"/>
<path fill="#379" d="M1218 404h12v12h-12z"/>
<path fill="#479" d="M1230 404h12v12h-12z"/>
<path fill="#579" d="M1242 404h12v12h-12z"/>
<path fill="#669" d="M1254 404h12v12h-12z"/>
<path fill="#769" d="M1266 404h12v12h-12z"/>
<path fill="#869" d="M1278 404h12v12h-12z"/>
<path fill="#968" d="M1290 404h12v12h-12z"/>
<path fill="#957" d="M1302 404h12v12h-12z"/>
<path fill="#946" d="M1314 404h12v12h-12zM1326 404h12v12h-12z"/>
<path fill="#935" d="M1338 404h12v12h-12zM1338 416h12v12h-12z"/>
<path fill="#924" d="M1362 404h12v12h-12zM1362 416h12v12h-12zM1374 416h12v12h-12z"/>
<path fill="#069" d="M1074 416h12v12h-12zM1086 416h12v12h-12zM1098 416h12v12h-12zM1110 416h12v12h-12zM1122 416h12v12h-12zM1134 416h12v12h-12zM1146 416h12v12h-12zM1158 416h12v12h-12zM1170 416h12v12h-12zM1182 416h12v12h-12zM1074 428h12v12h-12zM1086 428h12v12h-12zM1098 428h12v12h-12zM1110 428h12v12h-12zM1122 428h12v12h-12z"/>
<path fill="#169" d="M1194 416h12v12h-12z"/>
<path fill="#269" d="M1206 416h12v12h-12z"/>
<path fill="#369" d="M1218 416h12v12h-12z"/>
<path fill="#469" d="M1230 416h12v12h-12z"/>
<path fill="#569" d="M1242 416h12v12h-12z"/>
<path fill="#659" d="M1254 416h12v12h-12zM1254 428h12v12h-12z"/>
<path fill="#759" d="M1266 416h12v12h-12z"/>
<path fill="#859" d="M1278 416h12v12h-12z"/>
<path fill="#959" d="M1290 416h12v12h-12z"/>
<path fill="#947" d="M1302 416h12v12h-12zM1314 416h12v12h-12z"/>
<path fill="#936" d="M1326 416h12v12h-12z"/>
<path fill="#925" d="M1350 416h12v12h-12zM1338 428h12v12h-12zM1350 428h12v12h-12z"/>
<path fill="#913" d="M1386 416h12v12h-12zM1398 416h12v12h-12zM1410 416h12v12h-12zM1386 428h12v12h-12zM1398 428h12v12h-12zM1410 428h12v12h-12z"/>
<path fill="#902" d="M1446 416h12v12h-12zM1458 416h12v12h-12zM1422 428h12v12h-12zM1434 428h12v12h-12zM1446 428h12v12h-12zM1458 428h12v12h-12zM1470 428h12v12h-12zM1434 440h12v12h-12zM1446 440h12v12h-12zM1458 440h12v12h-12zM1470 440h12v12h-12zM1482 440h12v12h-12zM1446 452h12v12h-12zM1458 452h12v12h-12zM1470 452h12v12h-12zM1482 452h12v12h-12zM1494 452h12v12h-12zM1446 464h12v12h-12zM1458 464h12v12h-12zM1470 464h12v12h-12zM1482 464h12v12h-12zM1494 464h12v12h-12zM1506 464h12v12h-12zM1458 476h12v12h-12zM1470 476h12v12h-12z"/>
<path fill="#059" d="M1134 428h12v12h-12zM1146 428h12v12h-12zM1158 428h12v12h-12zM1170 428h12v12h-12zM1182 428h12v12h-12zM1074 440h12v12h-12zM1086 440h12v12h-12zM1098 440h12v12h-12zM1110 440h12v12h-12zM1122 440h12v12h-12zM1134 440h12v12h-12zM1146 440h12v12h-12zM1158 440h12v12h-12z"/>
<path fill="#159" d="M1194 428h12v12h-12z"/>
<path fill="#259" d="M1206 428h12v12h-12z"/>
<path fill="#359" d="M1218 428h12v12h-12z"/>
<path fill="#459" d="M1230 428h12v12h-12z"/>
<path fill="#559" d="M1242 428h12v12h-12z"/>
<path fill="#749" d="M1266 428h12v12h-12zM1266 440h12v12h-12z"/>
<path fill="#849" d="M1278 428h12v12h-12z"/>
<path fill="#949" d="M1290 428h12v12h-12z"/>
<path fill="#938" d="M1302 428h12v12h-12zM1302 440h12v12h-12z"/>
<path fill="#937" d="M1314 428h12v12h-12z"/>
<path fill="#926" d="M1326 428h12v12h-12zM1326 440h12v12h-12z"/>
<path fill="#914" d="M1362 428h12v12h-12zM1374 428h12v12h-12zM1362 440h12v12h-12zM1374 440h12v12h-12zM1386 440h12v12h-12z"/>
<path fill="#049" d="M1170 440h12v12h-12zM1182 440h12v12h-12zM1086 452h12v12h-12zM1098 452h12v12h-12zM1110 452h12v12h-12zM1122 452h12v12h-12zM1134 452h12v12h-12zM1146 452h12v12h-12zM1158 452h12v12h-12zM1170 452h12v12h-12zM1086 464h12v12h-12zM1098 464h12v12h-12zM1110 464h12v12h-12zM1122 464h12v12h-12zM1134 464h12v12h-12z"/>
<path fill="#149" d="M1194 440h12v12h-12zM1182 452h12v12h-12zM1194 452h12v12h-12z"/>
<path fill="#249" d="M1206 440h12v12h-12z"/>
<path fill="#349" d="M1218 440h12v12h-12z"/>
<path fill="#449" d="M1230 440h12v12h-12z"/>
<path fill="#549" d="M1242 440h12v12h-12z"/>
<path fill="#649" d="M1254 440h12v12h-12z"/>
<path fill="#839" d="M1278 440h12v12h-12zM1278 452h12v12h-12z"/>
<path fill="#939" d="M1290 440h12v12h-12z"/>
<path fill="#927" d="M1314 440h12v12h-12zM1314 452h12v12h-12z"/>
<path fill="#916" d="M1338 440h12v12h-12zM1326 452h12v12h-12zM1338 452h12v12h-12z"/>
<path fill="#915" d="M1350 440h12v12h-12zM1350 452h12v12h-12z"/>
<path fill="#903" d="M1398 440h12v12h-12zM1410 440h12v12h-12zM1422 440h12v12h-12zM1398 452h12v12h-12zM1410 452h12v12h-12zM1422 452h12v12h-12zM1434 452h12v12h-12zM1410 464h12v12h-12zM1422 464h12v12h-12zM1434 464h12v12h-12zM1410 476h12v12h-12zM1422 476h12v12h-12zM1434 476h12v12h-12zM1446 476h12v12h-12zM1422 488h12v12h-12zM1434 488h12v12h-12zM1446 488h12v12h-12z"/>
<path fill="#239" d="M1206 452h12v12h-12zM1206 464h12v12h-12z"/>
<path fill="#339" d="M1218 452h12v12h-12zM1218 464h12v12h-12z"/>
<path fill="#439" d="M1230 452h12v12h-12z"/>
<path fill="#539" d="M1242 452h12v12h-12z"/>
<path fill="#639" d="M1254 452h12v12h-12z"/>
<path fill="#739" d="M1266 452h12v12h-12z"/>
<path fill="#929" d="M1290 452h12v12h-12zM1290 464h12v12h-12z"/>
<path fill="#928" d="M1302 452h12v12h-12z"/>
<path fill="#905" d="M1362 452h12v12h-12zM1350 464h12v12h-12zM1362 464h12v12h-12zM1362 476h12v12h-12zM1374 476h12v12h-12zM1362 488h12v12h-12zM1374 488h12v12h-12zM1362 500h12v12h-12zM1374 500h12v12h-12zM1374 512h12v12h-12z"/>
<path fill="#904" d="M1374 452h12v12h-12zM1386 452h12v12h-12zM1374 464h12v12h-12zM1386 464h12v12h-12zM1398 464h12v12h-12zM1386 476h12v12h-12zM1398 476h12v12h-12zM1386 488h12v12h-12zM1398 488h12v12h-12zM1410 488h12v12h-12zM1386 500h12v12h-12zM1398 500h12v12h-12zM1410 500h12v12h-12z"/>
<path fill="#039" d="M1146 464h12v12h-12zM1158 464h12v12h-12zM1170 464h12v12h-12zM1086 476h12v12h-12zM1098 476h12v12h-12zM1110 476h12v12h-12zM1122 476h12v12h-12zM1134 476h12v12h-12zM1146 476h12v12h-12zM1158 476h12v12h-12zM1170 476h12v12h-12zM1098 488h12v12h-12zM1110 488h12v12h-12zM1122 488h12v12h-12z"/>
<path fill="#139" d="M1182 464h12v12h-12zM1194 464h12v12h-12z"/>
<path fill="#429" d="M1230 464h12v12h-12zM1230 476h12v12h-12z"/>
<path fill="#529" d="M1242 464h12v12h-12zM1242 476h12v12h-12z"/>
<path fill="#629" d="M1254 464h12v12h-12zM1266 464h12v12h-12z"/>
<path fill="#729" d="M1278 464h12v12h-12z"/>
<path fill="#918" d="M1302 464h12v12h-12z"/>
<path fill="#917" d="M1314 464h12v12h-12zM1326 464h12v12h-12z"/>
<path fill="#906" d="M1338 464h12v12h-12zM1338 476h12v12h-12zM1350 476h12v12h-12zM1338 488h12v12h-12zM1350 488h12v12h-12zM1338 500h12v12h-12zM1350 500h12v12h-12zM1350 512h12v12h-12zM1362 512h12v12h-12z"/>
<path fill="#129" d="M1182 476h12v12h-12zM1194 476h12v12h-12zM1182 488h12v12h-12z"/>
<path fill="#229" d="M1206 476h12v12h-12zM1194 488h12v12h-12zM1206 488h12v12h-12z"/>
<path fill="#329" d="M1218 476h12v12h-12z"/>
<path fill="#519" d="M1254 476h12v12h-12zM1242 488h12v12h-12zM1254 488h12v12h-12zM1242 500h12v12h-12z"/>
<path fill="#619" d="M1266 476h12v12h-12zM1266 488h12v12h-12z"/>
<path fill="#719" d="M1278 476h12v12h-12z"/>
<path fill="#819" d="M1290 476h12v12h-12z"/>
<path fill="#919" d="M1302 476h12v12h-12z"/>
<path fill="#908" d="M1314 476h12v12h-12zM1314 488h12v12h-12zM1314 500h12v12h-12zM1314 512h12v12h-12zM1314 524h12v12h-12zM1326 524h12v12h-12zM1314 536h12v12h-12z"/>
<path fill="#907" d="M1326 476h12v12h-12zM1326 488h12v12h-12zM1326 500h12v12h-12zM1326 512h12v12h-12zM1338 512h12v12h-12zM1338 524h12v12h-12z"/>
<path fill="#029" d="M1134 488h12v12h-12zM1146 488h12v12h-12zM1158 488h12v12h-12zM1170 488h12v12h-12zM1098 500h12v12h-12zM1110 500h12v12h-12zM1122 500h12v12h-12zM1134 500h12v12h-12zM1146 500h12v12h-12zM1158 500h12v12h-12zM1110 512h12v12h-12zM1122 512h12v12h-12z"/>
<path fill="#319" d="M1218 488h12v12h-12zM1218 500h12v12h-12z"/>
<path fill="#419" d="M1230 488h12v12h-12zM1230 500h12v12h-12z"/>
<path fill="#709" d="M1278 488h12v12h-12zM1278 500h12v12h-12zM1278 512h12v12h-12zM1278 524h12v12h-12zM1278 536h12v12h-12zM1278 548h12v12h-12z"/>
<path fill="#809" d="M1290 488h12v12h-12zM1290 500h12v12h-12zM1290 512h12v12h-12zM1290 524h12v12h-12zM1290 536h12v12h-12z"/>
<path fill="#909" d="M1302 488h12v12h-12zM1302 500h12v12h-12zM1302 512h12v12h-12zM1302 524h12v12h-12zM1302 536h12v12h-12z"/>
<path fill="#019" d="M1170 500h12v12h-12zM1134 512h12v12h-12zM1146 512h12v12h-12zM1158 512h12v12h-12zM1110 524h12v12h-12zM1122 524h12v12h-12zM1134 524h12v12h-12zM1146 524h12v12h-12zM1158 524h12v12h-12zM1122 536h12v12h-12zM1134 536h12v12h-12z"/>
<path fill="#119" d="M1182 500h12v12h-12zM1170 512h12v12h-12zM1182 512h12v12h-12zM1170 524h12v12h-12z"/>
<path fill="#219" d="M1194 500h12v12h-12zM1206 500h12v12h-12zM1194 512h12v12h-12zM1206 512h12v12h-12z"/>
<path fill="#509" d="M1254 500h12v12h-12zM1242 512h12v12h-12zM1254 512h12v12h-12zM1242 524h12v12h-12zM1254 524h12v12h-12zM1242 536h12v12h-12zM1254 536h12v12h-12zM1242 548h12v12h-12zM1254 548h12v12h-12zM1242 560h12v12h-12z"/>
<path fill="#609" d="M1266 500h12v12h-12zM1266 512h12v12h-12zM1266 524h12v12h-12zM1266 536h12v12h-12zM1266 548h12v12h-12z"/>
<path fill="#309" d="M1218 512h12v12h-12zM1206 524h12v12h-12zM1218 524h12v12h-12zM1206 536h12v12h-12zM1218 536h12v12h-12zM1206 548h12v12h-12zM1218 548h12v12h-12zM1206 560h12v12h-12zM1218 560h12v12h-12zM1206 572h12v12h-12z"/>
<path fill="#409" d="M1230 512h12v12h-12zM1230 524h12v12h-12zM1230 536h12v12h-12zM1230 548h12v12h-12zM1230 560h12v12h-12z"/>
<path fill="#109" d="M1182 524h12v12h-12zM1170 536h12v12h-12zM1182 536h12v12h-12zM1170 548h12v12h-12zM1182 548h12v12h-12zM1170 560h12v12h-12zM1158 572h12v12h-12zM1170 572h12v12h-12zM1158 584h12v12h-12zM1170 584h12v12h-12z"/>
<path fill="#209" d="M1194 524h12v12h-12zM1194 536h12v12h-12zM1194 548h12v12h-12zM1182 560h12v12h-12zM1194 560h12v12h-12zM1182 572h12v12h-12zM1194 572h12v12h-12zM1182 584h12v12h-12z"/>
<path fill="#009" d="M1146 536h12v12h-12zM1158 536h12v12h-12zM1122 548h12v12h-12zM1134 548h12v12h-12zM1146 548h12v12h-12zM1158 548h12v12h-12zM1134 560h12v12h-12zM1146 560h12v12h-12zM1158 560h12v12h-12zM1146 572h12v12h-12z"/>
</g>
<g clip-path="url(#fbtri)">
<path fill="#0f0" d="M1240 155h10v10h-10zM1250 155h10v10h-10zM1240 165h10v10h-10z"/>
<path fill="#1f0" d="M1250 165h10v10h-10zM1260 165h10v10h-10zM1250 175h10v10h-10zM1260 175h10v10h-10zM1260 185h10v10h-10z"/>
<path fill="#0f1" d="M1240 175h10v10h-10zM1240 185h10v10h-10zM1230 195h10v10h-10zM1240 195h10v10h-10z"/>
<path fill="#2f0" d="M1270 175h10v10h-10zM1280 175h10v10h-10zM1270 185h10v10h-10z"/>
<path fill="#1f1" d="M1250 185h10v10h-10zM1250 195h10v10h-10zM1240 205h10v10h-10zM1250 205h10v10h-10z"/>
<path fill="#3f0" d="M1280 185h10v10h-10zM1290 185h10v10h-10zM1280 195h10v10h-10z"/>
<path fill="#2f1" d="M1260 195h10v10h-10zM1270 195h10v10h-10zM1260 205h10v10h-10zM1260 215h10v10h-10z"/>
<path fill="#4f0" d="M1290 195h10v10h-10zM1300 195h10v10h-10zM1290 205h10v10h-10z"/>
<path fill="#5f0" d="M1310 195h10v10h-10zM1300 205h10v10h-10zM1310 205h10v10h-10z"/>
<path fill="#0f2" d="M1230 205h10v10h-10zM1230 215h10v10h-10zM1230 225h10v10h-10z"/>
<path fill="#3f1" d="M1270 205h10v10h-10zM1280 205h10v10h-10zM1270 215h10v10h-10zM1280 215h10v10h-10z"/>
<path fill="#6f0" d="M1320 205h10v10h-10zM1310 215h10v10h-10z"/>
<path fill="#1f2" d="M1240 215h10v10h-10zM1250 215h10v10h-10zM1240 225h10v10h-10z"/>
<path fill="#4f1" d="M1290 215h10v10h-10zM1280 225h10v10h-10z"/>
<path fill="#5f1" d="M1300 215h10v10h-10zM1290 225h10v10h-10zM1300 225h10v10h-10z"/>
<path fill="#7f0" d="M1320 215h10v10h-10zM1330 215h10v10h-10z"/>
<path fill="#2f2" d="M1250 225h10v10h-10zM1260 225h10v10h-10zM1250 235h10v10h-10z"/>
<path fill="#3f2" d="M1270 225h10v10h-10zM1260 235h10v10h-10zM1270 235h10v10h-10z"/>
<path fill="#6f1" d="M1310 225h10v10h-10zM1300 235h10v10h-10z"/>
<path fill="#7f1" d="M1320 225h10v10h-10zM1310 235h10v10h-10zM1320 235h10v10h-10z"/>
<path fill="#8f0" d="M1330 225h10v10h-10z"/>
<path fill="#9f0" d="M1340 225h10v10h-10zM1340 235h10v10h-10z"/>
<path fill="#af0" d="M1350 225h10v10h-10zM1350 235h10v10h-10z"/>
<path fill="#0f3" d="M1220 235h10v10h-10zM1230 235h10v10h-10zM1220 245h10v10h-10z"/>
<path fill="#1f3" d="M1240 235h10v10h-10zM1230 245h10v10h-10zM1240 245h10v10h-10z"/>
<path fill="#4f2" d="M1280 235h10v10h-10zM1270 245h10v10h-10zM1280 245h10v10h-10z"/>
<path fill="#5f2" d="M1290 235h10v10h-10zM1290 245h10v10h-10z"/>
<path fill="#8f1" d="M1330 235h10v10h-10zM1320 245h10v10h-10z"/>
<path fill="#bf0" d="M1360 235h10v10h-10z"/>
<path fill="#2f3" d="M1250 245h10v10h-10zM1240 255h10v10h-10zM1250 255h10v10h-10z"/>
<path fill="#3f3" d="M1260 245h10v10h-10zM1260 255h10v10h-10z"/>
<path fill="#6f2" d="M1300 245h10v10h-10zM1290 255h10v10h-10z"/>
<path fill="#7f2" d="M1310 245h10v10h-10zM1300 255h10v10h-10z"/>
<path fill="#9f1" d="M1330 245h10v10h-10z"/>
<path fill="#af1" d="M1340 245h10v10h-10z"/>
<path fill="#bf1" d="M1350 245h10v10h-10zM1340 255h10v10h-10z"/>
<path fill="#cf0" d="M1360 245h10v10h-10z"/>
<path fill="#df0" d="M1370 245h10v10h-10z"/>
<path fill="#ef0" d="M1380 245h10v10h-10zM1370 255h10v10h-10z"/>
<path fill="#0f4" d="M1220 255h10v10h-10zM1220 265h10v10h-10z"/>
<path fill="#1f4" d="M1230 255h10v10h-10zM1230 265h10v10h-10z"/>
<path fill="#4f3" d="M1270 255h10v10h-10zM1270 265h10v10h-10z"/>
<path fill="#5f3" d="M1280 255h10v10h-10zM1280 265h10v10h-10z"/>
<path fill="#8f2" d="M1310 255h10v10h-10zM1310 265h10v10h-10z"/>
<path fill="#9f2" d="M1320 255h10v10h-10zM1320 265h10v10h-10z"/>
<path fill="#af2" d="M1330 255h10v10h-10zM1330 265h10v10h-10z"/>
<path fill="#cf1" d="M1350 255h10v10h-10z"/>
<path fill="#df1" d="M1360 255h10v10h-10zM1350 265h10v10h-10z"/>
<path fill="#ff0" d="M1380 255h10v10h-10z"/>
<path fill="#fe0" d="M1390 255h10v10h-10z"/>
<path fill="#2f4" d="M1240 265h10v10h-10z"/>
<path fill="#3f4" d="M1250 265h10v10h-10zM1260 265h10v10h-10zM1250 275h10v10h-10z"/>
<path fill="#6f3" d="M1290 265h10v10h-10z"/>
<path fill="#7f3" d="M1300 265h10v10h-10zM1290 275h10v10h-10z"/>
<path fill="#bf2" d="M1340 265h10v10h-10z"/>
<path fill="#ef1" d="M1360 265h10v10h-10z"/>
<path fill="#ff1" d="M1370 265h10v10h-10z"/>
<path fill="#fe1" d="M1380 265h10v10h-10zM1370 275h10v10h-10z"/>
<path fill="#fd0" d="M1390 265h10v10h-10z"/>
<path fill="#fc0" d="M1400 265h10v10h-10z"/>
<path fill="#fb0" d="M1410 265h10v10h-10zM1400 275h10v10h-10z"/>
<path fill="#0f5" d="M1210 275h10v10h-10zM1220 275h10v10h-10z"/>
<path fill="#1f5" d="M1230 275h10v10h-10zM1220 285h10v10h-10zM1230 285h10v10h-10z"/>
<path fill="#2f5" d="M1240 275h10v10h-10zM1240 285h10v10h-10z"/>
<path fill="#4f4" d="M1260 275h10v10h-10z"/>
<path fill="#5f4" d="M1270 275h10v10h-10z"/>
<path fill="#6f4" d="M1280 275h10v10h-10zM1280 285h10v10h-10z"/>
<path fill="#8f3" d="M1300 275h10v10h-10z"/>
<path fill="#9f3" d="M1310 275h10v10h-10z"/>
<path fill="#af3" d="M1320 275h10v10h-10z"/>
<path fill="#bf3" d="M1330 275h10v10h-10zM1320 285h10v10h-10z"/>
<path fill="#cf2" d="M1340 275h10v10h-10z"/>
<path fill="#df2" d="M1350 275h10v10h-10z"/>
<path fill="#ff2" d="M1360 275h10v10h-10z"/>
<path fill="#fd1" d="M1380 275h10v10h-10z"/>
<path fill="#fc1" d="M1390 275h10v10h-10zM1380 285h10v10h-10z"/>
<path fill="#fa0" d="M1410 275h10v10h-10zM1420 275h10v10h-10zM1410 285h10v10h-10z"/>
<path fill="#0f6" d="M1210 285h10v10h-10zM1210 295h10v10h-10z"/>
<path fill="#3f5" d="M1250 285h10v10h-10z"/>
<path fill="#4f5" d="M1260 285h10v10h-10z"/>
<path fill="#5f5" d="M1270 285h10v10h-10zM1260 295h10v10h-10z"/>
<path fill="#7f4" d="M1290 285h10v10h-10z"/>
<path fill="#8f4" d="M1300 285h10v10h-10z"/>
<path fill="#9f4" d="M1310 285h10v10h-10z"/>
<path fill="#cf3" d="M1330 285h10v10h-10z"/>
<path fill="#df3" d="M1340 285h10v10h-10z"/>
<path fill="#ef3" d="M1350 285h10v10h-10z"/>
<path fill="#fe2" d="M1360 285h10v10h-10z"/>
<path fill="#fd2" d="M1370 285h10v10h-10z"/>
<path fill="#fb1" d="M1390 285h10v10h-10z"/>
<path fill="#fa1" d="M1400 285h10v10h-10zM1390 295h10v10h-10zM1400 295h10v10h-10z"/>
<path fill="#f90" d="M1420 285h10v10h-10z"/>
<path fill="#f80" d="M1430 285h10v10h-10zM1440 285h10v10h-10zM1430 295h10v10h-10z"/>
<path fill="#1f6" d="M1220 295h10v10h-10z"/>
<path fill="#2f6" d="M1230 295h10v10h-10z"/>
<path fill="#3f6" d="M1240 295h10v10h-10zM1240 305h10v10h-10z"/>
<path fill="#4f6" d="M1250 295h10v10h-10zM1250 305h10v10h-10z"/>
<path fill="#6f5" d="M1270 295h10v10h-10z"/>
<path fill="#7f5" d="M1280 295h10v10h-10z"/>
<path fill="#8f5" d="M1290 295h10v10h-10zM1290 305h10v10h-10z"/>
<path fill="#9f5" d="M1300 295h10v10h-10z"/>
<path fill="#af4" d="M1310 295h10v10h-10z"/>
<path fill="#bf4" d="M1320 295h10v10h-10z"/>
<path fill="#df4" d="M1330 295h10v10h-10z"/>
<path fill="#ef4" d="M1340 295h10v10h-10z"/>
<path fill="#ff3" d="M1350 295h10v10h-10z"/>
<path fill="#fd3" d="M1360 295h10v10h-10z"/>
<path fill="#fc2" d="M1370 295h10v10h-10z"/>
<path fill="#fb2" d="M1380 295h10v10h-10z"/>
<path fill="#f91" d="M1410 295h10v10h-10zM1400 305h10v10h-10z"/>
<path fill="#f81" d="M1420 295h10v10h-10zM1410 305h10v10h-10zM1420 305h10v10h-10zM1410 315h10v10h-10z"/>
<path fill="#f70" d="M1440 295h10v10h-10zM1450 295h10v10h-10zM1440 305h10v10h-10z"/>
<path fill="#0f7" d="M1210 305h10v10h-10z"/>
<path fill="#1f7" d="M1220 305h10v10h-10z"/>
<path fill="#2f7" d="M1230 305h10v10h-10zM1230 315h10v10h-10z"/>
<path fill="#5f6" d="M1260 305h10v10h-10z"/>
<path fill="#6f6" d="M1270 305h10v10h-10z"/>
<path fill="#7f6" d="M1280 305h10v10h-10z"/>
<path fill="#af5" d="M1300 305h10v10h-10z"/>
<path fill="#bf5" d="M1310 305h10v10h-10z"/>
<path fill="#cf5" d="M1320 305h10v10h-10z"/>
<path fill="#ef5" d="M1330 305h10v10h-10z"/>
<path fill="#ff4" d="M1340 305h10v10h-10z"/>
<path fill="#fe4" d="M1350 305h10v10h-10z"/>
<path fill="#fc3" d="M1360 305h10v10h-10z"/>
<path fill="#fb3" d="M1370 305h10v10h-10zM1360 315h10v10h-10z"/>
<path fill="#fa2" d="M1380 305h10v10h-10zM1390 305h10v10h-10zM1380 315h10v10h-10z"/>
<path fill="#f71" d="M1430 305h10v10h-10zM1420 315h10v10h-10z"/>
<path fill="#f60" d="M1450 305h10v10h-10zM1460 305h10v10h-10zM1450 315h10v10h-10z"/>
<path fill="#0f8" d="M1200 315h10v10h-10zM1210 315h10v10h-10z"/>
<path fill="#1f8" d="M1220 315h10v10h-10z"/>
<path fill="#3f7" d="M1240 315h10v10h-10z"/>
<path fill="#4f7" d="M1250 315h10v10h-10z"/>
<path fill="#6f7" d="M1260 315h10v10h-10z"/>
<path fill="#7f7" d="M1270 315h10v10h-10z"/>
<path fill="#8f6" d="M1280 315h10v10h-10z"/>
<path fill="#9f6" d="M1290 315h10v10h-10z"/>
<path fill="#af6" d="M1300 315h10v10h-10z"/>
<path fill="#cf6" d="M1310 315h10v10h-10z"/>
<path fill="#df6" d="M1320 315h10v10h-10z"/>
<path fill="#ff5" d="M1330 315h10v10h-10z"/>
<path fill="#fe5" d="M1340 315h10v10h-10z"/>
<path fill="#fd4" d="M1350 315h10v10h-10z"/>
<path fill="#fa3" d="M1370 315h10v10h-10zM1370 325h10v10h-10z"/>
<path fill="#f92" d="M1390 315h10v10h-10z"/>
<path fill="#f82" d="M1400 315h10v10h-10zM1390 325h10v10h-10z"/>
<path fill="#f61" d="M1430 315h10v10h-10zM1440 315h10v10h-10zM1420 325h10v10h-10zM1430 325h10v10h-10z"/>
<path fill="#f50" d="M1460 315h10v10h-10zM1470 315h10v10h-10zM1460 325h10v10h-10z"/>
<path fill="#f40" d="M1480 315h10v10h-10zM1470 325h10v10h-10zM1480 325h10v10h-10zM1490 325h10v10h-10zM1480 335h10v10h-10z"/>
<path fill="#0f9" d="M1200 325h10v10h-10z"/>
<path fill="#1f9" d="M1210 325h10v10h-10zM1210 335h10v10h-10z"/>
<path fill="#2f8" d="M1220 325h10v10h-10z"/>
<path fill="#3f8" d="M1230 325h10v10h-10z"/>
<path fill="#4f8" d="M1240 325h10v10h-10z"/>
<path fill="#5f8" d="M1250 325h10v10h-10z"/>
<path fill="#6f8" d="M1260 325h10v10h-10z"/>
<path fill="#7f8" d="M1270 325h10v10h-10z"/>
<path fill="#9f7" d="M1280 325h10v10h-10z"/>
<path fill="#af7" d="M1290 325h10v10h-10z"/>
<path fill="#bf7" d="M1300 325h10v10h-10z"/>
<path fill="#df7" d="M1310 325h10v10h-10z"/>
<path fill="#ef6" d="M1320 325h10v10h-10z"/>
<path fill="#fe6" d="M1330 325h10v10h-10z"/>
<path fill="#fd5" d="M1340 325h10v10h-10z"/>
<path fill="#fc4" d="M1350 325h10v10h-10z"/>
<path fill="#fb4" d="M1360 325h10v10h-10z"/>
<path fill="#f93" d="M1380 325h10v10h-10z"/>
<path fill="#f72" d="M1400 325h10v10h-10zM1410 325h10v10h-10zM1400 335h10v10h-10z"/>
<path fill="#f51" d="M1440 325h10v10h-10zM1450 325h10v10h-10zM1430 335h10v10h-10zM1440 335h10v10h-10zM1450 335h10v10h-10z"/>
<path fill="#0fa" d="M1200 335h10v10h-10z"/>
<path fill="#2f9" d="M1220 335h10v10h-10z"/>
<path fill="#3f9" d="M1230 335h10v10h-10z"/>
<path fill="#4f9" d="M1240 335h10v10h-10z"/>
<path fill="#5f9" d="M1250 335h10v10h-10z"/>
<path fill="#7f9" d="M1260 335h10v10h-10z"/>
<path fill="#8f9" d="M1270 335h10v10h-10z"/>
<path fill="#9f8" d="M1280 335h10v10h-10z"/>
<path fill="#bf8" d="M1290 335h10v10h-10z"/>
<path fill="#cf8" d="M1300 335h10v10h-10z"/>
<path fill="#ef8" d="M1310 335h10v10h-10z"/>
<path fill="#fe7" d="M1320 335h10v10h-10z"/>
<path fill="#fd6" d="M1330 335h10v10h-10z"/>
<path fill="#fc5" d="M1340 335h10v10h-10z"/>
<path fill="#fb5" d="M1350 335h10v10h-10z"/>
<path fill="#fa4" d="M1360 335h10v10h-10z"/>
<path fill="#f94" d="M1370 335h10v10h-10z"/>
<path fill="#f83" d="M1380 335h10v10h-10z"/>
<path fill="#f73" d="M1390 335h10v10h-10zM1390 345h10v10h-10z"/>
<path fill="#f62" d="M1410 335h10v10h-10zM1420 335h10v10h-10zM1410 345h10v10h-10z"/>
<path fill="#f41" d="M1460 335h10v10h-10zM1470 335h10v10h-10zM1440 345h10v10h-10zM1450 345h10v10h-10zM1460 345h10v10h-10zM1450 355h10v10h-10z"/>
<path fill="#f30" d="M1490 335h10v10h-10zM1500 335h10v10h-10zM1510 335h10v10h-10zM1490 345h10v10h-10zM1500 345h10v10h-10z"/>
<path fill="#0fb" d="M1200 345h10v10h-10z"/>
<path fill="#1fa" d="M1210 345h10v10h-10z"/>
<path fill="#2fa" d="M1220 345h10v10h-10z"/>
<path fill="#4fa" d="M1230 345h10v10h-10z"/>
<path fill="#5fa" d="M1240 345h10v10h-10z"/>
<path fill="#6fa" d="M1250 345h10v10h-10z"/>
<path fill="#7fa" d="M1260 345h10v10h-10z"/>
<path fill="#9fa" d="M1270 345h10v10h-10z"/>
<path fill="#af9" d="M1280 345h10v10h-10z"/>
<path fill="#cf9" d="M1290 345h10v10h-10z"/>
<path fill="#ef9" d="M1300 345h10v10h-10z"/>
<path fill="#ff9" d="M1310 345h10v10h-10z"/>
<path fill="#fd8" d="M1320 345h10v10h-10z"/>
<path fill="#fc7" d="M1330 345h10v10h-10z"/>
<path fill="#fb6" d="M1340 345h10v10h-10z"/>
<path fill="#fa5" d="M1350 345h10v10h-10z"/>
<path fill="#f95" d="M1360 345h10v10h-10z"/>
<path fill="#f84" d="M1370 345h10v10h-10z"/>
<path fill="#f74" d="M1380 345h10v10h-10zM1370 355h10v10h-10zM1380 355h10v10h-10z"/>
<path fill="#f63" d="M1400 345h10v10h-10zM1390 355h10v10h-10zM1400 355h10v10h-10z"/>
<path fill="#f52" d="M1420 345h10v10h-10zM1430 345h10v10h-10zM1420 355h10v10h-10z"/>
<path fill="#f31" d="M1470 345h10v10h-10zM1480 345h10v10h-10zM1460 355h10v10h-10zM1470 355h10v10h-10zM1480 355h10v10h-10zM1460 365h10v10h-10zM1470 365h10v10h-10z"/>
<path fill="#f20" d="M1510 345h10v10h-10zM1520 345h10v10h-10zM1500 355h10v10h-10zM1510 355h10v10h-10zM1520 355h10v10h-10zM1530 355h10v10h-10zM1510 365h10v10h-10z"/>
<path fill="#0fc" d="M1200 355h10v10h-10z"/>
<path fill="#2fc" d="M1210 355h10v10h-10z"/>
<path fill="#3fc" d="M1220 355h10v10h-10z"/>
<path fill="#4fb" d="M1230 355h10v10h-10z"/>
<path fill="#5fb" d="M1240 355h10v10h-10z"/>
<path fill="#7fb" d="M1250 355h10v10h-10z"/>
<path fill="#8fb" d="M1260 355h10v10h-10z"/>
<path fill="#afb" d="M1270 355h10v10h-10z"/>
<path fill="#bfb" d="M1280 355h10v10h-10z"/>
<path fill="#dfb" d="M1290 355h10v10h-10z"/>
<path fill="#ffa" d="M1300 355h10v10h-10z"/>
<path fill="#fd9" d="M1310 355h10v10h-10z"/>
<path fill="#fc8" d="M1320 355h10v10h-10z"/>
<path fill="#fb7" d="M1330 355h10v10h-10z"/>
<path fill="#fa6" d="M1340 355h10v10h-10z"/>
<path fill="#f96" d="M1350 355h10v10h-10z"/>
<path fill="#f85" d="M1360 355h10v10h-10z"/>
<path fill="#f53" d="M1410 355h10v10h-10zM1400 365h10v10h-10z"/>
<path fill="#f42" d="M1430 355h10v10h-10zM1440 355h10v10h-10zM1430 365h10v10h-10z"/>
<path fill="#f21" d="M1490 355h10v10h-10zM1480 365h10v10h-10zM1490 365h10v10h-10zM1500 365h10v10h-10zM1470 375h10v10h-10zM1480 375h10v10h-10zM1490 375h10v10h-10z"/>
<path fill="#f10" d="M1540 355h10v10h-10zM1520 365h10v10h-10zM1530 365h10v10h-10zM1540 365h10v10h-10zM1550 365h10v10h-10zM1530 375h10v10h-10zM1540 375h10v10h-10zM1550 375h10v10h-10z"/>
<path fill="#0fd" d="M1190 365h10v10h-10z"/>
<path fill="#1fd" d="M1200 365h10v10h-10z"/>
<path fill="#2fd" d="M1210 365h10v10h-10z"/>
<path fill="#3fd" d="M1220 365h10v10h-10z"/>
<path fill="#5fd" d="M1230 365h10v10h-10z"/>
<path fill="#6fd" d="M1240 365h10v10h-10z"/>
<path fill="#7fd" d="M1250 365h10v10h-10z"/>
<path fill="#9fc" d="M1260 365h10v10h-10z"/>
<path fill="#bfc" d="M1270 365h10v10h-10z"/>
<path fill="#dfc" d="M1280 365h10v10h-10z"/>
<path fill="#efc" d="M1290 365h10v10h-10z"/>
<path fill="#feb" d="M1300 365h10v10h-10z"/>
<path fill="#fca" d="M1310 365h10v10h-10z"/>
<path fill="#fb8" d="M1320 365h10v10h-10z"/>
<path fill="#fa7" d="M1330 365h10v10h-10z"/>
<path fill="#f97" d="M1340 365h10v10h-10z"/>
<path fill="#f86" d="M1350 365h10v10h-10z"/>
<path fill="#f75" d="M1360 365h10v10h-10z"/>
<path fill="#f65" d="M1370 365h10v10h-10zM1370 375h10v10h-10z"/>
<path fill="#f64" d="M1380 365h10v10h-10z"/>
<path fill="#f54" d="M1390 365h10v10h-10zM1380 375h10v10h-10zM1390 375h10v10h-10z"/>
<path fill="#f43" d="M1410 365h10v10h-10zM1420 365h10v10h-10zM1410 375h10v10h-10zM1420 375h10v10h-10z"/>
<path fill="#f32" d="M1440 365h10v10h-10zM1450 365h10v10h-10zM1440 375h10v10h-10zM1450 375h10v10h-10z"/>
<path fill="#0fe" d="M1190 375h10v10h-10z"/>
<path fill="#1fe" d="M1200 375h10v10h-10z"/>
<path fill="#2fe" d="M1210 375h10v10h-10z"/>
<path fill="#4fe" d="M1220 375h10v10h-10z"/>
<path fill="#5fe" d="M1230 375h10v10h-10z"/>
<path fill="#7fe" d="M1240 375h10v10h-10z"/>
<path fill="#8fe" d="M1250 375h10v10h-10z"/>
<path fill="#afe" d="M1260 375h10v10h-10z"/>
<path fill="#cfe" d="M1270 375h10v10h-10z"/>
<path fill="#efe" d="M1280 375h10v10h-10z"/>
<path fill="#fed" d="M1290 375h10v10h-10z"/>
<path fill="#fcb" d="M1300 375h10v10h-10z"/>
<path fill="#fba" d="M1310 375h10v10h-10z"/>
<path fill="#fa9" d="M1320 375h10v10h-10z"/>
<path fill="#f98" d="M1330 375h10v10h-10z"/>
<path fill="#f87" d="M1340 375h10v10h-10z"/>
<path fill="#f76" d="M1350 375h10v10h-10z"/>
<path fill="#f66" d="M1360 375h10v10h-10zM1360 385h10v10h-10z"/>
<path fill="#f44" d="M1400 375h10v10h-10zM1390 385h10v10h-10zM1400 385h10v10h-10z"/>
<path fill="#f33" d="M1430 375h10v10h-10zM1410 385h10v10h-10zM1420 385h10v10h-10zM1430 385h10v10h-10z"/>
<path fill="#f22" d="M1460 375h10v10h-10zM1450 385h10v10h-10zM1460 385h10v10h-10zM1470 385h10v10h-10zM1450 395h10v10h-10z"/>
<path fill="#f11" d="M1500 375h10v10h-10zM1510 375h10v10h-10zM1520 375h10v10h-10zM1490 385h10v10h-10zM1500 385h10v10h-10zM1510 385h10v10h-10zM1520 385h10v10h-10zM1530 385h10v10h-10zM1500 395h10v10h-10zM1510 395h10v10h-10z"/>
<path fill="#f00" d="M1560 375h10v10h-10zM1540 385h10v10h-10zM1550 385h10v10h-10zM1560 385h10v10h-10zM1570 385h10v10h-10zM1550 395h10v10h-10zM1560 395h10v10h-10z"/>
<path fill="#0ef" d="M1190 385h10v10h-10z"/>
<path fill="#1ef" d="M1200 385h10v10h-10z"/>
<path fill="#3ef" d="M1210 385h10v10h-10z"/>
<path fill="#4ef" d="M1220 385h10v10h-10z"/>
<path fill="#6ef" d="M1230 385h10v10h-10z"/>
<path fill="#7ef" d="M1240 385h10v10h-10z"/>
<path fill="#9ef" d="M1250 385h10v10h-10z"/>
<path fill="#bef" d="M1260 385h10v10h-10z"/>
<path fill="#def" d="M1270 385h10v10h-10z"/>
<path fill="#fef" d="M1280 385h10v10h-10z"/>
<path fill="#fdd" d="M1290 385h10v10h-10z"/>
<path fill="#fbc" d="M1300 385h10v10h-10z"/>
<path fill="#faa" d="M1310 385h10v10h-10z"/>
<path fill="#f99" d="M1320 385h10v10h-10z"/>
<path fill="#f88" d="M1330 385h10v10h-10z"/>
<path fill="#f77" d="M1340 385h10v10h-10z"/>
<path fill="#f67" d="M1350 385h10v10h-10z"/>
<path fill="#f55" d="M1370 385h10v10h-10zM1380 385h10v10h-10z"/>
<path fill="#f23" d="M1440 385h10v10h-10zM1420 395h10v10h-10zM1430 395h10v10h-10zM1440 395h10v10h-10zM1430 405h10v10h-10z"/>
<path fill="#f12" d="M1480 385h10v10h-10zM1460 395h10v10h-10zM1470 395h10v10h-10zM1480 395h10v10h-10zM1490 395h10v10h-10zM1460 405h10v10h-10zM1470 405h10v10h-10zM1480 405h10v10h-10z"/>
<path fill="#0df" d="M1190 395h10v10h-10z"/>
<path fill="#2df" d="M1200 395h10v10h-10z"/>
<path fill="#3df" d="M1210 395h10v10h-10z"/>
<path fill="#4df" d="M1220 395h10v10h-10z"/>
<path fill="#6cf" d="M1230 395h10v10h-10z"/>
<path fill="#7cf" d="M1240 395h10v10h-10z"/>
<path fill="#9cf" d="M1250 395h10v10h-10z"/>
<path fill="#bcf" d="M1260 395h10v10h-10z"/>
<path fill="#ccf" d="M1270 395h10v10h-10z"/>
<path fill="#ecf" d="M1280 395h10v10h-10z"/>
<path fill="#fbe" d="M1290 395h10v10h-10z"/>
<path fill="#fac" d="M1300 395h10v10h-10z"/>
<path fill="#f9b" d="M1310 395h10v10h-10z"/>
<path fill="#f8a" d="M1320 395h10v10h-10z"/>
<path fill="#f79" d="M1330 395h10v10h-10z"/>
<path fill="#f68" d="M1340 395h10v10h-10z"/>
<path fill="#f57" d="M1350 395h10v10h-10zM1350 405h10v10h-10z"/>
<path fill="#f56" d="M1360 395h10v10h-10z"/>
<path fill="#f46" d="M1370 395h10v10h-10zM1370 405h10v10h-10z"/>
<path fill="#f45" d="M1380 395h10v10h-10z"/>
<path fill="#f35" d="M1390 395h10v10h-10zM1380 405h10v10h-10zM1390 405h10v10h-10z"/>
<path fill="#f34" d="M1400 395h10v10h-10zM1410 395h10v10h-10zM1400 405h10v10h-10z"/>
<path fill="#f01" d="M1520 395h10v10h-10zM1530 395h10v10h-10zM1540 395h10v10h-10zM1510 405h10v10h-10zM1520 405h10v10h-10zM1530 405h10v10h-10zM1540 405h10v10h-10z"/>
<path fill="#0bf" d="M1180 405h10v10h-10z"/>
<path fill="#1bf" d="M1190 405h10v10h-10z"/>
<path fill="#2bf" d="M1200 405h10v10h-10z"/>
<path fill="#3bf" d="M1210 405h10v10h-10z"/>
<path fill="#4bf" d="M1220 405h10v10h-10z"/>
<path fill="#6bf" d="M1230 405h10v10h-10z"/>
<path fill="#7bf" d="M1240 405h10v10h-10z"/>
<path fill="#9bf" d="M1250 405h10v10h-10z"/>
<path fill="#abf" d="M1260 405h10v10h-10z"/>
<path fill="#cbf" d="M1270 405h10v10h-10z"/>
<path fill="#ebf" d="M1280 405h10v10h-10z"/>
<path fill="#fae" d="M1290 405h10v10h-10z"/>
<path fill="#f9c" d="M1300 405h10v10h-10z"/>
<path fill="#f8b" d="M1310 405h10v10h-10z"/>
<path fill="#f7a" d="M1320 405h10v10h-10z"/>
<path fill="#f69" d="M1330 405h10v10h-10z"/>
<path fill="#f58" d="M1340 405h10v10h-10z"/>
<path fill="#f47" d="M1360 405h10v10h-10z"/>
<path fill="#f24" d="M1410 405h10v10h-10zM1420 405h10v10h-10zM1410 415h10v10h-10z"/>
<path fill="#f13" d="M1440 405h10v10h-10zM1450 405h10v10h-10zM1440 415h10v10h-10zM1450 415h10v10h-10zM1460 415h10v10h-10zM1440 425h10v10h-10z"/>
<path fill="#f02" d="M1490 405h10v10h-10zM1500 405h10v10h-10zM1470 415h10v10h-10zM1480 415h10v10h-10zM1490 415h10v10h-10zM1500 415h10v10h-10zM1510 415h10v10h-10zM1480 425h10v10h-10z"/>
<path fill="#0af" d="M1180 415h10v10h-10z"/>
<path fill="#1af" d="M1190 415h10v10h-10z"/>
<path fill="#2af" d="M1200 415h10v10h-10z"/>
<path fill="#3af" d="M1210 415h10v10h-10z"/>
<path fill="#4af" d="M1220 415h10v10h-10z"/>
<path fill="#6af" d="M1230 415h10v10h-10z"/>
<path fill="#7af" d="M1240 415h10v10h-10z"/>
<path fill="#99f" d="M1250 415h10v10h-10z"/>
<path fill="#a9f" d="M1260 415h10v10h-10z"/>
<path fill="#c9f" d="M1270 415h10v10h-10z"/>
<path fill="#e9f" d="M1280 415h10v10h-10z"/>
<path fill="#f9e" d="M1290 415h10v10h-10z"/>
<path fill="#f7d" d="M1300 415h10v10h-10z"/>
<path fill="#f6b" d="M1310 415h10v10h-10z"/>
<path fill="#f6a" d="M1320 415h10v10h-10z"/>
<path fill="#f59" d="M1330 415h10v10h-10z"/>
<path fill="#f48" d="M1340 415h10v10h-10zM1350 415h10v10h-10z"/>
<path fill="#f37" d="M1360 415h10v10h-10zM1360 425h10v10h-10z"/>
<path fill="#f36" d="M1370 415h10v10h-10zM1380 415h10v10h-10z"/>
<path fill="#f25" d="M1390 415h10v10h-10zM1400 415h10v10h-10zM1390 425h10v10h-10z"/>
<path fill="#f14" d="M1420 415h10v10h-10zM1430 415h10v10h-10zM1420 425h10v10h-10zM1430 425h10v10h-10z"/>
<path fill="#09f" d="M1180 425h10v10h-10z"/>
<path fill="#19f" d="M1190 425h10v10h-10z"/>
<path fill="#29f" d="M1200 425h10v10h-10z"/>
<path fill="#39f" d="M1210 425h10v10h-10z"/>
<path fill="#59f" d="M1220 425h10v10h-10z"/>
<path fill="#68f" d="M1230 425h10v10h-10z"/>
<path fill="#78f" d="M1240 425h10v10h-10z"/>
<path fill="#98f" d="M1250 425h10v10h-10z"/>
<path fill="#a8f" d="M1260 425h10v10h-10z"/>
<path fill="#c8f" d="M1270 425h10v10h-10z"/>
<path fill="#d8f" d="M1280 425h10v10h-10z"/>
<path fill="#f7f" d="M1290 425h10v10h-10z"/>
<path fill="#f6d" d="M1300 425h10v10h-10z"/>
<path fill="#f5c" d="M1310 425h10v10h-10zM1310 435h10v10h-10z"/>
<path fill="#f5b" d="M1320 425h10v10h-10z"/>
<path fill="#f4a" d="M1330 425h10v10h-10z"/>
<path fill="#f49" d="M1340 425h10v10h-10z"/>
<path fill="#f38" d="M1350 425h10v10h-10z"/>
<path fill="#f27" d="M1370 425h10v10h-10zM1360 435h10v10h-10zM1370 435h10v10h-10z"/>
<path fill="#f26" d="M1380 425h10v10h-10z"/>
<path fill="#f15" d="M1400 425h10v10h-10zM1410 425h10v10h-10zM1400 435h10v10h-10zM1410 435h10v10h-10z"/>
<path fill="#f03" d="M1450 425h10v10h-10zM1460 425h10v10h-10zM1470 425h10v10h-10zM1450 435h10v10h-10zM1460 435h10v10h-10z"/>
<path fill="#08f" d="M1180 435h10v10h-10z"/>
<path fill="#18f" d="M1190 435h10v10h-10z"/>
<path fill="#28f" d="M1200 435h10v10h-10z"/>
<path fill="#38f" d="M1210 435h10v10h-10z"/>
<path fill="#57f" d="M1220 435h10v10h-10z"/>
<path fill="#67f" d="M1230 435h10v10h-10z"/>
<path fill="#77f" d="M1240 435h10v10h-10z"/>
<path fill="#97f" d="M1250 435h10v10h-10z"/>
<path fill="#a7f" d="M1260 435h10v10h-10z"/>
<path fill="#c7f" d="M1270 435h10v10h-10z"/>
<path fill="#d6f" d="M1280 435h10v10h-10z"/>
<path fill="#f6f" d="M1290 435h10v10h-10z"/>
<path fill="#f5d" d="M1300 435h10v10h-10z"/>
<path fill="#f4b" d="M1320 435h10v10h-10z"/>
<path fill="#f3a" d="M1330 435h10v10h-10zM1330 445h10v10h-10z"/>
<path fill="#f39" d="M1340 435h10v10h-10z"/>
<path fill="#f28" d="M1350 435h10v10h-10zM1350 445h10v10h-10z"/>
<path fill="#f16" d="M1380 435h10v10h-10zM1390 435h10v10h-10zM1380 445h10v10h-10zM1390 445h10v10h-10z"/>
<path fill="#f04" d="M1420 435h10v10h-10zM1430 435h10v10h-10zM1440 435h10v10h-10zM1430 445h10v10h-10z"/>
<path fill="#07f" d="M1170 445h10v10h-10zM1180 445h10v10h-10z"/>
<path fill="#17f" d="M1190 445h10v10h-10z"/>
<path fill="#37f" d="M1200 445h10v10h-10z"/>
<path fill="#46f" d="M1210 445h10v10h-10z"/>
<path fill="#56f" d="M1220 445h10v10h-10z"/>
<path fill="#66f" d="M1230 445h10v10h-10z"/>
<path fill="#76f" d="M1240 445h10v10h-10z"/>
<path fill="#96f" d="M1250 445h10v10h-10z"/>
<path fill="#a6f" d="M1260 445h10v10h-10z"/>
<path fill="#b5f" d="M1270 445h10v10h-10z"/>
<path fill="#d5f" d="M1280 445h10v10h-10z"/>
<path fill="#f5f" d="M1290 445h10v10h-10z"/>
<path fill="#f4e" d="M1300 445h10v10h-10z"/>
<path fill="#f4c" d="M1310 445h10v10h-10z"/>
<path fill="#f3b" d="M1320 445h10v10h-10z"/>
<path fill="#f29" d="M1340 445h10v10h-10z"/>
<path fill="#f18" d="M1360 445h10v10h-10zM1360 455h10v10h-10z"/>
<path fill="#f17" d="M1370 445h10v10h-10zM1370 455h10v10h-10z"/>
<path fill="#f05" d="M1400 445h10v10h-10zM1410 445h10v10h-10zM1420 445h10v10h-10zM1410 455h10v10h-10z"/>
<path fill="#06f" d="M1170 455h10v10h-10z"/>
<path fill="#16f" d="M1180 455h10v10h-10z"/>
<path fill="#26f" d="M1190 455h10v10h-10z"/>
<path fill="#36f" d="M1200 455h10v10h-10z"/>
<path fill="#45f" d="M1210 455h10v10h-10zM1210 465h10v10h-10z"/>
<path fill="#55f" d="M1220 455h10v10h-10z"/>
<path fill="#65f" d="M1230 455h10v10h-10z"/>
<path fill="#75f" d="M1240 455h10v10h-10z"/>
<path fill="#95f" d="M1250 455h10v10h-10z"/>
<path fill="#a4f" d="M1260 455h10v10h-10z"/>
<path fill="#b4f" d="M1270 455h10v10h-10z"/>
<path fill="#d4f" d="M1280 455h10v10h-10z"/>
<path fill="#e4f" d="M1290 455h10v10h-10z"/>
<path fill="#f3e" d="M1300 455h10v10h-10z"/>
<path fill="#f3d" d="M1310 455h10v10h-10z"/>
<path fill="#f2b" d="M1320 455h10v10h-10z"/>
<path fill="#f2a" d="M1330 455h10v10h-10z"/>
<path fill="#f1a" d="M1340 455h10v10h-10zM1340 465h10v10h-10z"/>
<path fill="#f19" d="M1350 455h10v10h-10z"/>
<path fill="#f07" d="M1380 455h10v10h-10zM1380 465h10v10h-10z"/>
<path fill="#f06" d="M1390 455h10v10h-10zM1400 455h10v10h-10z"/>
<path fill="#05f" d="M1170 465h10v10h-10z"/>
<path fill="#15f" d="M1180 465h10v10h-10z"/>
<path fill="#25f" d="M1190 465h10v10h-10z"/>
<path fill="#35f" d="M1200 465h10v10h-10z"/>
<path fill="#54f" d="M1220 465h10v10h-10z"/>
<path fill="#64f" d="M1230 465h10v10h-10z"/>
<path fill="#74f" d="M1240 465h10v10h-10z"/>
<path fill="#94f" d="M1250 465h10v10h-10z"/>
<path fill="#a3f" d="M1260 465h10v10h-10zM1260 475h10v10h-10z"/>
<path fill="#b3f" d="M1270 465h10v10h-10z"/>
<path fill="#d3f" d="M1280 465h10v10h-10z"/>
<path fill="#e3f" d="M1290 465h10v10h-10z"/>
<path fill="#f2e" d="M1300 465h10v10h-10z"/>
<path fill="#f2d" d="M1310 465h10v10h-10z"/>
<path fill="#f1c" d="M1320 465h10v10h-10zM1320 475h10v10h-10z"/>
<path fill="#f1b" d="M1330 465h10v10h-10z"/>
<path fill="#f09" d="M1350 465h10v10h-10zM1350 475h10v10h-10z"/>
<path fill="#f08" d="M1360 465h10v10h-10zM1370 465h10v10h-10z"/>
<path fill="#04f" d="M1170 475h10v10h-10zM1170 485h10v10h-10z"/>
<path fill="#14f" d="M1180 475h10v10h-10z"/>
<path fill="#24f" d="M1190 475h10v10h-10z"/>
<path fill="#34f" d="M1200 475h10v10h-10z"/>
<path fill="#44f" d="M1210 475h10v10h-10z"/>
<path fill="#53f" d="M1220 475h10v10h-10zM1220 485h10v10h-10z"/>
<path fill="#63f" d="M1230 475h10v10h-10z"/>
<path fill="#73f" d="M1240 475h10v10h-10z"/>
<path fill="#93f" d="M1250 475h10v10h-10z"/>
<path fill="#b2f" d="M1270 475h10v10h-10z"/>
<path fill="#c2f" d="M1280 475h10v10h-10z"/>
<path fill="#e2f" d="M1290 475h10v10h-10z"/>
<path fill="#f1f" d="M1300 475h10v10h-10z"/>
<path fill="#f1d" d="M1310 475h10v10h-10z"/>
<path fill="#f0b" d="M1330 475h10v10h-10zM1330 485h10v10h-10z"/>
<path fill="#f0a" d="M1340 475h10v10h-10z"/>
<path fill="#13f" d="M1180 485h10v10h-10zM1170 495h10v10h-10zM1180 495h10v10h-10z"/>
<path fill="#23f" d="M1190 485h10v10h-10zM1190 495h10v10h-10z"/>
<path fill="#33f" d="M1200 485h10v10h-10z"/>
<path fill="#43f" d="M1210 485h10v10h-10z"/>
<path fill="#62f" d="M1230 485h10v10h-10zM1230 495h10v10h-10z"/>
<path fill="#72f" d="M1240 485h10v10h-10z"/>
<path fill="#82f" d="M1250 485h10v10h-10z"/>
<path fill="#a2f" d="M1260 485h10v10h-10z"/>
<path fill="#b1f" d="M1270 485h10v10h-10zM1270 495h10v10h-10z"/>
<path fill="#c1f" d="M1280 485h10v10h-10z"/>
<path fill="#e1f" d="M1290 485h10v10h-10z"/>
<path fill="#f0f" d="M1300 485h10v10h-10zM1300 495h10v10h-10z"/>
<path fill="#f0d" d="M1310 485h10v10h-10z"/>
<path fill="#f0c" d="M1320 485h10v10h-10z"/>
<path fill="#03f" d="M1160 495h10v10h-10z"/>
<path fill="#32f" d="M1200 495h10v10h-10zM1200 505h10v10h-10z"/>
<path fill="#42f" d="M1210 495h10v10h-10z"/>
<path fill="#52f" d="M1220 495h10v10h-10z"/>
<path fill="#71f" d="M1240 495h10v10h-10zM1240 505h10v10h-10z"/>
<path fill="#81f" d="M1250 495h10v10h-10z"/>
<path fill="#a1f" d="M1260 495h10v10h-10z"/>
<path fill="#c0f" d="M1280 495h10v10h-10zM1280 505h10v10h-10z"/>
<path fill="#e0f" d="M1290 495h10v10h-10z"/>
<path fill="#02f" d="M1160 505h10v10h-10zM1160 515h10v10h-10z"/>
<path fill="#12f" d="M1170 505h10v10h-10zM1170 515h10v10h-10z"/>
<path fill="#22f" d="M1180 505h10v10h-10zM1190 505h10v10h-10z"/>
<path fill="#41f" d="M1210 505h10v10h-10zM1210 515h10v10h-10z"/>
<path fill="#51f" d="M1220 505h10v10h-10z"/>
<path fill="#61f" d="M1230 505h10v10h-10z"/>
<path fill="#80f" d="M1250 505h10v10h-10zM1250 515h10v10h-10z"/>
<path fill="#a0f" d="M1260 505h10v10h-10z"/>
<path fill="#b0f" d="M1270 505h10v10h-10z"/>
<path fill="#21f" d="M1180 515h10v10h-10zM1180 525h10v10h-10z"/>
<path fill="#31f" d="M1190 515h10v10h-10zM1200 515h10v10h-10z"/>
<path fill="#50f" d="M1220 515h10v10h-10zM1220 525h10v10h-10z"/>
<path fill="#60f" d="M1230 515h10v10h-10z"/>
<path fill="#70f" d="M1240 515h10v10h-10z"/>
<path fill="#01f" d="M1160 525h10v10h-10zM1150 535h10v10h-10zM1160 535h10v10h-10z"/>
<path fill="#11f" d="M1170 525h10v10h-10z"/>
<path fill="#30f" d="M1190 525h10v10h-10zM1190 535h10v10h-10z"/>
<path fill="#40f" d="M1200 525h10v10h-10zM1210 525h10v10h-10zM1200 535h10v10h-10z"/>
<path fill="#10f" d="M1170 535h10v10h-10zM1160 545h10v10h-10zM1170 545h10v10h-10z"/>
<path fill="#20f" d="M1180 535h10v10h-10z"/>
<path fill="#00f" d="M1150 545h10v10h-10z"/>
</g>
<rect x="1513" y="67" width="193" height="194" fill="#333333"/>
<defs><clipPath id="fbib"><path d="M1516,79.5 L1705,246.6 L1705,257 L1516,257Z"/></clipPath><clipPath id="fbid"><path d="M1516,69 L1612.4,69 L1705,160.4 L1705,246.6 L1516,79.5Z"/></clipPath></defs>
<rect x="1516" y="69" width="189" height="188" fill="#222222"/>
<g clip-path="url(#fbib)">
<path fill="#cf0" d="M1516 69h8v8h-8zM1524 69h8v8h-8zM1532 69h8v8h-8zM1540 69h8v8h-8zM1548 69h8v8h-8zM1516 77h8v8h-8zM1524 77h8v8h-8zM1532 77h8v8h-8zM1540 77h8v8h-8zM1516 85h8v8h-8zM1524 85h8v8h-8zM1532 85h8v8h-8zM1540 85h8v8h-8zM1516 93h8v8h-8zM1524 93h8v8h-8zM1532 93h8v8h-8zM1516 101h8v8h-8zM1524 101h8v8h-8zM1532 101h8v8h-8zM1516 109h8v8h-8zM1524 109h8v8h-8zM1516 117h8v8h-8zM1524 117h8v8h-8zM1516 125h8v8h-8zM1516 133h8v8h-8z"/>
<path fill="#df0" d="M1556 69h8v8h-8zM1564 69h8v8h-8zM1572 69h8v8h-8zM1580 69h8v8h-8zM1588 69h8v8h-8zM1596 69h8v8h-8zM1548 77h8v8h-8zM1556 77h8v8h-8zM1564 77h8v8h-8zM1572 77h8v8h-8zM1580 77h8v8h-8zM1588 77h8v8h-8zM1548 85h8v8h-8zM1556 85h8v8h-8zM1564 85h8v8h-8zM1572 85h8v8h-8zM1580 85h8v8h-8zM1540 93h8v8h-8zM1548 93h8v8h-8zM1556 93h8v8h-8zM1564 93h8v8h-8zM1572 93h8v8h-8zM1580 93h8v8h-8zM1540 101h8v8h-8zM1548 101h8v8h-8zM1556 101h8v8h-8zM1564 101h8v8h-8zM1572 101h8v8h-8zM1532 109h8v8h-8zM1540 109h8v8h-8zM1548 109h8v8h-8zM1556 109h8v8h-8zM1564 109h8v8h-8zM1572 109h8v8h-8zM1532 117h8v8h-8zM1540 117h8v8h-8zM1548 117h8v8h-8zM1556 117h8v8h-8zM1564 117h8v8h-8zM1524 125h8v8h-8zM1532 125h8v8h-8zM1540 125h8v8h-8zM1548 125h8v8h-8zM1556 125h8v8h-8zM1564 125h8v8h-8zM1524 133h8v8h-8zM1532 133h8v8h-8zM1540 133h8v8h-8zM1548 133h8v8h-8zM1556 133h8v8h-8zM1516 141h8v8h-8zM1524 141h8v8h-8zM1532 141h8v8h-8zM1540 141h8v8h-8zM1548 141h8v8h-8zM1516 149h8v8h-8zM1524 149h8v8h-8zM1532 149h8v8h-8zM1540 149h8v8h-8zM1548 149h8v8h-8zM1524 157h8v8h-8zM1532 157h8v8h-8zM1540 157h8v8h-8zM1532 165h8v8h-8zM1540 165h8v8h-8z"/>
<path fill="#ef0" d="M1604 69h8v8h-8zM1612 69h8v8h-8zM1620 69h8v8h-8zM1628 69h8v8h-8zM1636 69h8v8h-8zM1596 77h8v8h-8zM1604 77h8v8h-8zM1612 77h8v8h-8zM1620 77h8v8h-8zM1628 77h8v8h-8zM1588 85h8v8h-8zM1596 85h8v8h-8zM1604 85h8v8h-8zM1612 85h8v8h-8zM1620 85h8v8h-8zM1628 85h8v8h-8zM1588 93h8v8h-8zM1596 93h8v8h-8zM1604 93h8v8h-8zM1612 93h8v8h-8zM1620 93h8v8h-8zM1580 101h8v8h-8zM1588 101h8v8h-8zM1596 101h8v8h-8zM1604 101h8v8h-8zM1612 101h8v8h-8zM1620 101h8v8h-8zM1580 109h8v8h-8zM1588 109h8v8h-8zM1596 109h8v8h-8zM1604 109h8v8h-8zM1612 109h8v8h-8zM1572 117h8v8h-8zM1580 117h8v8h-8zM1588 117h8v8h-8zM1596 117h8v8h-8zM1604 117h8v8h-8zM1572 125h8v8h-8zM1580 125h8v8h-8zM1588 125h8v8h-8zM1596 125h8v8h-8zM1604 125h8v8h-8zM1564 133h8v8h-8zM1572 133h8v8h-8zM1580 133h8v8h-8zM1588 133h8v8h-8zM1596 133h8v8h-8zM1556 141h8v8h-8zM1564 141h8v8h-8zM1572 141h8v8h-8zM1580 141h8v8h-8zM1588 141h8v8h-8zM1596 141h8v8h-8zM1556 149h8v8h-8zM1564 149h8v8h-8zM1572 149h8v8h-8zM1580 149h8v8h-8zM1588 149h8v8h-8zM1548 157h8v8h-8zM1556 157h8v8h-8zM1564 157h8v8h-8zM1572 157h8v8h-8zM1580 157h8v8h-8zM1548 165h8v8h-8zM1556 165h8v8h-8zM1564 165h8v8h-8zM1572 165h8v8h-8zM1580 165h8v8h-8zM1548 173h8v8h-8zM1556 173h8v8h-8zM1564 173h8v8h-8zM1572 173h8v8h-8zM1556 181h8v8h-8zM1564 181h8v8h-8zM1572 181h8v8h-8zM1564 189h8v8h-8z"/>
<path fill="#ff0" d="M1644 69h8v8h-8zM1652 69h8v8h-8zM1660 69h8v8h-8zM1668 69h8v8h-8zM1676 69h8v8h-8zM1636 77h8v8h-8zM1644 77h8v8h-8zM1652 77h8v8h-8zM1660 77h8v8h-8zM1668 77h8v8h-8zM1676 77h8v8h-8zM1636 85h8v8h-8zM1644 85h8v8h-8zM1652 85h8v8h-8zM1660 85h8v8h-8zM1668 85h8v8h-8zM1628 93h8v8h-8zM1636 93h8v8h-8zM1644 93h8v8h-8zM1652 93h8v8h-8zM1660 93h8v8h-8zM1628 101h8v8h-8zM1636 101h8v8h-8zM1644 101h8v8h-8zM1652 101h8v8h-8zM1660 101h8v8h-8zM1620 109h8v8h-8zM1628 109h8v8h-8zM1636 109h8v8h-8zM1644 109h8v8h-8zM1652 109h8v8h-8zM1612 117h8v8h-8zM1620 117h8v8h-8zM1628 117h8v8h-8zM1636 117h8v8h-8zM1644 117h8v8h-8zM1652 117h8v8h-8zM1612 125h8v8h-8zM1620 125h8v8h-8zM1628 125h8v8h-8zM1636 125h8v8h-8zM1644 125h8v8h-8zM1604 133h8v8h-8zM1612 133h8v8h-8zM1620 133h8v8h-8zM1628 133h8v8h-8zM1636 133h8v8h-8zM1604 141h8v8h-8zM1612 141h8v8h-8zM1620 141h8v8h-8zM1628 141h8v8h-8zM1636 141h8v8h-8zM1596 149h8v8h-8zM1604 149h8v8h-8zM1612 149h8v8h-8zM1620 149h8v8h-8zM1628 149h8v8h-8zM1588 157h8v8h-8zM1596 157h8v8h-8zM1604 157h8v8h-8zM1612 157h8v8h-8zM1620 157h8v8h-8zM1588 165h8v8h-8zM1596 165h8v8h-8zM1604 165h8v8h-8zM1612 165h8v8h-8zM1620 165h8v8h-8zM1580 173h8v8h-8zM1588 173h8v8h-8zM1596 173h8v8h-8zM1604 173h8v8h-8zM1612 173h8v8h-8zM1580 181h8v8h-8zM1588 181h8v8h-8zM1596 181h8v8h-8zM1604 181h8v8h-8zM1612 181h8v8h-8zM1572 189h8v8h-8zM1580 189h8v8h-8zM1588 189h8v8h-8zM1596 189h8v8h-8zM1604 189h8v8h-8zM1572 197h8v8h-8zM1580 197h8v8h-8zM1588 197h8v8h-8zM1596 197h8v8h-8zM1580 205h8v8h-8zM1588 205h8v8h-8zM1596 205h8v8h-8zM1588 213h8v8h-8z"/>
<path fill="#fe0" d="M1684 69h8v8h-8zM1692 69h8v8h-8zM1700 69h8v8h-8zM1684 77h8v8h-8zM1692 77h8v8h-8zM1700 77h8v8h-8zM1676 85h8v8h-8zM1684 85h8v8h-8zM1692 85h8v8h-8zM1700 85h8v8h-8zM1668 93h8v8h-8zM1676 93h8v8h-8zM1684 93h8v8h-8zM1692 93h8v8h-8zM1700 93h8v8h-8zM1668 101h8v8h-8zM1676 101h8v8h-8zM1684 101h8v8h-8zM1692 101h8v8h-8zM1700 101h8v8h-8zM1660 109h8v8h-8zM1668 109h8v8h-8zM1676 109h8v8h-8zM1684 109h8v8h-8zM1692 109h8v8h-8zM1700 109h8v8h-8zM1660 117h8v8h-8zM1668 117h8v8h-8zM1676 117h8v8h-8zM1684 117h8v8h-8zM1692 117h8v8h-8zM1652 125h8v8h-8zM1660 125h8v8h-8zM1668 125h8v8h-8zM1676 125h8v8h-8zM1684 125h8v8h-8zM1692 125h8v8h-8zM1644 133h8v8h-8zM1652 133h8v8h-8zM1660 133h8v8h-8zM1668 133h8v8h-8zM1676 133h8v8h-8zM1684 133h8v8h-8zM1644 141h8v8h-8zM1652 141h8v8h-8zM1660 141h8v8h-8zM1668 141h8v8h-8zM1676 141h8v8h-8zM1636 149h8v8h-8zM1644 149h8v8h-8zM1652 149h8v8h-8zM1660 149h8v8h-8zM1668 149h8v8h-8zM1676 149h8v8h-8zM1628 157h8v8h-8zM1636 157h8v8h-8zM1644 157h8v8h-8zM1652 157h8v8h-8zM1660 157h8v8h-8zM1668 157h8v8h-8zM1628 165h8v8h-8zM1636 165h8v8h-8zM1644 165h8v8h-8zM1652 165h8v8h-8zM1660 165h8v8h-8zM1620 173h8v8h-8zM1628 173h8v8h-8zM1636 173h8v8h-8zM1644 173h8v8h-8zM1652 173h8v8h-8zM1660 173h8v8h-8zM1620 181h8v8h-8zM1628 181h8v8h-8zM1636 181h8v8h-8zM1644 181h8v8h-8zM1652 181h8v8h-8zM1612 189h8v8h-8zM1620 189h8v8h-8zM1628 189h8v8h-8zM1636 189h8v8h-8zM1644 189h8v8h-8zM1604 197h8v8h-8zM1612 197h8v8h-8zM1620 197h8v8h-8zM1628 197h8v8h-8zM1636 197h8v8h-8zM1644 197h8v8h-8zM1604 205h8v8h-8zM1612 205h8v8h-8zM1620 205h8v8h-8zM1628 205h8v8h-8zM1636 205h8v8h-8zM1596 213h8v8h-8zM1604 213h8v8h-8zM1612 213h8v8h-8zM1620 213h8v8h-8zM1628 213h8v8h-8zM1596 221h8v8h-8zM1604 221h8v8h-8zM1612 221h8v8h-8zM1620 221h8v8h-8zM1628 221h8v8h-8zM1604 229h8v8h-8zM1612 229h8v8h-8zM1620 229h8v8h-8zM1612 237h8v8h-8zM1620 237h8v8h-8z"/>
<path fill="#fd0" d="M1700 117h8v8h-8zM1700 125h8v8h-8zM1692 133h8v8h-8zM1700 133h8v8h-8zM1684 141h8v8h-8zM1692 141h8v8h-8zM1700 141h8v8h-8zM1684 149h8v8h-8zM1692 149h8v8h-8zM1700 149h8v8h-8zM1676 157h8v8h-8zM1684 157h8v8h-8zM1692 157h8v8h-8zM1700 157h8v8h-8zM1668 165h8v8h-8zM1676 165h8v8h-8zM1684 165h8v8h-8zM1692 165h8v8h-8zM1700 165h8v8h-8zM1668 173h8v8h-8zM1676 173h8v8h-8zM1684 173h8v8h-8zM1692 173h8v8h-8zM1700 173h8v8h-8zM1660 181h8v8h-8zM1668 181h8v8h-8zM1676 181h8v8h-8zM1684 181h8v8h-8zM1692 181h8v8h-8zM1700 181h8v8h-8zM1652 189h8v8h-8zM1660 189h8v8h-8zM1668 189h8v8h-8zM1676 189h8v8h-8zM1684 189h8v8h-8zM1692 189h8v8h-8zM1652 197h8v8h-8zM1660 197h8v8h-8zM1668 197h8v8h-8zM1676 197h8v8h-8zM1684 197h8v8h-8zM1692 197h8v8h-8zM1644 205h8v8h-8zM1652 205h8v8h-8zM1660 205h8v8h-8zM1668 205h8v8h-8zM1676 205h8v8h-8zM1684 205h8v8h-8zM1636 213h8v8h-8zM1644 213h8v8h-8zM1652 213h8v8h-8zM1660 213h8v8h-8zM1668 213h8v8h-8zM1676 213h8v8h-8zM1636 221h8v8h-8zM1644 221h8v8h-8zM1652 221h8v8h-8zM1660 221h8v8h-8zM1668 221h8v8h-8zM1676 221h8v8h-8zM1628 229h8v8h-8zM1636 229h8v8h-8zM1644 229h8v8h-8zM1652 229h8v8h-8zM1660 229h8v8h-8zM1668 229h8v8h-8zM1628 237h8v8h-8zM1636 237h8v8h-8zM1644 237h8v8h-8zM1652 237h8v8h-8zM1660 237h8v8h-8zM1620 245h8v8h-8zM1628 245h8v8h-8zM1636 245h8v8h-8zM1644 245h8v8h-8zM1652 245h8v8h-8zM1660 245h8v8h-8zM1628 253h8v8h-8zM1636 253h8v8h-8zM1644 253h8v8h-8zM1652 253h8v8h-8z"/>
<path fill="#df1" d="M1516 157h8v8h-8zM1516 165h8v8h-8zM1524 165h8v8h-8zM1516 173h8v8h-8zM1524 173h8v8h-8zM1532 173h8v8h-8zM1516 181h8v8h-8zM1524 181h8v8h-8zM1532 181h8v8h-8zM1516 189h8v8h-8zM1524 189h8v8h-8zM1516 197h8v8h-8zM1516 205h8v8h-8z"/>
<path fill="#ef1" d="M1540 173h8v8h-8zM1540 181h8v8h-8zM1548 181h8v8h-8zM1532 189h8v8h-8zM1540 189h8v8h-8zM1548 189h8v8h-8zM1556 189h8v8h-8zM1524 197h8v8h-8zM1532 197h8v8h-8zM1540 197h8v8h-8zM1548 197h8v8h-8zM1556 197h8v8h-8zM1524 205h8v8h-8zM1532 205h8v8h-8zM1540 205h8v8h-8zM1548 205h8v8h-8zM1556 205h8v8h-8zM1516 213h8v8h-8zM1524 213h8v8h-8zM1532 213h8v8h-8zM1540 213h8v8h-8zM1548 213h8v8h-8zM1516 221h8v8h-8zM1524 221h8v8h-8zM1532 221h8v8h-8zM1540 221h8v8h-8zM1548 221h8v8h-8zM1516 229h8v8h-8zM1524 229h8v8h-8zM1532 229h8v8h-8zM1540 229h8v8h-8zM1516 237h8v8h-8zM1524 237h8v8h-8zM1532 237h8v8h-8zM1516 245h8v8h-8zM1524 245h8v8h-8zM1532 245h8v8h-8zM1516 253h8v8h-8zM1524 253h8v8h-8z"/>
<path fill="#fc0" d="M1700 189h8v8h-8zM1700 197h8v8h-8zM1692 205h8v8h-8zM1700 205h8v8h-8zM1684 213h8v8h-8zM1692 213h8v8h-8zM1700 213h8v8h-8zM1684 221h8v8h-8zM1692 221h8v8h-8zM1700 221h8v8h-8zM1676 229h8v8h-8zM1684 229h8v8h-8zM1692 229h8v8h-8zM1700 229h8v8h-8zM1668 237h8v8h-8zM1676 237h8v8h-8zM1684 237h8v8h-8zM1692 237h8v8h-8zM1700 237h8v8h-8zM1668 245h8v8h-8zM1676 245h8v8h-8zM1684 245h8v8h-8zM1692 245h8v8h-8zM1700 245h8v8h-8zM1660 253h8v8h-8zM1668 253h8v8h-8zM1676 253h8v8h-8zM1684 253h8v8h-8zM1692 253h8v8h-8zM1700 253h8v8h-8z"/>
<path fill="#ff1" d="M1564 197h8v8h-8zM1564 205h8v8h-8zM1572 205h8v8h-8zM1556 213h8v8h-8zM1564 213h8v8h-8zM1572 213h8v8h-8zM1580 213h8v8h-8zM1556 221h8v8h-8zM1564 221h8v8h-8zM1572 221h8v8h-8zM1580 221h8v8h-8zM1588 221h8v8h-8zM1548 229h8v8h-8zM1556 229h8v8h-8zM1564 229h8v8h-8zM1572 229h8v8h-8zM1580 229h8v8h-8zM1540 237h8v8h-8zM1548 237h8v8h-8zM1556 237h8v8h-8zM1564 237h8v8h-8zM1572 237h8v8h-8zM1540 245h8v8h-8zM1548 245h8v8h-8zM1556 245h8v8h-8zM1564 245h8v8h-8zM1572 245h8v8h-8zM1532 253h8v8h-8zM1540 253h8v8h-8zM1548 253h8v8h-8zM1556 253h8v8h-8zM1564 253h8v8h-8z"/>
<path fill="#fe1" d="M1588 229h8v8h-8zM1596 229h8v8h-8zM1580 237h8v8h-8zM1588 237h8v8h-8zM1596 237h8v8h-8zM1604 237h8v8h-8zM1580 245h8v8h-8zM1588 245h8v8h-8zM1596 245h8v8h-8zM1604 245h8v8h-8zM1612 245h8v8h-8zM1572 253h8v8h-8zM1580 253h8v8h-8zM1588 253h8v8h-8zM1596 253h8v8h-8zM1604 253h8v8h-8z"/>
<path fill="#fd1" d="M1612 253h8v8h-8zM1620 253h8v8h-8z"/>
</g>
<g clip-path="url(#fbid)">
<path fill="#790" d="M1516 69h8v8h-8zM1524 69h8v8h-8zM1532 69h8v8h-8zM1540 69h8v8h-8zM1548 69h8v8h-8zM1516 77h8v8h-8zM1524 77h8v8h-8zM1532 77h8v8h-8zM1540 77h8v8h-8zM1516 85h8v8h-8zM1524 85h8v8h-8zM1532 85h8v8h-8zM1540 85h8v8h-8zM1516 93h8v8h-8zM1524 93h8v8h-8zM1532 93h8v8h-8zM1516 101h8v8h-8zM1524 101h8v8h-8zM1532 101h8v8h-8zM1516 109h8v8h-8zM1524 109h8v8h-8zM1516 117h8v8h-8zM1524 117h8v8h-8zM1516 125h8v8h-8zM1516 133h8v8h-8z"/>
<path fill="#890" d="M1556 69h8v8h-8zM1564 69h8v8h-8zM1572 69h8v8h-8zM1580 69h8v8h-8zM1588 69h8v8h-8zM1596 69h8v8h-8zM1604 69h8v8h-8zM1612 69h8v8h-8zM1620 69h8v8h-8zM1548 77h8v8h-8zM1556 77h8v8h-8zM1564 77h8v8h-8zM1572 77h8v8h-8zM1580 77h8v8h-8zM1588 77h8v8h-8zM1596 77h8v8h-8zM1604 77h8v8h-8zM1612 77h8v8h-8zM1620 77h8v8h-8zM1548 85h8v8h-8zM1556 85h8v8h-8zM1564 85h8v8h-8zM1572 85h8v8h-8zM1580 85h8v8h-8zM1588 85h8v8h-8zM1596 85h8v8h-8zM1604 85h8v8h-8zM1612 85h8v8h-8zM1540 93h8v8h-8zM1548 93h8v8h-8zM1556 93h8v8h-8zM1564 93h8v8h-8zM1572 93h8v8h-8zM1580 93h8v8h-8zM1588 93h8v8h-8zM1596 93h8v8h-8zM1604 93h8v8h-8zM1540 101h8v8h-8zM1548 101h8v8h-8zM1556 101h8v8h-8zM1564 101h8v8h-8zM1572 101h8v8h-8zM1580 101h8v8h-8zM1588 101h8v8h-8zM1596 101h8v8h-8zM1604 101h8v8h-8zM1532 109h8v8h-8zM1540 109h8v8h-8zM1548 109h8v8h-8zM1556 109h8v8h-8zM1564 109h8v8h-8zM1572 109h8v8h-8zM1580 109h8v8h-8zM1588 109h8v8h-8zM1596 109h8v8h-8zM1532 117h8v8h-8zM1540 117h8v8h-8zM1548 117h8v8h-8zM1556 117h8v8h-8zM1564 117h8v8h-8zM1572 117h8v8h-8zM1580 117h8v8h-8zM1588 117h8v8h-8zM1596 117h8v8h-8zM1524 125h8v8h-8zM1532 125h8v8h-8zM1540 125h8v8h-8zM1548 125h8v8h-8zM1556 125h8v8h-8zM1564 125h8v8h-8zM1572 125h8v8h-8zM1580 125h8v8h-8zM1588 125h8v8h-8zM1524 133h8v8h-8zM1532 133h8v8h-8zM1540 133h8v8h-8zM1548 133h8v8h-8zM1556 133h8v8h-8zM1564 133h8v8h-8zM1572 133h8v8h-8zM1580 133h8v8h-8zM1516 141h8v8h-8zM1524 141h8v8h-8zM1532 141h8v8h-8zM1540 141h8v8h-8zM1548 141h8v8h-8zM1556 141h8v8h-8zM1564 141h8v8h-8zM1572 141h8v8h-8zM1580 141h8v8h-8zM1516 149h8v8h-8zM1524 149h8v8h-8zM1532 149h8v8h-8zM1540 149h8v8h-8zM1548 149h8v8h-8zM1556 149h8v8h-8zM1564 149h8v8h-8zM1572 149h8v8h-8zM1516 157h8v8h-8zM1524 157h8v8h-8zM1532 157h8v8h-8zM1540 157h8v8h-8zM1548 157h8v8h-8zM1556 157h8v8h-8zM1564 157h8v8h-8zM1572 157h8v8h-8zM1516 165h8v8h-8zM1524 165h8v8h-8zM1532 165h8v8h-8zM1540 165h8v8h-8zM1548 165h8v8h-8zM1556 165h8v8h-8zM1564 165h8v8h-8zM1516 173h8v8h-8zM1524 173h8v8h-8zM1532 173h8v8h-8zM1540 173h8v8h-8zM1548 173h8v8h-8zM1556 173h8v8h-8zM1564 173h8v8h-8zM1516 181h8v8h-8zM1524 181h8v8h-8zM1532 181h8v8h-8zM1540 181h8v8h-8zM1548 181h8v8h-8zM1556 181h8v8h-8zM1516 189h8v8h-8zM1524 189h8v8h-8zM1532 189h8v8h-8zM1540 189h8v8h-8zM1548 189h8v8h-8zM1516 197h8v8h-8zM1524 197h8v8h-8zM1532 197h8v8h-8zM1540 197h8v8h-8zM1548 197h8v8h-8zM1532 205h8v8h-8zM1540 205h8v8h-8zM1540 213h8v8h-8z"/>
<path fill="#990" d="M1628 69h8v8h-8zM1636 69h8v8h-8zM1644 69h8v8h-8zM1652 69h8v8h-8zM1660 69h8v8h-8zM1668 69h8v8h-8zM1676 69h8v8h-8zM1684 69h8v8h-8zM1692 69h8v8h-8zM1628 77h8v8h-8zM1636 77h8v8h-8zM1644 77h8v8h-8zM1652 77h8v8h-8zM1660 77h8v8h-8zM1668 77h8v8h-8zM1676 77h8v8h-8zM1684 77h8v8h-8zM1620 85h8v8h-8zM1628 85h8v8h-8zM1636 85h8v8h-8zM1644 85h8v8h-8zM1652 85h8v8h-8zM1660 85h8v8h-8zM1668 85h8v8h-8zM1676 85h8v8h-8zM1684 85h8v8h-8zM1612 93h8v8h-8zM1620 93h8v8h-8zM1628 93h8v8h-8zM1636 93h8v8h-8zM1644 93h8v8h-8zM1652 93h8v8h-8zM1660 93h8v8h-8zM1668 93h8v8h-8zM1676 93h8v8h-8zM1612 101h8v8h-8zM1620 101h8v8h-8zM1628 101h8v8h-8zM1636 101h8v8h-8zM1644 101h8v8h-8zM1652 101h8v8h-8zM1660 101h8v8h-8zM1668 101h8v8h-8zM1676 101h8v8h-8zM1604 109h8v8h-8zM1612 109h8v8h-8zM1620 109h8v8h-8zM1628 109h8v8h-8zM1636 109h8v8h-8zM1644 109h8v8h-8zM1652 109h8v8h-8zM1660 109h8v8h-8zM1668 109h8v8h-8zM1604 117h8v8h-8zM1612 117h8v8h-8zM1620 117h8v8h-8zM1628 117h8v8h-8zM1636 117h8v8h-8zM1644 117h8v8h-8zM1652 117h8v8h-8zM1660 117h8v8h-8zM1596 125h8v8h-8zM1604 125h8v8h-8zM1612 125h8v8h-8zM1620 125h8v8h-8zM1628 125h8v8h-8zM1636 125h8v8h-8zM1644 125h8v8h-8zM1652 125h8v8h-8zM1660 125h8v8h-8zM1588 133h8v8h-8zM1596 133h8v8h-8zM1604 133h8v8h-8zM1612 133h8v8h-8zM1620 133h8v8h-8zM1628 133h8v8h-8zM1636 133h8v8h-8zM1644 133h8v8h-8zM1652 133h8v8h-8zM1588 141h8v8h-8zM1596 141h8v8h-8zM1604 141h8v8h-8zM1612 141h8v8h-8zM1620 141h8v8h-8zM1628 141h8v8h-8zM1636 141h8v8h-8zM1644 141h8v8h-8zM1580 149h8v8h-8zM1588 149h8v8h-8zM1596 149h8v8h-8zM1604 149h8v8h-8zM1612 149h8v8h-8zM1620 149h8v8h-8zM1628 149h8v8h-8zM1636 149h8v8h-8zM1644 149h8v8h-8zM1580 157h8v8h-8zM1588 157h8v8h-8zM1596 157h8v8h-8zM1604 157h8v8h-8zM1612 157h8v8h-8zM1620 157h8v8h-8zM1628 157h8v8h-8zM1636 157h8v8h-8zM1572 165h8v8h-8zM1580 165h8v8h-8zM1588 165h8v8h-8zM1596 165h8v8h-8zM1604 165h8v8h-8zM1612 165h8v8h-8zM1620 165h8v8h-8zM1628 165h8v8h-8zM1636 165h8v8h-8zM1572 173h8v8h-8zM1580 173h8v8h-8zM1588 173h8v8h-8zM1596 173h8v8h-8zM1604 173h8v8h-8zM1612 173h8v8h-8zM1620 173h8v8h-8zM1628 173h8v8h-8zM1564 181h8v8h-8zM1572 181h8v8h-8zM1580 181h8v8h-8zM1588 181h8v8h-8zM1596 181h8v8h-8zM1604 181h8v8h-8zM1612 181h8v8h-8zM1620 181h8v8h-8zM1556 189h8v8h-8zM1564 189h8v8h-8zM1572 189h8v8h-8zM1580 189h8v8h-8zM1588 189h8v8h-8zM1596 189h8v8h-8zM1604 189h8v8h-8zM1612 189h8v8h-8zM1620 189h8v8h-8zM1556 197h8v8h-8zM1564 197h8v8h-8zM1572 197h8v8h-8zM1580 197h8v8h-8zM1588 197h8v8h-8zM1596 197h8v8h-8zM1604 197h8v8h-8zM1612 197h8v8h-8zM1548 205h8v8h-8zM1556 205h8v8h-8zM1564 205h8v8h-8zM1572 205h8v8h-8zM1580 205h8v8h-8zM1588 205h8v8h-8zM1596 205h8v8h-8zM1604 205h8v8h-8zM1548 213h8v8h-8zM1556 213h8v8h-8zM1564 213h8v8h-8zM1572 213h8v8h-8zM1580 213h8v8h-8zM1588 213h8v8h-8zM1596 213h8v8h-8zM1604 213h8v8h-8zM1548 221h8v8h-8zM1556 221h8v8h-8zM1564 221h8v8h-8zM1572 221h8v8h-8zM1580 221h8v8h-8zM1588 221h8v8h-8zM1596 221h8v8h-8zM1556 229h8v8h-8zM1564 229h8v8h-8zM1572 229h8v8h-8zM1580 229h8v8h-8zM1588 229h8v8h-8zM1596 229h8v8h-8zM1572 237h8v8h-8zM1580 237h8v8h-8zM1588 237h8v8h-8zM1580 245h8v8h-8zM1580 253h8v8h-8z"/>
<path fill="#980" d="M1700 69h8v8h-8zM1692 77h8v8h-8zM1700 77h8v8h-8zM1692 85h8v8h-8zM1700 85h8v8h-8zM1684 93h8v8h-8zM1692 93h8v8h-8zM1700 93h8v8h-8zM1684 101h8v8h-8zM1692 101h8v8h-8zM1700 101h8v8h-8zM1676 109h8v8h-8zM1684 109h8v8h-8zM1692 109h8v8h-8zM1700 109h8v8h-8zM1668 117h8v8h-8zM1676 117h8v8h-8zM1684 117h8v8h-8zM1692 117h8v8h-8zM1700 117h8v8h-8zM1668 125h8v8h-8zM1676 125h8v8h-8zM1684 125h8v8h-8zM1692 125h8v8h-8zM1700 125h8v8h-8zM1660 133h8v8h-8zM1668 133h8v8h-8zM1676 133h8v8h-8zM1684 133h8v8h-8zM1692 133h8v8h-8zM1700 133h8v8h-8zM1652 141h8v8h-8zM1660 141h8v8h-8zM1668 141h8v8h-8zM1676 141h8v8h-8zM1684 141h8v8h-8zM1692 141h8v8h-8zM1700 141h8v8h-8zM1652 149h8v8h-8zM1660 149h8v8h-8zM1668 149h8v8h-8zM1676 149h8v8h-8zM1684 149h8v8h-8zM1692 149h8v8h-8zM1700 149h8v8h-8zM1644 157h8v8h-8zM1652 157h8v8h-8zM1660 157h8v8h-8zM1668 157h8v8h-8zM1676 157h8v8h-8zM1684 157h8v8h-8zM1692 157h8v8h-8zM1700 157h8v8h-8zM1644 165h8v8h-8zM1652 165h8v8h-8zM1660 165h8v8h-8zM1668 165h8v8h-8zM1676 165h8v8h-8zM1684 165h8v8h-8zM1692 165h8v8h-8zM1700 165h8v8h-8zM1636 173h8v8h-8zM1644 173h8v8h-8zM1652 173h8v8h-8zM1660 173h8v8h-8zM1668 173h8v8h-8zM1676 173h8v8h-8zM1684 173h8v8h-8zM1692 173h8v8h-8zM1700 173h8v8h-8zM1628 181h8v8h-8zM1636 181h8v8h-8zM1644 181h8v8h-8zM1652 181h8v8h-8zM1660 181h8v8h-8zM1668 181h8v8h-8zM1676 181h8v8h-8zM1684 181h8v8h-8zM1692 181h8v8h-8zM1700 181h8v8h-8zM1628 189h8v8h-8zM1636 189h8v8h-8zM1644 189h8v8h-8zM1652 189h8v8h-8zM1660 189h8v8h-8zM1668 189h8v8h-8zM1676 189h8v8h-8zM1684 189h8v8h-8zM1692 189h8v8h-8zM1620 197h8v8h-8zM1628 197h8v8h-8zM1636 197h8v8h-8zM1644 197h8v8h-8zM1652 197h8v8h-8zM1660 197h8v8h-8zM1668 197h8v8h-8zM1676 197h8v8h-8zM1684 197h8v8h-8zM1692 197h8v8h-8zM1612 205h8v8h-8zM1620 205h8v8h-8zM1628 205h8v8h-8zM1636 205h8v8h-8zM1644 205h8v8h-8zM1652 205h8v8h-8zM1660 205h8v8h-8zM1668 205h8v8h-8zM1676 205h8v8h-8zM1684 205h8v8h-8zM1612 213h8v8h-8zM1620 213h8v8h-8zM1628 213h8v8h-8zM1636 213h8v8h-8zM1644 213h8v8h-8zM1652 213h8v8h-8zM1660 213h8v8h-8zM1668 213h8v8h-8zM1676 213h8v8h-8zM1604 221h8v8h-8zM1612 221h8v8h-8zM1620 221h8v8h-8zM1628 221h8v8h-8zM1636 221h8v8h-8zM1644 221h8v8h-8zM1652 221h8v8h-8zM1660 221h8v8h-8zM1668 221h8v8h-8zM1676 221h8v8h-8zM1604 229h8v8h-8zM1612 229h8v8h-8zM1620 229h8v8h-8zM1628 229h8v8h-8zM1636 229h8v8h-8zM1644 229h8v8h-8zM1652 229h8v8h-8zM1660 229h8v8h-8zM1668 229h8v8h-8zM1596 237h8v8h-8zM1604 237h8v8h-8zM1612 237h8v8h-8zM1620 237h8v8h-8zM1628 237h8v8h-8zM1636 237h8v8h-8zM1644 237h8v8h-8zM1652 237h8v8h-8zM1660 237h8v8h-8zM1588 245h8v8h-8zM1596 245h8v8h-8zM1604 245h8v8h-8zM1612 245h8v8h-8zM1620 245h8v8h-8zM1628 245h8v8h-8zM1636 245h8v8h-8zM1644 245h8v8h-8zM1652 245h8v8h-8zM1660 245h8v8h-8zM1588 253h8v8h-8zM1596 253h8v8h-8zM1604 253h8v8h-8zM1612 253h8v8h-8zM1620 253h8v8h-8zM1628 253h8v8h-8zM1636 253h8v8h-8zM1644 253h8v8h-8zM1652 253h8v8h-8z"/>
<path fill="#970" d="M1700 189h8v8h-8zM1700 197h8v8h-8zM1692 205h8v8h-8zM1700 205h8v8h-8zM1684 213h8v8h-8zM1692 213h8v8h-8zM1700 213h8v8h-8zM1684 221h8v8h-8zM1692 221h8v8h-8zM1700 221h8v8h-8zM1676 229h8v8h-8zM1684 229h8v8h-8zM1692 229h8v8h-8zM1700 229h8v8h-8zM1668 237h8v8h-8zM1676 237h8v8h-8zM1684 237h8v8h-8zM1692 237h8v8h-8zM1700 237h8v8h-8zM1668 245h8v8h-8zM1676 245h8v8h-8zM1684 245h8v8h-8zM1692 245h8v8h-8zM1700 245h8v8h-8zM1660 253h8v8h-8zM1668 253h8v8h-8zM1676 253h8v8h-8zM1684 253h8v8h-8zM1692 253h8v8h-8zM1700 253h8v8h-8z"/>
<path fill="#891" d="M1516 205h8v8h-8zM1524 205h8v8h-8zM1516 213h8v8h-8zM1524 213h8v8h-8zM1532 213h8v8h-8zM1516 221h8v8h-8zM1524 221h8v8h-8zM1532 221h8v8h-8zM1516 229h8v8h-8zM1524 229h8v8h-8zM1516 237h8v8h-8zM1524 237h8v8h-8zM1516 245h8v8h-8zM1516 253h8v8h-8z"/>
<path fill="#991" d="M1540 221h8v8h-8zM1532 229h8v8h-8zM1540 229h8v8h-8zM1548 229h8v8h-8zM1532 237h8v8h-8zM1540 237h8v8h-8zM1548 237h8v8h-8zM1556 237h8v8h-8zM1564 237h8v8h-8zM1524 245h8v8h-8zM1532 245h8v8h-8zM1540 245h8v8h-8zM1548 245h8v8h-8zM1556 245h8v8h-8zM1564 245h8v8h-8zM1572 245h8v8h-8zM1524 253h8v8h-8zM1532 253h8v8h-8zM1540 253h8v8h-8zM1548 253h8v8h-8zM1556 253h8v8h-8zM1564 253h8v8h-8zM1572 253h8v8h-8z"/>
</g>
</svg>
<canvas id="cie" width="667" height="521"></canvas>
<svg width="1716" height="885" viewBox="0 0 1716 885">
<rect x="1515.5" y="68.5" width="189.5" height="189" fill="none" stroke="#9a9a9a" stroke-width="1"/>
<rect x="1241.8" y="153.8" width="13.4" height="13.4" fill="none" stroke="#ffffff" stroke-width="1.5"/>
<rect x="1248.1" y="202.4" width="13.4" height="13.4" fill="none" stroke="#ffffff" stroke-width="1.5"/>
<rect x="1256.3" y="243.1" width="13.4" height="13.4" fill="none" stroke="#ffffff" stroke-width="1.5"/>
<rect x="1263.7" y="286.5" width="13.4" height="13.4" fill="none" stroke="#ffffff" stroke-width="1.5"/>
<rect x="1270.5" y="333.3" width="13.4" height="13.4" fill="none" stroke="#ffffff" stroke-width="1.5"/>
<rect x="1189.8" y="374.7" width="13.4" height="13.4" fill="none" stroke="#ffffff" stroke-width="1.5"/>
<rect x="1207.3" y="376.1" width="13.4" height="13.4" fill="none" stroke="#ffffff" stroke-width="1.5"/>
<rect x="1224.3" y="376.1" width="13.4" height="13.4" fill="none" stroke="#ffffff" stroke-width="1.5"/>
<rect x="1242.7" y="376.1" width="13.4" height="13.4" fill="none" stroke="#ffffff" stroke-width="1.5"/>
<rect x="1261.0" y="376.1" width="13.4" height="13.4" fill="none" stroke="#ffffff" stroke-width="1.5"/>
<rect x="1337.0" y="377.4" width="13.4" height="13.4" fill="none" stroke="#ffffff" stroke-width="1.5"/>
<rect x="1391.3" y="378.8" width="13.4" height="13.4" fill="none" stroke="#ffffff" stroke-width="1.5"/>
<rect x="1451.7" y="380.8" width="13.4" height="13.4" fill="none" stroke="#ffffff" stroke-width="1.5"/>
<rect x="1505.3" y="382.2" width="13.4" height="13.4" fill="none" stroke="#ffffff" stroke-width="1.5"/>
<rect x="1570.3" y="383.6" width="13.4" height="13.4" fill="none" stroke="#ffffff" stroke-width="1.5"/>
<rect x="1299.0" y="351.7" width="13.4" height="13.4" fill="none" stroke="#ffffff" stroke-width="1.5"/>
<rect x="1318.0" y="327.9" width="13.4" height="13.4" fill="none" stroke="#ffffff" stroke-width="1.5"/>
<rect x="1337.0" y="302.1" width="13.4" height="13.4" fill="none" stroke="#ffffff" stroke-width="1.5"/>
<rect x="1358.0" y="276.3" width="13.4" height="13.4" fill="none" stroke="#ffffff" stroke-width="1.5"/>
<rect x="1379.1" y="249.3" width="13.4" height="13.4" fill="none" stroke="#ffffff" stroke-width="1.5"/>
<rect x="1252.9" y="410.0" width="13.4" height="13.4" fill="none" stroke="#ffffff" stroke-width="1.5"/>
<rect x="1227.1" y="443.9" width="13.4" height="13.4" fill="none" stroke="#ffffff" stroke-width="1.5"/>
<rect x="1202.0" y="476.5" width="13.4" height="13.4" fill="none" stroke="#ffffff" stroke-width="1.5"/>
<rect x="1177.6" y="509.0" width="13.4" height="13.4" fill="none" stroke="#ffffff" stroke-width="1.5"/>
<rect x="1149.1" y="545.0" width="13.4" height="13.4" fill="none" stroke="#ffffff" stroke-width="1.5"/>
<rect x="1282.1" y="399.1" width="13.4" height="13.4" fill="none" stroke="#ffffff" stroke-width="1.5"/>
<rect x="1286.8" y="421.5" width="13.4" height="13.4" fill="none" stroke="#ffffff" stroke-width="1.5"/>
<rect x="1290.9" y="443.9" width="13.4" height="13.4" fill="none" stroke="#ffffff" stroke-width="1.5"/>
<rect x="1293.6" y="464.9" width="13.4" height="13.4" fill="none" stroke="#ffffff" stroke-width="1.5"/>
<rect x="1297.7" y="487.3" width="13.4" height="13.4" fill="none" stroke="#ffffff" stroke-width="1.5"/>
<rect x="1279.3" y="377.8" width="13.4" height="13.4" fill="none" stroke="#000000" stroke-width="1.5"/>
<rect x="1603.4" y="155.3" width="13.4" height="13.4" fill="none" stroke="#ffffff" stroke-width="1.5"/>
<circle cx="1221.6" cy="140.6" r="4.4" fill="#00b000" stroke="#111" stroke-width="1.3"/>
<circle cx="1231.8" cy="182.6" r="4.4" fill="#44bb44" stroke="#111" stroke-width="1.3"/>
<circle cx="1244" cy="228" r="4.4" fill="#62b062" stroke="#111" stroke-width="1.3"/>
<circle cx="1258.2" cy="281" r="4.4" fill="#7aae7a" stroke="#111" stroke-width="1.3"/>
<circle cx="1271.8" cy="333.3" r="4.4" fill="#92ae92" stroke="#111" stroke-width="1.3"/>
<circle cx="1179.5" cy="372" r="4.4" fill="#20a8a8" stroke="#111" stroke-width="1.3"/>
<circle cx="1198.5" cy="378.7" r="4.4" fill="#50b0b0" stroke="#111" stroke-width="1.3"/>
<circle cx="1220.2" cy="378.7" r="4.4" fill="#70b0b0" stroke="#111" stroke-width="1.3"/>
<circle cx="1241.3" cy="381.4" r="4.4" fill="#88b0a8" stroke="#111" stroke-width="1.3"/>
<circle cx="1264.3" cy="382.1" r="4.4" fill="#98b0a0" stroke="#111" stroke-width="1.3"/>
<circle cx="1356.6" cy="384.8" r="4.4" fill="#b09090" stroke="#111" stroke-width="1.3"/>
<circle cx="1419.7" cy="387.5" r="4.4" fill="#b07070" stroke="#111" stroke-width="1.3"/>
<circle cx="1483.5" cy="387.5" r="4.4" fill="#b05858" stroke="#111" stroke-width="1.3"/>
<circle cx="1534.3" cy="388.2" r="4.4" fill="#b04848" stroke="#111" stroke-width="1.3"/>
<circle cx="1577" cy="389.6" r="4.4" fill="#c00000" stroke="#111" stroke-width="1.3"/>
<circle cx="1309" cy="353" r="4.4" fill="#b0b098" stroke="#111" stroke-width="1.3"/>
<circle cx="1328" cy="326.5" r="4.4" fill="#a8a880" stroke="#111" stroke-width="1.3"/>
<circle cx="1349" cy="302" r="4.4" fill="#a8a860" stroke="#111" stroke-width="1.3"/>
<circle cx="1368.8" cy="277" r="4.4" fill="#a8a840" stroke="#111" stroke-width="1.3"/>
<circle cx="1385.8" cy="256" r="4.4" fill="#b0b000" stroke="#111" stroke-width="1.3"/>
<circle cx="1256.9" cy="421.4" r="4.4" fill="#9898b0" stroke="#111" stroke-width="1.3"/>
<circle cx="1227" cy="458.8" r="4.4" fill="#8080a8" stroke="#111" stroke-width="1.3"/>
<circle cx="1197.8" cy="494.7" r="4.4" fill="#6868a8" stroke="#111" stroke-width="1.3"/>
<circle cx="1170.7" cy="529.3" r="4.4" fill="#5050a0" stroke="#111" stroke-width="1.3"/>
<circle cx="1147.6" cy="559.2" r="4.4" fill="#1010a0" stroke="#111" stroke-width="1.3"/>
<circle cx="1292.8" cy="406.5" r="4.4" fill="#b098b0" stroke="#111" stroke-width="1.3"/>
<circle cx="1299" cy="431" r="4.4" fill="#b088b0" stroke="#111" stroke-width="1.3"/>
<circle cx="1305.7" cy="454" r="4.4" fill="#b070b0" stroke="#111" stroke-width="1.3"/>
<circle cx="1309.8" cy="475" r="4.4" fill="#b058b0" stroke="#111" stroke-width="1.3"/>
<circle cx="1316" cy="493.4" r="4.4" fill="#b040b0" stroke="#111" stroke-width="1.3"/>
<circle cx="1286" cy="382.8" r="5" fill="#ffffff" stroke="#111" stroke-width="1.3"/>
<circle cx="1611.3" cy="162" r="4.3" fill="#b0b000" stroke="#111" stroke-width="1.3"/>
</svg>
</div>
<script>
(function(){
var cv=document.getElementById('cie');
var ctx=cv.getContext('2d');
var Wc=cv.width,Hc=cv.height,L=1038,T=68;
var loc=[[0.1741,0.0050],[0.1738,0.0049],[0.1733,0.0048],[0.1726,0.0048],[0.1714,0.0051],[0.1689,0.0069],[0.1644,0.0109],[0.1566,0.0177],[0.1440,0.0297],[0.1241,0.0578],[0.1096,0.0868],[0.0913,0.1327],[0.0687,0.2007],[0.0454,0.2950],[0.0235,0.4127],[0.0082,0.5384],[0.0039,0.6548],[0.0139,0.7502],[0.0389,0.8120],[0.0743,0.8338],[0.1142,0.8262],[0.1547,0.8059],[0.1929,0.7816],[0.2296,0.7543],[0.2658,0.7243],[0.3016,0.6923],[0.3373,0.6589],[0.3731,0.6245],[0.4087,0.5896],[0.4441,0.5547],[0.4788,0.5202],[0.5125,0.4866],[0.5448,0.4544],[0.5752,0.4242],[0.6029,0.3965],[0.6270,0.3725],[0.6482,0.3514],[0.6658,0.3340],[0.6801,0.3197],[0.6915,0.3083],[0.7006,0.2993],[0.7079,0.2920],[0.7140,0.2859],[0.7190,0.2809],[0.7260,0.2740],[0.7300,0.2700],[0.7347,0.2653]];
var base=loc;loc=[];
for(var s=0;s<base.length-1;s++){var p0=base[Math.max(0,s-1)],p1=base[s],p2=base[s+1],p3=base[Math.min(base.length-1,s+2)];
 for(var t=0;t<10;t++){var u=t/10,u2=u*u,u3=u2*u;
  var fx=0.5*((2*p1[0])+(-p0[0]+p2[0])*u+(2*p0[0]-5*p1[0]+4*p2[0]-p3[0])*u2+(-p0[0]+3*p1[0]-3*p2[0]+p3[0])*u3);
  var fy=0.5*((2*p1[1])+(-p0[1]+p2[1])*u+(2*p0[1]-5*p1[1]+4*p2[1]-p3[1])*u2+(-p0[1]+3*p1[1]-3*p2[1]+p3[1])*u3);
  loc.push([fx,fy]);}}
loc.push(base[base.length-1]);
var n=loc.length;
function inLoc(x,y){var c=false;for(var i=0,j=n-1;i<n;j=i++){var xi=loc[i][0],yi=loc[i][1],xj=loc[j][0],yj=loc[j][1];if(((yi>y)!=(yj>y))&&(x<(xj-xi)*(y-yi)/(yj-yi)+xi))c=!c;}return c;}
var R=[0.680,0.320],G=[0.265,0.690],B=[0.150,0.060];
function side(p,a,b){return (b[0]-a[0])*(p[1]-a[1])-(b[1]-a[1])*(p[0]-a[0]);}
function inTri(x,y){var p=[x,y];var d1=side(p,R,G),d2=side(p,G,B),d3=side(p,B,R);var neg=(d1<0)||(d2<0)||(d3<0),pos=(d1>0)||(d2>0)||(d3>0);return !(neg&&pos);}
var DARK=0.6;
function col(x,y,out){
  if(!inLoc(x,y)){out[0]=34;out[1]=34;out[2]=34;return;}
  var X=x/y,Z=(1-x-y)/y;
  var r=2.4934969*X-0.9313836-0.4027108*Z;
  var g=-0.8294890*X+1.7626641+0.0236247*Z;
  var b=0.0358458*X-0.0761724+0.9568845*Z;
  if(r<0)r=0;if(g<0)g=0;if(b<0)b=0;
  var m=Math.max(r,g,b);if(m<=0)m=1;
  r/=m;g/=m;b/=m;
  var f=inTri(x,y)?255:255*DARK;
  out[0]=r*f;out[1]=g*f;out[2]=b*f;
}
var img=ctx.createImageData(Wc,Hc);var d=img.data;var o=[0,0,0];
var S=3835,xc=0.4379,yc=0.5359,icx=1610.6,icy=162.5;
for(var j=0;j<Hc;j++){for(var i=0;i<Wc;i++){
  var PX=L+i,PY=T+j;var k=(j*Wc+i)*4;var rs=0,gs=0,bs=0;
  if(PX>=1513&&PY<=260){
    if(PX>=1516&&PY>=69&&PY<=256&&PX<=1704){
      for(var sy=0;sy<2;sy++)for(var sx=0;sx<2;sx++){var x=xc+(PX+0.25+sx*0.5-icx)/S,y=yc-(PY+0.25+sy*0.5-icy)/S;col(x,y,o);rs+=o[0];gs+=o[1];bs+=o[2];}
      d[k]=rs/4;d[k+1]=gs/4;d[k+2]=bs/4;d[k+3]=255;
    } else {d[k]=51;d[k+1]=51;d[k+2]=51;d[k+3]=255;}
    continue;
  }
  for(var sy=0;sy<2;sy++)for(var sx=0;sx<2;sx++){var x=(PX+0.25+sx*0.5-1037.6)/794.6,y=(589.6-(PY+0.25+sy*0.5))/620.7;col(x,y,o);rs+=o[0];gs+=o[1];bs+=o[2];}
  d[k]=rs/4;d[k+1]=gs/4;d[k+2]=bs/4;d[k+3]=255;
}}
ctx.putImageData(img,0,0);
})();

</script>
</body></html>
